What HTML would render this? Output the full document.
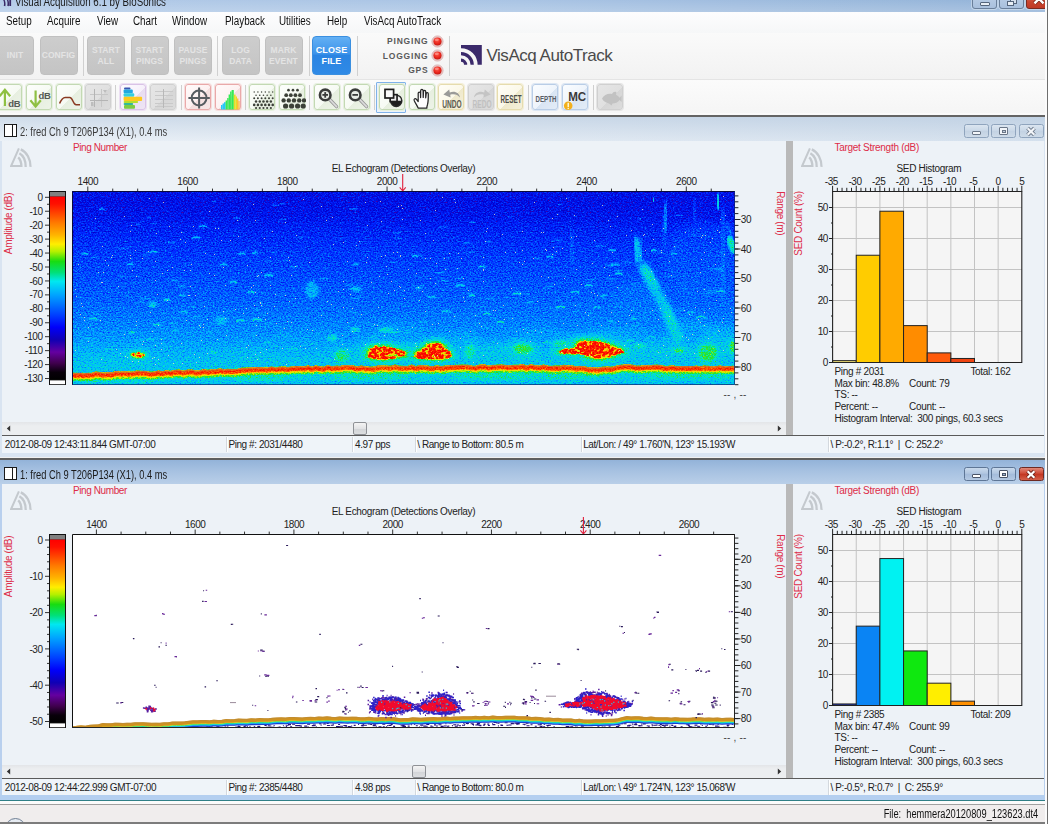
<!DOCTYPE html>
<html lang="en"><head><meta charset="utf-8"><title>Visual Acquisition 6.1 by BioSonics</title>
<style>
*{box-sizing:border-box;margin:0;padding:0}
html,body{width:1048px;height:824px;overflow:hidden;background:#f0f0f0;font-family:"Liberation Sans",sans-serif;}
.a{position:absolute}
#root{position:absolute;left:0;top:0;width:1048px;height:824px;overflow:hidden;background:#f0f0f0}
.t{position:absolute;white-space:nowrap;line-height:1}
.menu{font-size:12.5px;color:#111;top:15px;letter-spacing:-0.35px}
.bigbtn{position:absolute;top:36px;height:39px;width:38px;border-radius:4px;background:linear-gradient(#cdcdcd,#c4c4c4);border:1px solid #c0c0c0;color:#e4e4e4;font-weight:bold;font-size:8.5px;text-align:center;line-height:10.5px;display:flex;align-items:center;justify-content:center;letter-spacing:0.1px}
.vsep{position:absolute;width:1px;background:#d0d0d0}
.sb{position:absolute;top:83.8px;width:26px;height:26.4px;border-radius:3px;border:1px solid #c3d9b3;background:linear-gradient(135deg,#fdfefc 0%,#f6faf3 55%,#e7efe0 56%,#edf3e8 100%);box-shadow:0 0 0 1px #e6f0df}
.sb svg{position:absolute;left:0;top:0}
.sb.red{border-color:#e9a9a9;box-shadow:0 0 0 1px #f6dcdc;background:linear-gradient(135deg,#fffafa 0%,#fdf1f1 55%,#f3dede 56%,#f8e8e8 100%)}
.sb.gray{border-color:#d0d0d0;box-shadow:0 0 0 1px #e4e4e4;background:linear-gradient(135deg,#e6e6e6 0%,#e0e0e0 55%,#d6d6d6 56%,#dcdcdc 100%)}
.sb.pur{border-color:#d9c3e6;box-shadow:0 0 0 1px #ece0f3;background:linear-gradient(135deg,#fdfbff 0%,#f6f0fa 55%,#e8dcf0 56%,#efe6f5 100%)}
.sb.yel{border-color:#e6dcae;box-shadow:0 0 0 1px #f3eed6;background:linear-gradient(135deg,#fffef8 0%,#fbf8e8 55%,#efe9cc 56%,#f5f0da 100%)}
.sb.blu{border-color:#b9cde6;box-shadow:0 0 0 1px #dbe6f3;background:linear-gradient(135deg,#fbfdff 0%,#eef4fb 55%,#d9e5f3 56%,#e3ecf7 100%)}
.ct{font-size:10.5px;color:#222}
.red{color:#dc2a45}
.st{font-size:10.5px;color:#222;letter-spacing:-0.1px}
</style></head>
<body><div id="root">
<svg width="0" height="0" style="position:absolute"><defs>
<radialGradient id="led" cx="45%" cy="35%" r="70%"><stop offset="0" stop-color="#ff5a4a"/><stop offset=".6" stop-color="#e8251c"/><stop offset="1" stop-color="#b81810"/></radialGradient>
</defs></svg>
<div class="a" style="left:0;top:0;width:1045px;height:12px;background:linear-gradient(rgba(255,255,255,0),rgba(255,255,255,.18)),linear-gradient(90deg,#b3cbe8,#a9c4e4 50%,#93b3d8)"></div>
<svg class="a" style="left:0;top:0" width="12" height="8" viewBox="0 0 12 8"><path d="M0 -4 A9 9 0 0 1 4.5 6 M3 -5 A10 10 0 0 1 8 6" stroke="#3a2a66" stroke-width="1.6" fill="none"/><rect x="9.3" y="-2" width="1.8" height="8" fill="#3a2a66"/></svg>
<div class="t" style="top:-3.98px;font-size:12px;letter-spacing:0px;color:#1a1a1a;left:15.00px;transform:scaleX(0.812);transform-origin:left center;">Visual Acquisition 6.1 by BioSonics</div>
<div class="a" style="left:972px;top:-9px;width:25px;height:17.6px;border:1px solid #6a7f9a;border-radius:3px;background:linear-gradient(#c9d9ec,#b4c9e3 50%,#a9c0dd);box-shadow:0 0 0 1px rgba(255,255,255,.35)"></div>
<div class="a" style="left:999px;top:-9px;width:25px;height:17.6px;border:1px solid #6a7f9a;border-radius:3px;background:linear-gradient(#c9d9ec,#b4c9e3 50%,#a9c0dd);box-shadow:0 0 0 1px rgba(255,255,255,.35)"></div>
<div class="a" style="left:1026px;top:-9px;width:25px;height:17.6px;border:1px solid #7a2a20;border-radius:3px;background:linear-gradient(#dc8f80,#c9452f 60%,#c03a26);box-shadow:0 0 0 1px rgba(255,255,255,.35)"></div>
<div class="a" style="left:980px;top:1.6px;width:9.5px;height:4px;background:#e8eef5;border:1px solid #55657c;border-radius:1px"></div>
<div class="a" style="left:1010px;top:-2px;width:7px;height:6px;background:#d5dfec;border:1px solid #55657c"></div>
<div class="a" style="left:1007px;top:0.5px;width:6.5px;height:5.5px;background:#e8eef5;border:1px solid #55657c"></div>
<svg class="a" style="left:1033px;top:-3px" width="13" height="9" viewBox="0 0 13 9"><path d="M1.5 -3 L10.5 6.4 M10.5 -3 L1.5 6.4" stroke="#7a2a20" stroke-width="4"/><path d="M1.5 -3 L10.5 6.4 M10.5 -3 L1.5 6.4" stroke="#fff" stroke-width="2.4"/></svg>
<div class="a" style="left:0;top:12px;width:1048px;height:21px;background:linear-gradient(#fdfdfe,#f6f7f8)"></div>
<div class="t" style="top:14.92px;font-size:12px;letter-spacing:0px;color:#111;left:6.00px;transform:scaleX(0.82);transform-origin:left center;">Setup</div>
<div class="t" style="top:14.92px;font-size:12px;letter-spacing:0px;color:#111;left:47.00px;transform:scaleX(0.82);transform-origin:left center;">Acquire</div>
<div class="t" style="top:14.92px;font-size:12px;letter-spacing:0px;color:#111;left:97.00px;transform:scaleX(0.82);transform-origin:left center;">View</div>
<div class="t" style="top:14.92px;font-size:12px;letter-spacing:0px;color:#111;left:133.00px;transform:scaleX(0.82);transform-origin:left center;">Chart</div>
<div class="t" style="top:14.92px;font-size:12px;letter-spacing:0px;color:#111;left:172.00px;transform:scaleX(0.82);transform-origin:left center;">Window</div>
<div class="t" style="top:14.92px;font-size:12px;letter-spacing:0px;color:#111;left:225.00px;transform:scaleX(0.82);transform-origin:left center;">Playback</div>
<div class="t" style="top:14.92px;font-size:12px;letter-spacing:0px;color:#111;left:279.00px;transform:scaleX(0.82);transform-origin:left center;">Utilities</div>
<div class="t" style="top:14.92px;font-size:12px;letter-spacing:0px;color:#111;left:327.00px;transform:scaleX(0.82);transform-origin:left center;">Help</div>
<div class="t" style="top:14.92px;font-size:12px;letter-spacing:0px;color:#111;left:364.00px;transform:scaleX(0.82);transform-origin:left center;">VisAcq AutoTrack</div>
<div class="a" style="left:0;top:33px;width:1048px;height:46px;background:linear-gradient(#fafafa,#f2f2f2)"></div>
<div class="a" style="left:0;top:78.6px;width:1048px;height:1.4px;background:#e4e4e4"></div>
<div class="bigbtn" style="left:-4px">INIT</div>
<div class="bigbtn" style="left:39.5px">CONFIG</div>
<div class="bigbtn" style="left:87px">START<br>ALL</div>
<div class="bigbtn" style="left:130.5px">START<br>PINGS</div>
<div class="bigbtn" style="left:174px">PAUSE<br>PINGS</div>
<div class="bigbtn" style="left:221.5px">LOG<br>DATA</div>
<div class="bigbtn" style="left:264.5px">MARK<br>EVENT</div>
<div class="bigbtn" style="left:312px;width:39px;background:linear-gradient(#63b0f4,#3c93ea 45%,#2a84e2 50%,#2f8ae6);border-color:#3a8fe0;color:#fff;font-size:9px">CLOSE<br>FILE</div>
<div class="vsep" style="left:82.5px;top:36px;height:40px"></div>
<div class="vsep" style="left:217px;top:36px;height:40px"></div>
<div class="vsep" style="left:308.5px;top:36px;height:40px"></div>
<div class="vsep" style="left:356.5px;top:36px;height:40px"></div>
<div class="vsep" style="left:449px;top:36px;height:40px"></div>
<div class="t" style="top:37.13px;font-size:8.5px;letter-spacing:0.8px;color:#5a5a5a;font-weight:bold;right:619.50px;">PINGING</div>
<svg class="a" style="left:431.3px;top:34.8px" width="13" height="13" viewBox="-6.5 -6.5 13 13"><circle r="5.6" fill="#e8c8c8" stroke="#d9a9a9" stroke-width="0.8"/><circle r="4.1" fill="url(#led)"/><ellipse cx="-0.8" cy="-1.8" rx="2.2" ry="1.3" fill="#ff9a90" opacity=".75"/></svg>
<div class="t" style="top:51.54px;font-size:8.5px;letter-spacing:0.8px;color:#5a5a5a;font-weight:bold;right:619.50px;">LOGGING</div>
<svg class="a" style="left:431.3px;top:49.2px" width="13" height="13" viewBox="-6.5 -6.5 13 13"><circle r="5.6" fill="#e8c8c8" stroke="#d9a9a9" stroke-width="0.8"/><circle r="4.1" fill="url(#led)"/><ellipse cx="-0.8" cy="-1.8" rx="2.2" ry="1.3" fill="#ff9a90" opacity=".75"/></svg>
<div class="t" style="top:66.13px;font-size:8.5px;letter-spacing:0.8px;color:#5a5a5a;font-weight:bold;right:619.50px;">GPS</div>
<svg class="a" style="left:431.3px;top:63.8px" width="13" height="13" viewBox="-6.5 -6.5 13 13"><circle r="5.6" fill="#e8c8c8" stroke="#d9a9a9" stroke-width="0.8"/><circle r="4.1" fill="url(#led)"/><ellipse cx="-0.8" cy="-1.8" rx="2.2" ry="1.3" fill="#ff9a90" opacity=".75"/></svg>
<svg class="a" style="left:460.5px;top:44.5px" width="21" height="20" viewBox="0 0 21 20"><path fill="#3b2a6b" fill-rule="evenodd" d="M0 0 H20.8 V19.8 H16.6 A16.6 16.6 0 0 0 0 3.2 Z"/><path fill="none" stroke="#3b2a6b" stroke-width="3.3" d="M0 8.6 A11.2 11.2 0 0 1 11.2 19.8"/><path fill="none" stroke="#3b2a6b" stroke-width="3.2" d="M0 15.2 A4.6 4.6 0 0 1 4.6 19.8"/></svg>
<div class="t" style="top:47.47px;font-size:17px;letter-spacing:-0.47px;color:#4a4a4a;left:486.50px;">VisAcq AutoTrack</div>
<div class="a" style="left:0;top:80px;width:1048px;height:35px;background:linear-gradient(#fbfbfb,#f5f5f5)"></div>
<div class="a" style="left:0;top:113px;width:1048px;height:2px;background:#fafafa"></div>
<div class="a" style="left:0;top:115px;width:1046px;height:2px;background:#646464"></div>
<div class="vsep" style="left:115.3px;top:85px;height:25px;background:#cfcfcf"></div>
<div class="vsep" style="left:180.5px;top:85px;height:25px;background:#cfcfcf"></div>
<div class="vsep" style="left:245.2px;top:85px;height:25px;background:#cfcfcf"></div>
<div class="vsep" style="left:309.3px;top:85px;height:25px;background:#cfcfcf"></div>
<div class="vsep" style="left:373.8px;top:85px;height:25px;background:#cfcfcf"></div>
<div class="vsep" style="left:528.2px;top:85px;height:25px;background:#cfcfcf"></div>
<div class="vsep" style="left:592.6px;top:85px;height:25px;background:#cfcfcf"></div>
<div class="sb " style="left:-4.4px"><svg width="26" height="26" viewBox="0 0 26 26" font-family="Liberation Sans, sans-serif"><path d="M7.9 21 V5.5 M2.6 11.2 L7.9 4.8 L13.2 11.2" fill="none" stroke="#8fc043" stroke-width="2.2"/><text x="11.2" y="21.6" font-size="9.5" font-weight="bold" fill="#555a55" letter-spacing="-0.2">dB</text></svg></div>
<div class="sb " style="left:25.8px"><svg width="26" height="26" viewBox="0 0 26 26" font-family="Liberation Sans, sans-serif"><path d="M8.6 5.5 V21 M3.4 15.2 L8.6 21.6 L13.8 15.2" fill="none" stroke="#8fc043" stroke-width="2.2"/><text x="11.4" y="14" font-size="9.5" font-weight="bold" fill="#555a55" letter-spacing="-0.2">dB</text></svg></div>
<div class="sb " style="left:55.6px"><svg width="26" height="26" viewBox="0 0 26 26" font-family="Liberation Sans, sans-serif"><path d="M2.6 18.6 C4.2 14.5 5.8 12.4 8.2 12.4 L12.8 12.4 C16 12.4 15.8 19.8 19.2 19.8 L23 19.8" fill="none" stroke="#8a3a22" stroke-width="1.5"/></svg></div>
<div class="sb gray" style="left:85.4px"><svg width="26" height="26" viewBox="0 0 26 26" font-family="Liberation Sans, sans-serif"><g stroke="#c6c6c6" stroke-width="1" fill="none"><path d="M8.5 4 V22 M4 15.5 H22 M4 9.5 H22 M15.5 4 V22"/></g><g stroke="#b4b4b4" stroke-width="1"><path d="M8.5 4 V22 M4 15.5 H22"/></g><rect x="5" y="17" width="2.5" height="4" fill="#bdbdbd"/><path d="M17 5 h4 l-2 3z" fill="#bdbdbd"/></svg></div>
<div class="sb pur" style="left:119.8px"><svg width="26" height="26" viewBox="0 0 26 26" font-family="Liberation Sans, sans-serif"><rect x="3" y="2.6" width="6.5" height="2" rx="1" fill="#3a55b0"/><rect x="2.6" y="4.6" width="9.2" height="3.6" rx="1" fill="#22a8e0"/><rect x="2.6" y="8.2" width="10.6" height="3.6" rx="1" fill="#35cfe0"/><rect x="2.6" y="11.8" width="18.5" height="4.2" rx="1" fill="#ffc91e"/><rect x="2.6" y="16" width="14.5" height="2" rx="1" fill="#b4de30"/><rect x="2.6" y="18" width="9.6" height="2" rx="1" fill="#33b89a"/><rect x="3" y="20" width="11" height="3.8" rx="1" fill="#7ccc44"/></svg></div>
<div class="sb gray" style="left:149.8px"><svg width="26" height="26" viewBox="0 0 26 26" font-family="Liberation Sans, sans-serif"><g stroke="#c9c9c9" stroke-width="1"><path d="M4 6.5 H22 M4 10.5 H22 M4 14.5 H22 M4 18.5 H22 M4 21.5 H22"/></g><path d="M12.5 4 V23" stroke="#b8b8b8" stroke-width="1"/></svg></div>
<div class="sb red" style="left:184.8px"><svg width="26" height="26" viewBox="0 0 26 26" font-family="Liberation Sans, sans-serif"><g fill="none" stroke="#575c61" stroke-width="2"><circle cx="13.1" cy="13" r="7.4"/><path d="M13.1 2.6 V23.6 M2.4 13 H23.8"/></g></svg></div>
<div class="sb red" style="left:214.5px"><svg width="26" height="26" viewBox="0 0 26 26" font-family="Liberation Sans, sans-serif"><rect x="5" y="20" width="1.5" height="4.5" fill="#25c8fa"/><rect x="6.5" y="18.5" width="1.5" height="6.0" fill="#25c8fa"/><rect x="8" y="17.2" width="1.6" height="7.300000000000001" fill="#25c8fa"/><rect x="9.6" y="15.5" width="1.6" height="9.0" fill="#35ea55"/><rect x="11.2" y="13" width="1.4" height="11.5" fill="#35ea55"/><rect x="12.6" y="9.5" width="1.5" height="15.0" fill="#35ea55"/><rect x="14.1" y="6.5" width="1.5" height="18.0" fill="#35ea55"/><rect x="15.6" y="5" width="2.2" height="19.5" fill="#35ea55"/><rect x="17.8" y="9.6" width="1.8" height="14.9" fill="#e6df25"/><rect x="19.6" y="11.5" width="1.4" height="13.0" fill="#e6df25"/><rect x="21" y="13.5" width="1.4" height="11.0" fill="#ffbe3a"/><rect x="22.4" y="16" width="1.2" height="8.5" fill="#ffbe3a"/></svg></div>
<div class="sb " style="left:249.3px"><svg width="26" height="26" viewBox="0 0 26 26" font-family="Liberation Sans, sans-serif"><circle cx="4.20" cy="7" r="0.7" fill="#3c4038"/><circle cx="7.90" cy="7" r="0.7" fill="#3c4038"/><circle cx="11.60" cy="7" r="0.7" fill="#3c4038"/><circle cx="15.30" cy="7" r="0.7" fill="#3c4038"/><circle cx="19.00" cy="7" r="0.7" fill="#3c4038"/><circle cx="22.70" cy="7" r="0.7" fill="#3c4038"/><circle cx="6.05" cy="10.2" r="0.8" fill="#3c4038"/><circle cx="9.75" cy="10.2" r="0.8" fill="#3c4038"/><circle cx="13.45" cy="10.2" r="0.8" fill="#3c4038"/><circle cx="17.15" cy="10.2" r="0.8" fill="#3c4038"/><circle cx="20.85" cy="10.2" r="0.8" fill="#3c4038"/><circle cx="4.20" cy="13.3" r="1.0" fill="#3c4038"/><circle cx="7.90" cy="13.3" r="1.0" fill="#3c4038"/><circle cx="11.60" cy="13.3" r="1.0" fill="#3c4038"/><circle cx="15.30" cy="13.3" r="1.0" fill="#3c4038"/><circle cx="19.00" cy="13.3" r="1.0" fill="#3c4038"/><circle cx="22.70" cy="13.3" r="1.0" fill="#3c4038"/><circle cx="6.05" cy="16.5" r="1.25" fill="#3c4038"/><circle cx="9.75" cy="16.5" r="1.25" fill="#3c4038"/><circle cx="13.45" cy="16.5" r="1.25" fill="#3c4038"/><circle cx="17.15" cy="16.5" r="1.25" fill="#3c4038"/><circle cx="20.85" cy="16.5" r="1.25" fill="#3c4038"/><circle cx="4.20" cy="19.9" r="1.3" fill="#3c4038"/><circle cx="7.90" cy="19.9" r="1.3" fill="#3c4038"/><circle cx="11.60" cy="19.9" r="1.3" fill="#3c4038"/><circle cx="15.30" cy="19.9" r="1.3" fill="#3c4038"/><circle cx="19.00" cy="19.9" r="1.3" fill="#3c4038"/><circle cx="22.70" cy="19.9" r="1.3" fill="#3c4038"/><circle cx="6.05" cy="23" r="1.1" fill="#3c4038"/><circle cx="9.75" cy="23" r="1.1" fill="#3c4038"/><circle cx="13.45" cy="23" r="1.1" fill="#3c4038"/><circle cx="17.15" cy="23" r="1.1" fill="#3c4038"/><circle cx="20.85" cy="23" r="1.1" fill="#3c4038"/></svg></div>
<div class="sb " style="left:279.2px"><svg width="26" height="26" viewBox="0 0 26 26" font-family="Liberation Sans, sans-serif"><circle cx="8.5" cy="5.2" r="1.35" fill="#3c4038"/><circle cx="13" cy="5.2" r="1.35" fill="#3c4038"/><circle cx="17.5" cy="5.2" r="1.35" fill="#3c4038"/><circle cx="6.2" cy="10.2" r="1.9" fill="#3c4038"/><circle cx="10.8" cy="10.2" r="1.9" fill="#3c4038"/><circle cx="15.4" cy="10.2" r="1.9" fill="#3c4038"/><circle cx="20" cy="10.2" r="1.9" fill="#3c4038"/><circle cx="3.6" cy="15.4" r="2.2" fill="#3c4038"/><circle cx="8.8" cy="15.4" r="2.2" fill="#3c4038"/><circle cx="14" cy="15.4" r="2.2" fill="#3c4038"/><circle cx="19.2" cy="15.4" r="2.2" fill="#3c4038"/><circle cx="24" cy="15.4" r="2.2" fill="#3c4038"/><circle cx="5.6" cy="21" r="2.6" fill="#3c4038"/><circle cx="11.6" cy="21" r="2.6" fill="#3c4038"/><circle cx="17.6" cy="21" r="2.6" fill="#3c4038"/><circle cx="23.2" cy="21" r="2.6" fill="#3c4038"/></svg></div>
<div class="sb " style="left:313.8px"><svg width="26" height="26" viewBox="0 0 26 26" font-family="Liberation Sans, sans-serif"><path d="M14.5 14.2 L21.6 21.6" stroke="#9a9a9a" stroke-width="3.4" stroke-linecap="round"/><path d="M14.5 14.2 L21.6 21.6" stroke="#dcdcdc" stroke-width="1.6" stroke-linecap="round"/><circle cx="10.2" cy="9.9" r="5.3" fill="#e8ece6" stroke="#3a3c3a" stroke-width="2.6"/><path d="M7.4 9.9 H13" stroke="#3a3c3a" stroke-width="1.8"/><path d="M10.2 7.1 V12.7" stroke="#3a3c3a" stroke-width="1.8"/></svg></div>
<div class="sb " style="left:343.5px"><svg width="26" height="26" viewBox="0 0 26 26" font-family="Liberation Sans, sans-serif"><path d="M14.5 14.2 L21.6 21.6" stroke="#9a9a9a" stroke-width="3.4" stroke-linecap="round"/><path d="M14.5 14.2 L21.6 21.6" stroke="#dcdcdc" stroke-width="1.6" stroke-linecap="round"/><circle cx="10.2" cy="9.9" r="5.3" fill="#e8ece6" stroke="#3a3c3a" stroke-width="2.6"/><path d="M7.4 9.9 H13" stroke="#3a3c3a" stroke-width="1.8"/></svg></div>
<div class="a" style="left:376.2px;top:81.5px;width:30.2px;height:31px;border:1px solid #7fb2ea;background:#eaf2fb;border-radius:1px"></div>
<div class="sb " style="left:378.5px"><svg width="26" height="26" viewBox="0 0 26 26" font-family="Liberation Sans, sans-serif"><circle cx="16.2" cy="15.8" r="5.6" fill="#f2f2f2" stroke="#2a2a2a" stroke-width="1.5"/><path d="M10.8 15.8 A5.4 5.4 0 0 0 21.6 15.8 Z" fill="#1e1e1e"/><rect x="9.3" y="8.8" width="8.6" height="8.6" fill="#1e1e1e"/><rect x="11" y="10.5" width="5.2" height="5.2" fill="#ececec"/><rect x="5" y="4.4" width="8.6" height="8.6" fill="#fafafa" stroke="#1e1e1e" stroke-width="1.7"/></svg></div>
<div class="sb " style="left:408.5px"><svg width="26" height="26" viewBox="0 0 26 26" font-family="Liberation Sans, sans-serif"><path d="M8.3 23.2 C7 20.5 5.2 17.8 4.2 15.4 C3.6 13.8 5.4 13 6.5 14.4 L8.2 16.6 L8.2 8.2 C8.2 6.6 10.4 6.6 10.5 8.2 L10.6 12.6 L10.7 5.6 C10.8 4 13 4 13.1 5.6 L13.2 12.4 L13.5 6.4 C13.6 4.9 15.7 5 15.7 6.5 L15.7 12.8 L16.2 8.6 C16.4 7.2 18.3 7.4 18.3 8.9 C18.3 12.5 18.4 16 17.6 19.2 C17.2 20.6 16.8 21.8 16.8 23.2 Z" fill="#fdfdfd" stroke="#262626" stroke-width="1.25" stroke-linejoin="round"/></svg></div>
<div class="sb yel" style="left:438.2px"><svg width="26" height="26" viewBox="0 0 26 26" font-family="Liberation Sans, sans-serif"><path d="M21 12.6 C20.5 8 16 5.6 10.8 7.4 L10.2 4.6 L4.4 9.6 L11.6 12.4 L11.2 9.8 C15.2 8.6 18.8 9.8 21 12.6 Z" fill="#9a9a98"/><text x="13" y="23" font-size="10" font-weight="bold" fill="#5a5a50" text-anchor="middle" textLength="19.4" lengthAdjust="spacingAndGlyphs">UNDO</text></svg></div>
<div class="sb gray" style="left:468px"><svg width="26" height="26" viewBox="0 0 26 26" font-family="Liberation Sans, sans-serif"><path d="M5 12.6 C5.5 8 10 5.6 15.2 7.4 L15.8 4.6 L21.6 9.6 L14.4 12.4 L14.8 9.8 C10.8 8.6 7.2 9.8 5 12.6 Z" fill="#c4c4c4"/><text x="13" y="23" font-size="10" font-weight="bold" fill="#c0c0c0" text-anchor="middle" textLength="19" lengthAdjust="spacingAndGlyphs">REDO</text></svg></div>
<div class="sb yel" style="left:497.4px"><svg width="26" height="26" viewBox="0 0 26 26" font-family="Liberation Sans, sans-serif"><text x="13" y="17.7" font-size="10.6" font-weight="bold" fill="#4e4e48" text-anchor="middle" textLength="21" lengthAdjust="spacingAndGlyphs">RESET</text></svg></div>
<div class="sb blu" style="left:532.3px"><svg width="26" height="26" viewBox="0 0 26 26" font-family="Liberation Sans, sans-serif"><text x="13" y="17" font-size="9.6" font-weight="bold" fill="#5a5e66" text-anchor="middle" textLength="21" lengthAdjust="spacingAndGlyphs">DEPTH</text></svg></div>
<div class="sb blu" style="left:562.1px"><svg width="26" height="26" viewBox="0 0 26 26" font-family="Liberation Sans, sans-serif"><text x="14.2" y="16.4" font-size="12.2" font-weight="bold" fill="#3a3a3a" text-anchor="middle" textLength="18" lengthAdjust="spacingAndGlyphs">MC</text><circle cx="5.2" cy="20.8" r="4.3" fill="#f2b01e"/><rect x="4.5" y="17.8" width="1.5" height="4.2" fill="#fff6d0"/><rect x="4.5" y="22.8" width="1.5" height="1.3" fill="#fff6d0"/></svg></div>
<div class="sb gray" style="left:597px"><svg width="26" height="26" viewBox="0 0 26 26" font-family="Liberation Sans, sans-serif"><path d="M4 13.6 C6 9.8 10 8.2 14 9 C15 7 17 6.4 18.4 7.2 L18 9.8 C19.8 10.6 21 11.8 21.6 12.8 L23.6 10.6 L23.6 17 L21.6 15 C20 17.4 17 18.6 14.4 18.6 L13.6 20.6 L11 18.4 C8 18 5.4 16.4 4 13.6 Z" fill="#c2c2c2"/></svg></div>
<svg width="0" height="0" style="position:absolute"><defs><linearGradient id="cbar" x1="0" y1="0" x2="0" y2="1"><stop offset="0" stop-color="#ff0000"/><stop offset="0.04" stop-color="#ff1000"/><stop offset="0.143" stop-color="#ff7a00"/><stop offset="0.21" stop-color="#ffb400"/><stop offset="0.26" stop-color="#ffee00"/><stop offset="0.3" stop-color="#b4f000"/><stop offset="0.354" stop-color="#18dc10"/><stop offset="0.415" stop-color="#00e07a"/><stop offset="0.463" stop-color="#00e8f0"/><stop offset="0.537" stop-color="#00a4ff"/><stop offset="0.646" stop-color="#0040ff"/><stop offset="0.714" stop-color="#0000fa"/><stop offset="0.782" stop-color="#1000b4"/><stop offset="0.85" stop-color="#6400a0"/><stop offset="0.91" stop-color="#40004e"/><stop offset="0.96" stop-color="#08000a"/><stop offset="1" stop-color="#000"/></linearGradient></defs></svg>
<div class="a" style="left:0;top:117px;width:1046px;height:340px;background:#d9e4f1"></div>
<div class="a" style="left:0;top:117px;width:1046px;height:24px;background:linear-gradient(90deg,#e4ecf4,#d4e0ed 60%,#c6d6e7)"></div>
<div class="a" style="left:0;top:117px;width:1046px;height:24px;background:linear-gradient(rgba(190,207,226,.55),rgba(255,255,255,.25))"></div>
<div class="a" style="left:4px;top:124px;width:12.8px;height:12.8px;background:#fff;border:1px solid #1a1a1a"></div>
<div class="a" style="left:12.4px;top:124px;width:1px;height:12.5px;background:#1a1a1a"></div>
<div class="t" style="top:126.02px;font-size:12px;letter-spacing:0px;color:#3c3c3c;left:20.00px;transform:scaleX(0.775);transform-origin:left center;">2: fred Ch 9 T206P134 (X1), 0.4 ms</div>
<div class="a" style="left:963.5px;top:124px;width:25px;height:14px;border-radius:2.5px;background:linear-gradient(#dbe5f0,#cbd9e8 45%,#c3d2e3 50%,#cedbe9);border:1px solid #8fa4bd"></div>
<div class="a" style="left:991px;top:124px;width:25px;height:14px;border-radius:2.5px;background:linear-gradient(#dbe5f0,#cbd9e8 45%,#c3d2e3 50%,#cedbe9);border:1px solid #8fa4bd"></div>
<div class="a" style="left:1018.5px;top:124px;width:25px;height:14px;border-radius:2.5px;background:linear-gradient(#dbe5f0,#cbd9e8 45%,#c3d2e3 50%,#cedbe9);border:1px solid #8fa4bd"></div>
<div class="a" style="left:972px;top:131px;width:9px;height:4px;background:#f2f5f9;border:1px solid #6a7687;border-radius:1px"></div>
<div class="a" style="left:999px;top:126.5px;width:9px;height:8px;background:#f2f5f9;border:1px solid #6a7687;border-radius:1px"></div>
<div class="a" style="left:1001.5px;top:129.5px;width:4px;height:3px;background:#c3d0df;border:1px solid #6a7687"></div>
<svg class="a" style="left:1025px;top:125.5px" width="12" height="11" viewBox="0 0 12 11"><path d="M2.6 2.2 L9.4 8.8 M9.4 2.2 L2.6 8.8" stroke="#6a7687" stroke-width="3.8"/><path d="M2.6 2.2 L9.4 8.8 M9.4 2.2 L2.6 8.8" stroke="#f2f5f9" stroke-width="2.2"/></svg>
<div class="a" style="left:2px;top:141px;width:1041.5px;height:294px;background:#edf2f7"></div>
<div class="a" style="left:786px;top:141px;width:7px;height:294px;background:#b9b9b9"></div>
<svg class="a" style="left:9.5px;top:147px" width="23" height="21" viewBox="0 0 23 21"><g fill="none" stroke="#c4c9ce"><path d="M8.9 1.3 L1.1 19 L11 19" stroke-width="2"/><path d="M8.2 10.4 A5.7 10.7 0 0 1 11.4 19.9" stroke-width="2.3"/><path d="M9.4 6.2 A10 14.7 0 0 1 15.7 19.9" stroke-width="2.3"/><path d="M10.8 2.4 A14.8 18.1 0 0 1 20.5 19.9" stroke-width="2.3"/></g></svg>
<svg class="a" style="left:800.5px;top:147px" width="23" height="21" viewBox="0 0 23 21"><g fill="none" stroke="#c4c9ce"><path d="M8.9 1.3 L1.1 19 L11 19" stroke-width="2"/><path d="M8.2 10.4 A5.7 10.7 0 0 1 11.4 19.9" stroke-width="2.3"/><path d="M9.4 6.2 A10 14.7 0 0 1 15.7 19.9" stroke-width="2.3"/><path d="M10.8 2.4 A14.8 18.1 0 0 1 20.5 19.9" stroke-width="2.3"/></g></svg>
<div class="t" style="top:142.70px;font-size:10px;letter-spacing:-0.4px;color:#dd2c48;left:73.00px;">Ping Number</div>
<div class="t" style="top:142.70px;font-size:10px;letter-spacing:-0.28px;color:#dd2c48;left:834.50px;">Target Strength (dB)</div>
<div class="t" style="top:163.70px;font-size:10px;letter-spacing:-0.33px;color:#222;left:331.70px;">EL Echogram (Detections Overlay)</div>
<div class="t" style="top:164.00px;font-size:10px;letter-spacing:-0.3px;color:#222;left:896.40px;">SED Histogram</div>
<svg class="a" style="left:0;top:141px" width="790" height="294" viewBox="0 141 790 294" font-family="Liberation Sans, sans-serif" font-size="10"><path d="M87.80 186.5 V191 M112.74 188.6 V191 M137.68 188.6 V191 M162.61 188.6 V191 M187.55 186.5 V191 M212.49 188.6 V191 M237.43 188.6 V191 M262.36 188.6 V191 M287.30 186.5 V191 M312.24 188.6 V191 M337.18 188.6 V191 M362.11 188.6 V191 M387.05 186.5 V191 M411.99 188.6 V191 M436.93 188.6 V191 M461.86 188.6 V191 M486.80 186.5 V191 M511.74 188.6 V191 M536.67 188.6 V191 M561.61 188.6 V191 M586.55 186.5 V191 M611.49 188.6 V191 M636.42 188.6 V191 M661.36 188.6 V191 M686.30 186.5 V191 M711.24 188.6 V191" stroke="#333" stroke-width="1" fill="none"/><text x="87.80" y="185" text-anchor="middle" fill="#222" letter-spacing="-0.45">1400</text><text x="187.55" y="185" text-anchor="middle" fill="#222" letter-spacing="-0.45">1600</text><text x="287.30" y="185" text-anchor="middle" fill="#222" letter-spacing="-0.45">1800</text><text x="387.05" y="185" text-anchor="middle" fill="#222" letter-spacing="-0.45">2000</text><text x="486.80" y="185" text-anchor="middle" fill="#222" letter-spacing="-0.45">2200</text><text x="586.55" y="185" text-anchor="middle" fill="#222" letter-spacing="-0.45">2400</text><text x="686.30" y="185" text-anchor="middle" fill="#222" letter-spacing="-0.45">2600</text><path d="M402.7 174 V191 M399.7 187.4 L402.7 191 L405.7 187.4" stroke="#e0203c" stroke-width="1.1" fill="none"/><rect x="49" y="191" width="17" height="194" fill="#111"/><rect x="50" y="192" width="15" height="4.6" fill="#808080"/><rect x="50" y="196.6" width="15" height="183" fill="url(#cbar)"/><rect x="50" y="380.4" width="15" height="3.8" fill="#fff"/><text x="42.7" y="200.90" text-anchor="end" fill="#222" letter-spacing="-0.4">0</text><text x="42.7" y="214.84" text-anchor="end" fill="#222" letter-spacing="-0.4">-10</text><text x="42.7" y="228.78" text-anchor="end" fill="#222" letter-spacing="-0.4">-20</text><text x="42.7" y="242.72" text-anchor="end" fill="#222" letter-spacing="-0.4">-30</text><text x="42.7" y="256.66" text-anchor="end" fill="#222" letter-spacing="-0.4">-40</text><text x="42.7" y="270.60" text-anchor="end" fill="#222" letter-spacing="-0.4">-50</text><text x="42.7" y="284.54" text-anchor="end" fill="#222" letter-spacing="-0.4">-60</text><text x="42.7" y="298.48" text-anchor="end" fill="#222" letter-spacing="-0.4">-70</text><text x="42.7" y="312.42" text-anchor="end" fill="#222" letter-spacing="-0.4">-80</text><text x="42.7" y="326.36" text-anchor="end" fill="#222" letter-spacing="-0.4">-90</text><text x="42.7" y="340.30" text-anchor="end" fill="#222" letter-spacing="-0.4">-100</text><text x="42.7" y="354.24" text-anchor="end" fill="#222" letter-spacing="-0.4">-110</text><text x="42.7" y="368.18" text-anchor="end" fill="#222" letter-spacing="-0.4">-120</text><text x="42.7" y="382.12" text-anchor="end" fill="#222" letter-spacing="-0.4">-130</text><path d="M45 197.30 H49 M45 211.24 H49 M45 225.18 H49 M45 239.12 H49 M45 253.06 H49 M45 267.00 H49 M45 280.94 H49 M45 294.88 H49 M45 308.82 H49 M45 322.76 H49 M45 336.70 H49 M45 350.64 H49 M45 364.58 H49 M45 378.52 H49 M47 204.27 H49 M47 218.21 H49 M47 232.15 H49 M47 246.09 H49 M47 260.03 H49 M47 273.97 H49 M47 287.91 H49 M47 301.85 H49 M47 315.79 H49 M47 329.73 H49 M47 343.67 H49 M47 357.61 H49 M47 371.55 H49" stroke="#333" stroke-width="1" fill="none"/><text transform="translate(11.6 223.5) rotate(-90)" text-anchor="middle" fill="#dd2c48" letter-spacing="-0.35">Amplitude (dB)</text><text x="740.8" y="223.10" fill="#222" letter-spacing="-0.4">30</text><text x="740.8" y="252.60" fill="#222" letter-spacing="-0.4">40</text><text x="740.8" y="282.10" fill="#222" letter-spacing="-0.4">50</text><text x="740.8" y="311.60" fill="#222" letter-spacing="-0.4">60</text><text x="740.8" y="341.10" fill="#222" letter-spacing="-0.4">70</text><text x="740.8" y="370.60" fill="#222" letter-spacing="-0.4">80</text><path d="M735 219.50 H740.5 M735 249.00 H740.5 M735 278.50 H740.5 M735 308.00 H740.5 M735 337.50 H740.5 M735 367.00 H740.5 M735 195.90 H738.4 M735 201.80 H738.4 M735 207.70 H738.4 M735 213.60 H738.4 M735 219.50 H738.4 M735 225.40 H738.4 M735 231.30 H738.4 M735 237.20 H738.4 M735 243.10 H738.4 M735 249.00 H738.4 M735 254.90 H738.4 M735 260.80 H738.4 M735 266.70 H738.4 M735 272.60 H738.4 M735 278.50 H738.4 M735 284.40 H738.4 M735 290.30 H738.4 M735 296.20 H738.4 M735 302.10 H738.4 M735 308.00 H738.4 M735 313.90 H738.4 M735 319.80 H738.4 M735 325.70 H738.4 M735 331.60 H738.4 M735 337.50 H738.4 M735 343.40 H738.4 M735 349.30 H738.4 M735 355.20 H738.4 M735 361.10 H738.4 M735 367.00 H738.4 M735 372.90 H738.4 M735 378.80 H738.4 M735 384.70 H738.4" stroke="#222" stroke-width="1" fill="none"/><text transform="translate(777.4 213.2) rotate(90)" text-anchor="middle" fill="#dd2c48" letter-spacing="-0.35">Range (m)</text><text x="723.5" y="397.5" fill="#444" letter-spacing="0.2">-- , --</text></svg>
<svg class="a" style="left:72px;top:191px" width="663" height="194" viewBox="72 191 663 194"><defs><filter id="cm" x="0" y="0" width="1" height="1" filterUnits="objectBoundingBox" color-interpolation-filters="sRGB"><feTurbulence type="fractalNoise" baseFrequency="0.6 0.8" numOctaves="2" seed="7" result="n0"/><feColorMatrix in="n0" type="matrix" values="1 0 0 0 0  1 0 0 0 0  1 0 0 0 0  0 0 0 0 1" result="n"/><feComposite in="SourceGraphic" in2="n" operator="arithmetic" k1="0" k2="1" k3="0.34" k4="-0.17" result="s"/><feComponentTransfer in="s"><feFuncR type="table" tableValues="0.376 0.000 0.000 0.000 0.000 0.000 0.157 0.839 1.000 1.000 1.000 0.980"/><feFuncG type="table" tableValues="0.000 0.000 0.141 0.439 0.722 0.910 0.886 0.941 0.808 0.494 0.196 0.000"/><feFuncB type="table" tableValues="0.588 0.804 1.000 1.000 1.000 0.784 0.118 0.000 0.000 0.000 0.000 0.000"/></feComponentTransfer></filter><filter id="b1" x="-0.5" y="-0.5" width="2" height="2"><feGaussianBlur stdDeviation="0.9"/></filter><filter id="b2" x="-0.5" y="-0.5" width="2" height="2"><feGaussianBlur stdDeviation="2"/></filter><filter id="b4" x="-0.5" y="-0.5" width="2" height="2"><feGaussianBlur stdDeviation="4"/></filter><filter id="rough" x="-0.1" y="-0.3" width="1.2" height="1.6"><feTurbulence type="fractalNoise" baseFrequency="0.5 0.35" numOctaves="2" seed="3" result="t"/><feDisplacementMap in="SourceGraphic" in2="t" scale="4" xChannelSelector="R" yChannelSelector="G"/></filter><linearGradient id="bgT" gradientUnits="userSpaceOnUse" x1="0" y1="191" x2="0" y2="385"><stop offset="0.000" stop-color="#242424"/><stop offset="0.046" stop-color="#222222"/><stop offset="0.124" stop-color="#252525"/><stop offset="0.201" stop-color="#2c2c2c"/><stop offset="0.304" stop-color="#333333"/><stop offset="0.433" stop-color="#3a3a3a"/><stop offset="0.562" stop-color="#414141"/><stop offset="0.675" stop-color="#4a4a4a"/><stop offset="0.768" stop-color="#535353"/><stop offset="0.830" stop-color="#5c5c5c"/><stop offset="0.892" stop-color="#616161"/><stop offset="1.000" stop-color="#616161"/></linearGradient><linearGradient id="rt" gradientUnits="userSpaceOnUse" x1="560" y1="0" x2="735" y2="0"><stop offset="0" stop-color="#fff" stop-opacity="0"/><stop offset="1" stop-color="#fff" stop-opacity="0.035"/></linearGradient></defs><g filter="url(#cm)"><rect x="72" y="191" width="663" height="194" fill="url(#bgT)"/><path d="M72.0 376.8 L76.0 376.9 L80.0 376.9 L84.0 377.1 L88.0 376.7 L92.0 376.9 L96.0 375.4 L100.0 376.0 L104.0 376.7 L108.0 376.1 L112.0 376.4 L116.0 375.0 L120.0 375.5 L124.3 375.1 L128.6 375.5 L132.9 375.5 L137.1 374.5 L141.4 374.8 L145.7 374.9 L150.0 375.9 L154.2 375.5 L158.3 374.4 L162.5 375.3 L166.7 374.2 L170.8 374.8 L175.0 373.9 L179.2 373.6 L183.3 374.8 L187.5 373.6 L191.7 373.4 L195.8 374.5 L200.0 374.2 L204.0 373.1 L208.0 374.0 L212.0 373.1 L216.0 373.2 L220.0 372.3 L224.0 373.3 L228.0 372.7 L232.5 373.0 L237.0 372.8 L241.5 371.8 L246.0 371.8 L250.5 371.4 L255.0 371.2 L259.2 371.0 L263.3 371.2 L267.5 371.5 L271.7 370.4 L275.8 371.3 L280.0 370.6 L284.0 370.5 L288.0 371.1 L292.0 370.4 L296.0 370.0 L300.0 370.2 L304.0 370.5 L308.0 369.4 L312.0 370.8 L316.0 369.3 L320.0 370.4 L324.0 370.5 L328.0 369.1 L332.0 370.3 L336.0 369.6 L340.0 369.9 L344.3 369.0 L348.6 369.1 L352.9 369.3 L357.1 370.6 L361.4 369.4 L365.7 370.3 L370.0 370.6 L374.2 370.5 L378.3 369.4 L382.5 369.3 L386.7 369.5 L390.8 369.8 L395.0 368.6 L399.2 369.7 L403.3 369.8 L407.5 370.0 L411.7 368.7 L415.8 370.2 L420.0 368.9 L424.3 369.3 L428.6 369.7 L432.9 370.2 L437.1 369.2 L441.4 370.1 L445.7 369.5 L450.0 369.1 L454.3 369.0 L458.6 368.8 L462.9 368.6 L467.1 368.6 L471.4 369.4 L475.7 369.9 L480.0 368.5 L484.3 368.2 L488.6 369.7 L492.9 368.9 L497.1 368.7 L501.4 368.4 L505.7 368.9 L510.0 369.2 L514.2 368.7 L518.3 368.7 L522.5 368.1 L526.7 369.6 L530.8 368.2 L535.0 369.0 L539.2 369.6 L543.3 368.5 L547.5 369.5 L551.7 369.9 L555.8 369.5 L560.0 369.8 L564.0 368.8 L568.0 369.5 L572.0 369.2 L576.0 370.4 L580.0 369.7 L584.5 370.2 L589.0 371.2 L593.5 371.2 L598.0 371.7 L602.7 370.6 L607.3 370.5 L612.0 370.7 L616.0 369.7 L620.0 368.9 L624.0 368.5 L628.0 368.2 L632.0 368.6 L636.0 369.6 L640.0 369.6 L644.0 369.2 L648.0 369.1 L652.0 368.9 L656.0 368.6 L660.0 368.9 L664.0 369.8 L668.0 370.0 L672.0 369.3 L676.0 370.0 L680.0 370.0 L684.0 370.0 L688.0 370.0 L692.0 370.2 L696.0 369.6 L700.0 370.2 L704.0 369.5 L708.0 369.8 L712.0 370.2 L716.0 370.0 L720.0 369.4 L725.0 370.4 L730.0 370.0 L735.0 369.8 L735 386 L72 386 Z" fill="#666666"/><ellipse cx="125.0" cy="382.7" rx="45.0" ry="3.5" fill="#7b7b7b" opacity="0.7" filter="url(#b2)"/><ellipse cx="260.0" cy="378.3" rx="30.0" ry="3.5" fill="#7b7b7b" opacity="0.7" filter="url(#b2)"/><ellipse cx="370.0" cy="376.3" rx="40.0" ry="3.5" fill="#7b7b7b" opacity="0.7" filter="url(#b2)"/><ellipse cx="495.0" cy="375.9" rx="45.0" ry="3.5" fill="#7b7b7b" opacity="0.7" filter="url(#b2)"/><ellipse cx="570.0" cy="375.8" rx="30.0" ry="3.5" fill="#7b7b7b" opacity="0.7" filter="url(#b2)"/><ellipse cx="685.0" cy="375.4" rx="45.0" ry="3.5" fill="#7b7b7b" opacity="0.7" filter="url(#b2)"/><rect x="72" y="381" width="663" height="5" fill="#5d5d5d" opacity="0.6" filter="url(#b1)"/><path d="M72.0 368.8 L76.0 368.9 L80.0 368.9 L84.0 369.1 L88.0 368.7 L92.0 368.9 L96.0 367.4 L100.0 368.0 L104.0 368.7 L108.0 368.1 L112.0 368.4 L116.0 367.0 L120.0 367.5 L124.3 367.1 L128.6 367.5 L132.9 367.5 L137.1 366.5 L141.4 366.8 L145.7 366.9 L150.0 367.9 L154.2 367.5 L158.3 366.4 L162.5 367.3 L166.7 366.2 L170.8 366.8 L175.0 365.9 L179.2 365.6 L183.3 366.8 L187.5 365.6 L191.7 365.4 L195.8 366.5 L200.0 366.2 L204.0 365.1 L208.0 366.0 L212.0 365.1 L216.0 365.2 L220.0 364.3 L224.0 365.3 L228.0 364.7 L232.5 365.0 L237.0 364.8 L241.5 363.8 L246.0 363.8 L250.5 363.4 L255.0 363.2 L259.2 363.0 L263.3 363.2 L267.5 363.5 L271.7 362.4 L275.8 363.3 L280.0 362.6 L284.0 362.5 L288.0 363.1 L292.0 362.4 L296.0 362.0 L300.0 362.2 L304.0 362.5 L308.0 361.4 L312.0 362.8 L316.0 361.3 L320.0 362.4 L324.0 362.5 L328.0 361.1 L332.0 362.3 L336.0 361.6 L340.0 361.9 L344.3 361.0 L348.6 361.1 L352.9 361.3 L357.1 362.6 L361.4 361.4 L365.7 362.3 L370.0 362.6 L374.2 362.5 L378.3 361.4 L382.5 361.3 L386.7 361.5 L390.8 361.8 L395.0 360.6 L399.2 361.7 L403.3 361.8 L407.5 362.0 L411.7 360.7 L415.8 362.2 L420.0 360.9 L424.3 361.3 L428.6 361.7 L432.9 362.2 L437.1 361.2 L441.4 362.1 L445.7 361.5 L450.0 361.1 L454.3 361.0 L458.6 360.8 L462.9 360.6 L467.1 360.6 L471.4 361.4 L475.7 361.9 L480.0 360.5 L484.3 360.2 L488.6 361.7 L492.9 360.9 L497.1 360.7 L501.4 360.4 L505.7 360.9 L510.0 361.2 L514.2 360.7 L518.3 360.7 L522.5 360.1 L526.7 361.6 L530.8 360.2 L535.0 361.0 L539.2 361.6 L543.3 360.5 L547.5 361.5 L551.7 361.9 L555.8 361.5 L560.0 361.8 L564.0 360.8 L568.0 361.5 L572.0 361.2 L576.0 362.4 L580.0 361.7 L584.5 362.2 L589.0 363.2 L593.5 363.2 L598.0 363.7 L602.7 362.6 L607.3 362.5 L612.0 362.7 L616.0 361.7 L620.0 360.9 L624.0 360.5 L628.0 360.2 L632.0 360.6 L636.0 361.6 L640.0 361.6 L644.0 361.2 L648.0 361.1 L652.0 360.9 L656.0 360.6 L660.0 360.9 L664.0 361.8 L668.0 362.0 L672.0 361.3 L676.0 362.0 L680.0 362.0 L684.0 362.0 L688.0 362.0 L692.0 362.2 L696.0 361.6 L700.0 362.2 L704.0 361.5 L708.0 361.8 L712.0 362.2 L716.0 362.0 L720.0 361.4 L725.0 362.4 L730.0 362.0 L735.0 361.8" stroke="#646464" stroke-width="8" fill="none" opacity="0.55" filter="url(#b2)"/><path d="M72.0 377.4 L76.0 377.5 L80.0 377.5 L84.0 377.7 L88.0 377.3 L92.0 377.5 L96.0 376.0 L100.0 376.6 L104.0 377.3 L108.0 376.7 L112.0 377.0 L116.0 375.6 L120.0 376.1 L124.3 375.7 L128.6 376.1 L132.9 376.1 L137.1 375.1 L141.4 375.4 L145.7 375.5 L150.0 376.5 L154.2 376.1 L158.3 375.0 L162.5 375.9 L166.7 374.8 L170.8 375.4 L175.0 374.5 L179.2 374.2 L183.3 375.4 L187.5 374.2 L191.7 374.0 L195.8 375.1 L200.0 374.8 L204.0 373.7 L208.0 374.6 L212.0 373.7 L216.0 373.8 L220.0 372.9 L224.0 373.9 L228.0 373.3 L232.5 373.6 L237.0 373.4 L241.5 372.4 L246.0 372.4 L250.5 372.0 L255.0 371.8 L259.2 371.6 L263.3 371.8 L267.5 372.1 L271.7 371.0 L275.8 371.9 L280.0 371.2 L284.0 371.1 L288.0 371.7 L292.0 371.0 L296.0 370.6 L300.0 370.8 L304.0 371.1 L308.0 370.0 L312.0 371.4 L316.0 369.9 L320.0 371.0 L324.0 371.1 L328.0 369.7 L332.0 370.9 L336.0 370.2 L340.0 370.5 L344.3 369.6 L348.6 369.7 L352.9 369.9 L357.1 371.2 L361.4 370.0 L365.7 370.9 L370.0 371.2 L374.2 371.1 L378.3 370.0 L382.5 369.9 L386.7 370.1 L390.8 370.4 L395.0 369.2 L399.2 370.3 L403.3 370.4 L407.5 370.6 L411.7 369.3 L415.8 370.8 L420.0 369.5 L424.3 369.9 L428.6 370.3 L432.9 370.8 L437.1 369.8 L441.4 370.7 L445.7 370.1 L450.0 369.7 L454.3 369.6 L458.6 369.4 L462.9 369.2 L467.1 369.2 L471.4 370.0 L475.7 370.5 L480.0 369.1 L484.3 368.8 L488.6 370.3 L492.9 369.5 L497.1 369.3 L501.4 369.0 L505.7 369.5 L510.0 369.8 L514.2 369.3 L518.3 369.3 L522.5 368.7 L526.7 370.2 L530.8 368.8 L535.0 369.6 L539.2 370.2 L543.3 369.1 L547.5 370.1 L551.7 370.5 L555.8 370.1 L560.0 370.4 L564.0 369.4 L568.0 370.1 L572.0 369.8 L576.0 371.0 L580.0 370.3 L584.5 370.8 L589.0 371.8 L593.5 371.8 L598.0 372.3 L602.7 371.2 L607.3 371.1 L612.0 371.3 L616.0 370.3 L620.0 369.5 L624.0 369.1 L628.0 368.8 L632.0 369.2 L636.0 370.2 L640.0 370.2 L644.0 369.8 L648.0 369.7 L652.0 369.5 L656.0 369.2 L660.0 369.5 L664.0 370.4 L668.0 370.6 L672.0 369.9 L676.0 370.6 L680.0 370.6 L684.0 370.6 L688.0 370.6 L692.0 370.8 L696.0 370.2 L700.0 370.8 L704.0 370.1 L708.0 370.4 L712.0 370.8 L716.0 370.6 L720.0 370.0 L725.0 371.0 L730.0 370.6 L735.0 370.4" stroke="#808080" stroke-width="6.5" fill="none" filter="url(#b1)"/><path d="M72.0 378.8 L76.0 378.9 L80.0 378.9 L84.0 379.1 L88.0 378.7 L92.0 378.9 L96.0 377.4 L100.0 378.0 L104.0 378.7 L108.0 378.1 L112.0 378.4 L116.0 377.0 L120.0 377.5 L124.3 377.1 L128.6 377.5 L132.9 377.5 L137.1 376.5 L141.4 376.8 L145.7 376.9 L150.0 377.9 L154.2 377.5 L158.3 376.4 L162.5 377.3 L166.7 376.2 L170.8 376.8 L175.0 375.9 L179.2 375.6 L183.3 376.8 L187.5 375.6 L191.7 375.4 L195.8 376.5 L200.0 376.2 L204.0 375.1 L208.0 376.0 L212.0 375.1 L216.0 375.2 L220.0 374.3 L224.0 375.3 L228.0 374.7 L232.5 375.0 L237.0 374.8 L241.5 373.8 L246.0 373.8 L250.5 373.4 L255.0 373.2 L259.2 373.0 L263.3 373.2 L267.5 373.5 L271.7 372.4 L275.8 373.3 L280.0 372.6 L284.0 372.5 L288.0 373.1 L292.0 372.4 L296.0 372.0 L300.0 372.2 L304.0 372.5 L308.0 371.4 L312.0 372.8 L316.0 371.3 L320.0 372.4 L324.0 372.5 L328.0 371.1 L332.0 372.3 L336.0 371.6 L340.0 371.9 L344.3 371.0 L348.6 371.1 L352.9 371.3 L357.1 372.6 L361.4 371.4 L365.7 372.3 L370.0 372.6 L374.2 372.5 L378.3 371.4 L382.5 371.3 L386.7 371.5 L390.8 371.8 L395.0 370.6 L399.2 371.7 L403.3 371.8 L407.5 372.0 L411.7 370.7 L415.8 372.2 L420.0 370.9 L424.3 371.3 L428.6 371.7 L432.9 372.2 L437.1 371.2 L441.4 372.1 L445.7 371.5 L450.0 371.1 L454.3 371.0 L458.6 370.8 L462.9 370.6 L467.1 370.6 L471.4 371.4 L475.7 371.9 L480.0 370.5 L484.3 370.2 L488.6 371.7 L492.9 370.9 L497.1 370.7 L501.4 370.4 L505.7 370.9 L510.0 371.2 L514.2 370.7 L518.3 370.7 L522.5 370.1 L526.7 371.6 L530.8 370.2 L535.0 371.0 L539.2 371.6 L543.3 370.5 L547.5 371.5 L551.7 371.9 L555.8 371.5 L560.0 371.8 L564.0 370.8 L568.0 371.5 L572.0 371.2 L576.0 372.4 L580.0 371.7 L584.5 372.2 L589.0 373.2 L593.5 373.2 L598.0 373.7 L602.7 372.6 L607.3 372.5 L612.0 372.7 L616.0 371.7 L620.0 370.9 L624.0 370.5 L628.0 370.2 L632.0 370.6 L636.0 371.6 L640.0 371.6 L644.0 371.2 L648.0 371.1 L652.0 370.9 L656.0 370.6 L660.0 370.9 L664.0 371.8 L668.0 372.0 L672.0 371.3 L676.0 372.0 L680.0 372.0 L684.0 372.0 L688.0 372.0 L692.0 372.2 L696.0 371.6 L700.0 372.2 L704.0 371.5 L708.0 371.8 L712.0 372.2 L716.0 372.0 L720.0 371.4 L725.0 372.4 L730.0 372.0 L735.0 371.8" stroke="#909090" stroke-width="3.4" fill="none"/><path d="M72.0 377.6 L76.0 377.7 L80.0 377.7 L84.0 377.9 L88.0 377.5 L92.0 377.7 L96.0 376.2 L100.0 376.8 L104.0 377.5 L108.0 376.9 L112.0 377.2 L116.0 375.8 L120.0 376.3 L124.3 375.9 L128.6 376.3 L132.9 376.3 L137.1 375.3 L141.4 375.6 L145.7 375.7 L150.0 376.7 L154.2 376.3 L158.3 375.2 L162.5 376.1 L166.7 375.0 L170.8 375.6 L175.0 374.7 L179.2 374.4 L183.3 375.6 L187.5 374.4 L191.7 374.2 L195.8 375.3 L200.0 375.0 L204.0 373.9 L208.0 374.8 L212.0 373.9 L216.0 374.0 L220.0 373.1 L224.0 374.1 L228.0 373.5 L232.5 373.8 L237.0 373.6 L241.5 372.6 L246.0 372.6 L250.5 372.2 L255.0 372.0 L259.2 371.8 L263.3 372.0 L267.5 372.3 L271.7 371.2 L275.8 372.1 L280.0 371.4 L284.0 371.3 L288.0 371.9 L292.0 371.2 L296.0 370.8 L300.0 371.0 L304.0 371.3 L308.0 370.2 L312.0 371.6 L316.0 370.1 L320.0 371.2 L324.0 371.3 L328.0 369.9 L332.0 371.1 L336.0 370.4 L340.0 370.7 L344.3 369.8 L348.6 369.9 L352.9 370.1 L357.1 371.4 L361.4 370.2 L365.7 371.1 L370.0 371.4 L374.2 371.3 L378.3 370.2 L382.5 370.1 L386.7 370.3 L390.8 370.6 L395.0 369.4 L399.2 370.5 L403.3 370.6 L407.5 370.8 L411.7 369.5 L415.8 371.0 L420.0 369.7 L424.3 370.1 L428.6 370.5 L432.9 371.0 L437.1 370.0 L441.4 370.9 L445.7 370.3 L450.0 369.9 L454.3 369.8 L458.6 369.6 L462.9 369.4 L467.1 369.4 L471.4 370.2 L475.7 370.7 L480.0 369.3 L484.3 369.0 L488.6 370.5 L492.9 369.7 L497.1 369.5 L501.4 369.2 L505.7 369.7 L510.0 370.0 L514.2 369.5 L518.3 369.5 L522.5 368.9 L526.7 370.4 L530.8 369.0 L535.0 369.8 L539.2 370.4 L543.3 369.3 L547.5 370.3 L551.7 370.7 L555.8 370.3 L560.0 370.6 L564.0 369.6 L568.0 370.3 L572.0 370.0 L576.0 371.2 L580.0 370.5 L584.5 371.0 L589.0 372.0 L593.5 372.0 L598.0 372.5 L602.7 371.4 L607.3 371.3 L612.0 371.5 L616.0 370.5 L620.0 369.7 L624.0 369.3 L628.0 369.0 L632.0 369.4 L636.0 370.4 L640.0 370.4 L644.0 370.0 L648.0 369.9 L652.0 369.7 L656.0 369.4 L660.0 369.7 L664.0 370.6 L668.0 370.8 L672.0 370.1 L676.0 370.8 L680.0 370.8 L684.0 370.8 L688.0 370.8 L692.0 371.0 L696.0 370.4 L700.0 371.0 L704.0 370.3 L708.0 370.6 L712.0 371.0 L716.0 370.8 L720.0 370.2 L725.0 371.2 L730.0 370.8 L735.0 370.6" stroke="#b0b0b0" stroke-width="2.6" fill="none"/><path d="M72.0 375.3 L76.0 375.4 L80.0 375.4 L84.0 375.6 L88.0 375.2 L92.0 375.4 L96.0 373.9 L100.0 374.5 L104.0 375.2 L108.0 374.6 L112.0 374.9 L116.0 373.5 L120.0 374.0 L124.3 373.6 L128.6 374.0 L132.9 374.0 L137.1 373.0 L141.4 373.3 L145.7 373.4 L150.0 374.4 L154.2 374.0 L158.3 372.9 L162.5 373.8 L166.7 372.7 L170.8 373.3 L175.0 372.4 L179.2 372.1 L183.3 373.3 L187.5 372.1 L191.7 371.9 L195.8 373.0 L200.0 372.7 L204.0 371.6 L208.0 372.5 L212.0 371.6 L216.0 371.7 L220.0 370.8 L224.0 371.8 L228.0 371.2 L232.5 371.5 L237.0 371.3 L241.5 370.3 L246.0 370.3 L250.5 369.9 L255.0 369.7 L259.2 369.5 L263.3 369.7 L267.5 370.0 L271.7 368.9 L275.8 369.8 L280.0 369.1 L284.0 369.0 L288.0 369.6 L292.0 368.9 L296.0 368.5 L300.0 368.7 L304.0 369.0 L308.0 367.9 L312.0 369.3 L316.0 367.8 L320.0 368.9 L324.0 369.0 L328.0 367.6 L332.0 368.8 L336.0 368.1 L340.0 368.4 L344.3 367.5 L348.6 367.6 L352.9 367.8 L357.1 369.1 L361.4 367.9 L365.7 368.8 L370.0 369.1 L374.2 369.0 L378.3 367.9 L382.5 367.8 L386.7 368.0 L390.8 368.3 L395.0 367.1 L399.2 368.2 L403.3 368.3 L407.5 368.5 L411.7 367.2 L415.8 368.7 L420.0 367.4 L424.3 367.8 L428.6 368.2 L432.9 368.7 L437.1 367.7 L441.4 368.6 L445.7 368.0 L450.0 367.6 L454.3 367.5 L458.6 367.3 L462.9 367.1 L467.1 367.1 L471.4 367.9 L475.7 368.4 L480.0 367.0 L484.3 366.7 L488.6 368.2 L492.9 367.4 L497.1 367.2 L501.4 366.9 L505.7 367.4 L510.0 367.7 L514.2 367.2 L518.3 367.2 L522.5 366.6 L526.7 368.1 L530.8 366.7 L535.0 367.5 L539.2 368.1 L543.3 367.0 L547.5 368.0 L551.7 368.4 L555.8 368.0 L560.0 368.3 L564.0 367.3 L568.0 368.0 L572.0 367.7 L576.0 368.9 L580.0 368.2 L584.5 368.7 L589.0 369.7 L593.5 369.7 L598.0 370.2 L602.7 369.1 L607.3 369.0 L612.0 369.2 L616.0 368.2 L620.0 367.4 L624.0 367.0 L628.0 366.7 L632.0 367.1 L636.0 368.1 L640.0 368.1 L644.0 367.7 L648.0 367.6 L652.0 367.4 L656.0 367.1 L660.0 367.4 L664.0 368.3 L668.0 368.5 L672.0 367.8 L676.0 368.5 L680.0 368.5 L684.0 368.5 L688.0 368.5 L692.0 368.7 L696.0 368.1 L700.0 368.7 L704.0 368.0 L708.0 368.3 L712.0 368.7 L716.0 368.5 L720.0 367.9 L725.0 368.9 L730.0 368.5 L735.0 368.3" stroke="#dcdcdc" stroke-width="4.9" fill="none"/><path d="M72.0 375.4 L76.0 375.5 L80.0 375.5 L84.0 375.7 L88.0 375.3 L92.0 375.5 L96.0 374.0 L100.0 374.6 L104.0 375.3 L108.0 374.7 L112.0 375.0 L116.0 373.6 L120.0 374.1 L124.3 373.7 L128.6 374.1 L132.9 374.1 L137.1 373.1 L141.4 373.4 L145.7 373.5 L150.0 374.5 L154.2 374.1 L158.3 373.0 L162.5 373.9 L166.7 372.8 L170.8 373.4 L175.0 372.5 L179.2 372.2 L183.3 373.4 L187.5 372.2 L191.7 372.0 L195.8 373.1 L200.0 372.8 L204.0 371.7 L208.0 372.6 L212.0 371.7 L216.0 371.8 L220.0 370.9 L224.0 371.9 L228.0 371.3 L232.5 371.6 L237.0 371.4 L241.5 370.4 L246.0 370.4 L250.5 370.0 L255.0 369.8 L259.2 369.6 L263.3 369.8 L267.5 370.1 L271.7 369.0 L275.8 369.9 L280.0 369.2 L284.0 369.1 L288.0 369.7 L292.0 369.0 L296.0 368.6 L300.0 368.8 L304.0 369.1 L308.0 368.0 L312.0 369.4 L316.0 367.9 L320.0 369.0 L324.0 369.1 L328.0 367.7 L332.0 368.9 L336.0 368.2 L340.0 368.5 L344.3 367.6 L348.6 367.7 L352.9 367.9 L357.1 369.2 L361.4 368.0 L365.7 368.9 L370.0 369.2 L374.2 369.1 L378.3 368.0 L382.5 367.9 L386.7 368.1 L390.8 368.4 L395.0 367.2 L399.2 368.3 L403.3 368.4 L407.5 368.6 L411.7 367.3 L415.8 368.8 L420.0 367.5 L424.3 367.9 L428.6 368.3 L432.9 368.8 L437.1 367.8 L441.4 368.7 L445.7 368.1 L450.0 367.7 L454.3 367.6 L458.6 367.4 L462.9 367.2 L467.1 367.2 L471.4 368.0 L475.7 368.5 L480.0 367.1 L484.3 366.8 L488.6 368.3 L492.9 367.5 L497.1 367.3 L501.4 367.0 L505.7 367.5 L510.0 367.8 L514.2 367.3 L518.3 367.3 L522.5 366.7 L526.7 368.2 L530.8 366.8 L535.0 367.6 L539.2 368.2 L543.3 367.1 L547.5 368.1 L551.7 368.5 L555.8 368.1 L560.0 368.4 L564.0 367.4 L568.0 368.1 L572.0 367.8 L576.0 369.0 L580.0 368.3 L584.5 368.8 L589.0 369.8 L593.5 369.8 L598.0 370.3 L602.7 369.2 L607.3 369.1 L612.0 369.3 L616.0 368.3 L620.0 367.5 L624.0 367.1 L628.0 366.8 L632.0 367.2 L636.0 368.2 L640.0 368.2 L644.0 367.8 L648.0 367.7 L652.0 367.5 L656.0 367.2 L660.0 367.5 L664.0 368.4 L668.0 368.6 L672.0 367.9 L676.0 368.6 L680.0 368.6 L684.0 368.6 L688.0 368.6 L692.0 368.8 L696.0 368.2 L700.0 368.8 L704.0 368.1 L708.0 368.4 L712.0 368.8 L716.0 368.6 L720.0 368.0 L725.0 369.0 L730.0 368.6 L735.0 368.4" stroke="#eaeaea" stroke-width="2.4" fill="none"/><path d="M665.4 203.0 L666.4 230.0" stroke="#6d6d6d" stroke-width="4.6" fill="none" opacity="0.7" stroke-linecap="round" filter="url(#b2)"/><path d="M663.0 215.0 L665.0 245.0" stroke="#5d5d5d" stroke-width="5" fill="none" opacity="0.35" stroke-linecap="round" filter="url(#b2)"/><path d="M636.0 240.0 L640.0 258.0" stroke="#6f6f6f" stroke-width="7" fill="none" opacity="0.75" stroke-linecap="round" filter="url(#b2)"/><path d="M644.0 268.0 L652.0 284.0 L662.0 302.0 L670.0 320.0 L678.0 338.0" stroke="#747474" stroke-width="10" fill="none" opacity="0.85" stroke-linecap="round" filter="url(#b2)"/><path d="M648.0 272.0 L656.0 288.0" stroke="#797979" stroke-width="6" fill="none" opacity="0.6" stroke-linecap="round" filter="url(#b2)"/><path d="M668.0 308.0 L676.0 330.0" stroke="#747474" stroke-width="6" fill="none" opacity="0.5" stroke-linecap="round" filter="url(#b2)"/><path d="M695.0 198.0 L694.0 220.0" stroke="#616161" stroke-width="3" fill="none" opacity="0.5" stroke-linecap="round" filter="url(#b2)"/><path d="M718.0 196.0 L718.5 207.0" stroke="#797979" stroke-width="5" fill="none" opacity="0.85" stroke-linecap="round" filter="url(#b1)"/><path d="M727.0 224.0 L731.0 236.0" stroke="#666666" stroke-width="4" fill="none" opacity="0.5" stroke-linecap="round" filter="url(#b2)"/><path d="M729.5 240.0 L734.0 250.0" stroke="#868686" stroke-width="7" fill="none" opacity="0.9" stroke-linecap="round" filter="url(#b1)"/><path d="M722.0 215.0 L724.0 300.0" stroke="#4f4f4f" stroke-width="18" fill="none" opacity="0.45" stroke-linecap="round" filter="url(#b4)"/><path d="M712.0 268.0 L722.0 270.0" stroke="#6f6f6f" stroke-width="2" fill="none" opacity="0.7" stroke-linecap="round" filter="url(#b1)"/><path d="M705.0 293.0 L716.0 291.0" stroke="#6f6f6f" stroke-width="2" fill="none" opacity="0.6" stroke-linecap="round" filter="url(#b1)"/><path d="M653.4 198.5 L653.6 200.5" stroke="#747474" stroke-width="4.5" fill="none" opacity="0.8" stroke-linecap="round" filter="url(#b1)"/><path d="M636.0 243.0 L637.0 262.0" stroke="#6b6b6b" stroke-width="6" fill="none" opacity="0.6" stroke-linecap="round" filter="url(#b2)"/><path d="M571.0 232.0 L573.0 262.0" stroke="#535353" stroke-width="5" fill="none" opacity="0.4" stroke-linecap="round" filter="url(#b2)"/><path d="M590.0 300.0 L592.0 330.0" stroke="#535353" stroke-width="6" fill="none" opacity="0.35" stroke-linecap="round" filter="url(#b2)"/><ellipse cx="385" cy="352" rx="34" ry="12" fill="#6f6f6f" opacity="0.55" filter="url(#b4)"/><ellipse cx="431" cy="351" rx="26" ry="11" fill="#6f6f6f" opacity="0.55" filter="url(#b4)"/><ellipse cx="592" cy="349" rx="44" ry="14" fill="#747474" opacity="0.6" filter="url(#b4)"/><ellipse cx="523" cy="349" rx="16" ry="9" fill="#797979" opacity="0.6" filter="url(#b4)"/><ellipse cx="470" cy="350" rx="10" ry="12" fill="#6b6b6b" opacity="0.5" filter="url(#b4)"/><ellipse cx="708" cy="352" rx="14" ry="12" fill="#797979" opacity="0.6" filter="url(#b4)"/><ellipse cx="732" cy="347" rx="5" ry="8" fill="#808080" opacity="0.7" filter="url(#b4)"/><ellipse cx="342" cy="355" rx="10" ry="8" fill="#6f6f6f" opacity="0.6" filter="url(#b4)"/><ellipse cx="679" cy="350" rx="8" ry="3" fill="#8b8b8b" opacity="0.7" filter="url(#b4)"/><ellipse cx="138" cy="355" rx="11" ry="5" fill="#797979" opacity="0.7" filter="url(#b4)"/><ellipse cx="400" cy="330" rx="30" ry="6" fill="#5d5d5d" opacity="0.4" filter="url(#b4)"/><ellipse cx="500" cy="352" rx="40" ry="9" fill="#6b6b6b" opacity="0.5" filter="url(#b4)"/><ellipse cx="660" cy="350" rx="40" ry="10" fill="#6b6b6b" opacity="0.5" filter="url(#b4)"/><ellipse cx="720" cy="340" rx="20" ry="14" fill="#6b6b6b" opacity="0.45" filter="url(#b4)"/><ellipse cx="455" cy="340" rx="25" ry="8" fill="#616161" opacity="0.4" filter="url(#b4)"/><ellipse cx="250" cy="356" rx="50" ry="7" fill="#666666" opacity="0.4" filter="url(#b4)"/><ellipse cx="110" cy="362" rx="40" ry="6" fill="#666666" opacity="0.4" filter="url(#b4)"/><ellipse cx="640" cy="300" rx="30" ry="20" fill="#4f4f4f" opacity="0.35" filter="url(#b4)"/><ellipse cx="700" cy="260" rx="35" ry="40" fill="#4a4a4a" opacity="0.3" filter="url(#b4)"/><ellipse cx="300" cy="340" rx="40" ry="8" fill="#585858" opacity="0.35" filter="url(#b4)"/><ellipse cx="200" cy="350" rx="50" ry="8" fill="#585858" opacity="0.35" filter="url(#b4)"/><ellipse cx="620" cy="335" rx="30" ry="8" fill="#5d5d5d" opacity="0.4" filter="url(#b4)"/><ellipse cx="690" cy="330" rx="30" ry="10" fill="#616161" opacity="0.4" filter="url(#b4)"/><ellipse cx="540" cy="333" rx="20" ry="5" fill="#5d5d5d" opacity="0.4" filter="url(#b4)"/><ellipse cx="523" cy="349" rx="9" ry="5" fill="#8b8b8b" opacity="0.8" filter="url(#b1)"/><ellipse cx="470" cy="352" rx="5" ry="7" fill="#7d7d7d" opacity="0.8" filter="url(#b1)"/><ellipse cx="708" cy="353" rx="9" ry="8" fill="#8b8b8b" opacity="0.8" filter="url(#b1)"/><ellipse cx="733" cy="347" rx="3" ry="6" fill="#909090" opacity="0.8" filter="url(#b1)"/><ellipse cx="342" cy="356" rx="7" ry="6" fill="#828282" opacity="0.8" filter="url(#b1)"/><ellipse cx="332" cy="338" rx="5" ry="2.5" fill="#808080" opacity="0.8" filter="url(#b1)"/><ellipse cx="386" cy="330" rx="8" ry="2" fill="#808080" opacity="0.8" filter="url(#b1)"/><ellipse cx="355" cy="329" rx="5" ry="1.8" fill="#7b7b7b" opacity="0.8" filter="url(#b1)"/><ellipse cx="679" cy="350.5" rx="5" ry="1.6" fill="#999999" opacity="0.8" filter="url(#b1)"/><ellipse cx="640" cy="346" rx="6" ry="2" fill="#7d7d7d" opacity="0.8" filter="url(#b1)"/><ellipse cx="560" cy="343" rx="8" ry="2.5" fill="#7d7d7d" opacity="0.8" filter="url(#b1)"/><path d="M129.0 355.6 L130.7 352.5 L137.8 350.8 L145.4 352.7 L147.0 355.5 L144.1 358.7 L133.1 358.9Z" fill="#7b7b7b" opacity="0.85" filter="url(#b1)"/><path d="M362.1 358.0 L364.2 347.8 L371.0 343.9 L389.6 342.4 L401.6 347.8 L411.0 351.7 L410.9 356.7 L401.5 359.4 L383.7 363.7 L368.6 361.0Z" fill="#7b7b7b" opacity="0.85" filter="url(#b2)"/><path d="M408.1 355.7 L412.0 350.7 L418.3 347.4 L424.8 340.4 L438.0 338.5 L446.8 342.1 L451.9 349.3 L456.5 354.5 L454.7 359.0 L444.3 362.3 L424.4 362.4 L412.4 359.8Z" fill="#7b7b7b" opacity="0.85" filter="url(#b2)"/><path d="M553.5 351.7 L560.0 348.7 L569.0 348.6 L573.0 339.9 L580.7 337.0 L599.3 337.5 L611.5 341.6 L619.9 345.7 L628.5 349.9 L628.0 353.4 L617.8 356.6 L609.2 360.9 L599.4 362.6 L585.8 360.5 L574.3 354.9 L564.1 354.2 L555.0 354.0Z" fill="#7b7b7b" opacity="0.85" filter="url(#b2)"/><path d="M130.9 355.5 L132.4 353.0 L138.0 352.3 L143.6 353.2 L145.1 355.4 L142.5 357.9 L134.5 357.9Z" fill="#999999" opacity="0.9" filter="url(#b1)"/><path d="M366.0 357.3 L368.1 348.6 L374.3 345.6 L388.5 345.5 L397.9 348.9 L407.0 351.9 L407.0 356.2 L397.8 358.1 L384.6 360.6 L372.2 359.7Z" fill="#999999" opacity="0.9" filter="url(#b1)"/><path d="M412.0 355.2 L416.0 350.9 L422.1 348.5 L426.9 343.1 L436.7 341.5 L443.6 344.0 L448.0 349.8 L452.5 354.2 L450.9 358.0 L441.4 360.1 L426.8 359.8 L416.1 358.6Z" fill="#999999" opacity="0.9" filter="url(#b1)"/><path d="M557.5 351.6 L564.0 348.9 L573.0 348.9 L576.3 341.6 L582.9 339.7 L597.1 340.2 L607.8 342.9 L616.0 346.2 L624.5 350.0 L624.0 353.1 L613.9 355.9 L605.7 359.3 L597.1 360.0 L587.3 357.5 L578.1 354.0 L568.0 353.7 L559.0 353.7Z" fill="#999999" opacity="0.9" filter="url(#b1)"/><path d="M132.1 355.5 L133.6 353.4 L138.0 353.3 L142.4 353.6 L143.9 355.4 L141.5 357.3 L135.5 357.3Z" fill="#a7a7a7" opacity="0.85"/><path d="M367.7 357.0 L369.7 348.9 L375.7 346.4 L388.1 346.8 L396.3 349.4 L405.3 352.0 L405.3 356.0 L396.3 357.6 L384.9 359.2 L373.7 359.1Z" fill="#b2b2b2" opacity="0.85"/><path d="M413.7 355.0 L417.7 351.0 L423.7 348.9 L427.8 344.3 L436.1 342.8 L442.2 344.9 L446.3 350.0 L450.8 354.0 L449.3 357.6 L440.2 359.2 L427.8 358.7 L417.7 358.1Z" fill="#b2b2b2" opacity="0.85"/><path d="M559.2 351.5 L565.7 349.0 L574.7 349.0 L577.7 342.4 L583.8 340.8 L596.2 341.3 L606.3 343.4 L614.3 346.5 L622.8 350.0 L622.3 353.0 L612.3 355.6 L604.3 358.6 L596.2 358.9 L587.9 356.2 L579.7 353.6 L569.7 353.5 L560.7 353.5Z" fill="#b2b2b2" opacity="0.85"/><path d="M377.0 347.6h2M379.2 350.2h2.5M374.0 355.7h1.5M400.7 355.3h1.5M393.0 356.4h1.5M378.7 348.2h3M382.3 354.3h2.5M367.9 356.9h2M373.6 349.9h1.5M388.0 357.5h2M393.8 357.0h1.5M387.7 350.4h1.5M385.9 349.6h2.5M368.4 353.4h3M372.4 348.8h1.5M395.3 350.6h2M432.3 347.4h2M418.7 357.7h2M430.2 351.1h2.5M437.1 355.3h2M441.2 345.3h2M417.8 353.1h2.5M439.0 347.1h2M445.2 350.2h2.5M426.3 345.7h2M440.6 356.6h1.5M436.4 355.2h2.5M427.7 351.0h1.5M421.8 357.0h3M416.8 357.6h3M424.5 348.2h2.5M420.4 356.7h2M428.3 357.1h2M425.2 358.3h1.5M431.3 347.7h1.5M436.2 358.7h3M432.9 356.6h2M431.6 349.1h3M437.1 352.5h2.5M592.0 352.8h1.5M592.3 346.8h3M584.8 349.7h2M613.5 352.8h2M585.8 345.1h2M617.2 350.2h1.5M582.6 346.7h3M604.7 347.6h2M606.2 353.0h2.5M609.0 348.9h1.5M578.9 343.5h2M602.8 348.0h2.5M589.4 349.7h3M581.0 346.3h2.5M570.1 353.0h3M596.9 351.5h3M562.6 350.0h2M564.3 353.1h1.5M590.2 348.8h1.5M614.3 352.8h3M618.3 349.7h3M593.5 348.1h2M611.9 351.1h1.5M580.7 342.0h2.5M600.4 349.9h1.5M604.4 345.8h2M599.1 353.0h2.5M574.5 351.8h2M607.3 345.6h2.5M606.2 350.3h2.5M592.0 344.8h3M585.5 349.4h3M584.7 352.1h1.5M595.4 348.4h1.5M595.3 357.5h2M604.5 352.0h3" stroke="#cccccc" stroke-width="1.8" fill="none"/><path d="M136.4 355.5h3M142.5 355.0h2M137.1 355.6h2.5M132.9 355.3h1.5M138.7 356.6h2.5M131.7 354.3h1.5M139.0 355.8h2.5M137.4 353.1h2.5M133.0 354.0h1.5M381.8 357.1h2.5M381.3 358.5h2.5M374.8 357.9h1.5M384.4 358.8h2M381.7 347.4h2.5M390.3 356.2h3M379.3 358.6h1.5M376.1 347.8h1.5M369.2 356.5h3M373.6 353.5h2M383.6 348.9h2.5M382.6 349.2h2.5M377.0 358.6h1.5M396.7 350.3h2M381.6 357.2h3M376.6 356.2h2.5M388.6 349.5h2M389.2 351.1h2M383.8 358.5h2.5M384.9 353.7h1.5M372.7 357.9h2.5M389.3 351.8h2.5M393.1 349.7h3M397.5 354.0h1.5M377.9 348.7h3M375.5 353.5h1.5M398.5 354.2h1.5M377.4 358.0h1.5M374.5 346.7h2.5M377.0 352.1h1.5M380.6 353.7h3M371.9 351.0h2.5M391.3 355.1h2.5M388.6 348.3h3M390.5 352.5h1.5M394.0 350.5h1.5M387.2 355.7h2M400.3 355.7h2M392.4 357.8h3M399.2 351.7h3M388.2 354.3h2.5M381.1 353.8h3M399.6 355.6h2.5M381.4 355.7h2.5M388.5 352.0h2M389.2 352.5h2M375.5 355.2h3M385.4 354.2h2.5M392.1 349.0h1.5M373.3 357.8h2.5M391.4 352.0h2M391.6 349.0h3M382.9 356.6h2M381.2 353.8h1.5M385.4 357.0h2M398.4 355.4h1.5M373.3 352.1h3M377.2 349.2h2M385.3 350.4h1.5M383.7 347.4h2M368.5 355.4h3M388.1 350.4h3M372.0 352.2h2M375.8 348.3h1.5M368.7 354.4h2.5M383.5 354.4h2.5M391.2 356.6h2M402.5 355.1h2M374.4 352.4h2M384.5 355.4h2M379.8 355.2h1.5M386.3 354.2h3M395.0 351.4h1.5M383.8 354.3h2.5M400.7 351.2h1.5M384.2 354.6h2.5M374.6 355.5h2.5M397.3 354.5h2.5M393.6 349.2h2M403.2 353.2h1.5M396.3 350.5h3M379.9 347.5h2M383.3 353.4h2.5M395.4 352.6h2M368.1 356.6h2.5M369.4 356.5h2M373.4 350.7h2.5M372.5 353.0h3M385.2 358.4h3M370.2 349.3h3M386.5 350.1h3M394.0 354.5h1.5M386.3 357.0h2M381.1 357.1h3M386.4 353.7h2.5M374.4 353.2h2M385.6 354.1h2.5M386.1 351.5h1.5M396.6 353.5h3M385.2 355.1h2.5M369.4 353.2h2.5M382.3 358.5h2M384.5 348.1h2M383.0 356.7h2.5M400.3 352.5h3M378.7 348.9h2M389.9 358.1h2.5M371.8 356.2h2M375.4 355.1h2M378.9 350.9h3M374.3 353.1h2M383.2 351.2h2M382.3 353.1h1.5M372.9 349.1h3M390.4 354.5h2.5M386.6 357.1h1.5M389.6 357.2h2.5M375.6 355.8h2.5M378.7 350.4h2M372.0 349.5h3M393.9 349.7h2M370.6 356.9h2.5M382.6 356.4h3M371.7 351.5h2.5M374.4 355.0h3M371.3 352.8h1.5M395.1 352.8h1.5M392.4 348.9h2.5M386.0 353.6h3M374.5 357.0h1.5M402.2 352.3h3M436.2 353.9h1.5M424.7 349.2h3M445.3 350.5h2.5M439.7 347.9h1.5M446.3 355.1h1.5M442.2 348.0h2M434.5 352.6h1.5M429.1 357.3h2M427.7 357.6h3M447.2 353.0h1.5M444.1 350.8h2M427.7 358.3h3M416.4 356.8h1.5M427.6 346.5h2.5M417.9 355.8h2M448.6 355.7h3M441.3 355.6h3M445.6 357.0h3M422.0 349.7h2M446.1 356.0h3M417.8 354.9h2.5M435.6 351.3h2.5M435.4 351.4h2M445.5 354.1h3M416.0 355.0h2M432.8 351.1h2.5M420.0 353.9h2.5M441.5 350.0h2M431.0 358.1h1.5M427.8 351.9h2.5M418.1 353.7h3M437.7 354.9h3M429.3 356.8h1.5M439.0 350.6h2M441.2 356.7h2M443.8 354.5h2M435.9 358.0h2.5M440.4 358.3h3M440.6 351.9h2M430.1 353.2h2.5M429.3 349.1h3M416.7 352.9h2M438.7 344.6h3M428.8 355.3h3M425.5 356.2h2.5M438.2 350.7h2.5M446.6 353.0h2M439.5 352.8h1.5M424.6 355.6h3M432.3 347.2h2.5M429.1 351.9h1.5M432.7 347.8h2.5M421.5 352.8h2.5M431.7 352.2h2.5M420.2 357.9h3M447.2 352.1h3M430.4 349.7h3M439.6 346.8h2.5M433.8 351.7h3M419.2 354.9h2M418.3 357.9h2M426.3 355.1h2.5M434.8 356.0h2.5M429.6 349.5h2.5M441.6 357.9h1.5M446.1 352.8h1.5M421.9 357.9h3M415.0 355.5h2.5M439.3 355.6h2.5M445.7 357.6h2.5M433.6 349.5h2.5M423.3 357.2h2.5M429.9 357.5h2M438.2 356.2h3M432.0 349.7h2.5M423.8 352.9h2M428.8 349.0h1.5M424.7 355.6h3M445.2 357.0h1.5M421.9 356.5h3M432.9 353.5h2M447.3 357.1h2.5M432.9 352.0h2.5M419.0 353.4h1.5M428.4 345.0h2M417.7 357.1h2.5M434.0 350.3h2M423.8 354.7h3M429.1 350.2h3M432.4 345.3h1.5M438.3 346.7h2.5M424.2 350.3h1.5M418.2 355.4h2M441.3 357.1h2M424.5 356.7h3M436.2 354.2h2.5M433.4 351.5h2.5M421.6 358.2h3M448.6 353.4h2M424.2 356.1h2M441.4 349.6h2.5M419.2 356.8h3M417.4 354.1h3M422.8 354.5h3M423.0 355.9h3M432.1 344.9h3M431.8 358.6h2.5M437.4 350.4h2.5M432.6 349.8h2M433.8 345.6h2M419.5 354.7h3M414.1 355.6h2M418.5 357.4h2.5M435.7 357.7h2M415.3 355.4h2.5M423.6 356.2h2M440.2 351.5h2M434.7 355.3h2.5M437.4 351.8h3M422.4 354.5h2M439.3 347.2h1.5M435.0 347.2h1.5M435.2 352.7h1.5M442.4 351.1h3M439.4 356.7h1.5M419.5 353.2h2.5M434.2 354.6h3M435.7 343.9h3M428.5 354.1h2M442.9 354.8h2M441.5 355.2h1.5M431.2 353.4h2.5M422.1 350.9h2.5M429.6 348.1h2M430.0 354.2h3M438.7 358.3h2M417.7 355.1h2M434.9 345.2h2.5M593.7 343.7h3M579.7 343.5h2M584.2 341.6h1.5M580.6 350.9h3M593.6 344.8h3M597.4 355.6h3M576.8 345.4h1.5M609.2 351.1h2.5M592.5 352.9h1.5M593.5 342.1h3M606.8 345.7h3M589.7 346.5h3M609.1 354.6h2.5M617.5 349.5h3M611.4 348.2h2.5M615.1 352.0h1.5M590.4 345.9h2.5M621.0 352.1h3M586.8 346.5h3M562.7 352.6h3M595.9 345.7h3M577.7 344.6h3M580.4 343.8h2M582.0 344.2h3M595.6 351.2h1.5M578.8 349.4h3M617.6 349.8h2.5M607.7 356.7h3M604.5 352.7h3M597.3 347.1h1.5M586.2 353.6h2.5M605.0 354.2h1.5M586.0 349.3h2.5M611.2 349.9h3M582.2 350.6h3M591.8 349.0h2.5M574.6 352.0h1.5M570.4 349.3h3M593.3 341.9h3M580.1 350.2h2.5M580.5 344.7h1.5M586.3 354.4h2.5M589.8 342.0h2M576.7 348.4h2M601.5 349.2h2.5M589.3 342.6h1.5M599.4 350.4h3M619.6 350.9h2M609.9 353.4h2M600.0 344.7h1.5M569.3 351.3h1.5M597.7 346.4h1.5M613.3 354.6h2.5M575.2 347.6h1.5M597.1 345.9h1.5M564.5 350.1h2.5M563.4 352.5h2.5M572.7 349.5h2.5M572.4 352.3h2M581.6 346.9h2.5M595.3 352.7h2.5M575.4 352.7h2.5M559.3 351.8h2M595.9 356.3h2.5M582.9 345.9h2.5M599.9 349.0h3M595.7 353.3h2M569.2 350.0h2.5M588.7 352.5h2.5M592.6 342.9h1.5M599.8 355.0h1.5M595.3 349.8h1.5M610.8 350.1h1.5M602.3 354.9h3M615.6 352.7h3M619.6 349.4h1.5M614.2 348.7h2M584.5 350.9h1.5M594.0 342.2h2.5M573.5 352.7h2.5M590.6 346.5h1.5M580.7 345.4h2.5M595.7 349.3h2.5M620.9 351.4h1.5M609.5 349.9h2.5M567.6 351.0h2M569.4 351.9h1.5M582.2 346.2h1.5M597.5 348.2h2M592.7 354.5h3M607.4 347.9h2M577.4 344.8h3M592.3 352.6h2.5M593.8 343.4h2M564.6 352.1h2.5M575.3 351.6h1.5M608.4 347.8h1.5M599.4 346.9h2.5M592.0 343.9h2.5M610.1 352.9h3M591.3 350.3h2M595.9 342.9h2M601.8 347.3h2.5M602.2 355.9h2.5M571.9 351.4h2.5M599.3 347.6h1.5M564.2 351.1h1.5M589.4 348.0h2M579.9 353.7h1.5M597.4 353.1h3M571.8 350.7h1.5M610.4 349.5h2M579.6 352.1h2M601.7 343.5h2M615.0 353.9h2M603.4 353.4h2M583.5 353.2h2.5M599.6 343.0h1.5M575.8 348.2h2M571.1 353.4h1.5M589.6 348.7h2M608.8 350.1h1.5M588.8 350.7h3M612.4 354.7h2.5M610.4 352.5h2M601.6 349.0h1.5M595.6 349.2h1.5M564.2 349.7h2.5M598.3 347.2h2M584.4 341.8h1.5M584.6 350.4h2.5M582.9 343.1h2M570.2 352.0h1.5M601.3 349.9h2M580.7 343.8h1.5M605.0 347.1h1.5M581.7 346.7h3M609.3 351.8h2.5M600.6 346.1h1.5M593.8 345.6h2.5M610.3 350.6h3M605.8 353.4h2M595.6 352.3h1.5M577.8 348.6h2M607.6 352.5h3M592.7 349.5h1.5M601.7 347.1h1.5M572.1 352.3h3M593.1 351.2h3M580.8 343.5h2M618.3 352.8h1.5M616.4 350.6h1.5M586.0 353.0h2M563.9 353.3h1.5M597.1 357.4h3M592.6 356.4h1.5M608.5 351.8h2.5M594.5 356.9h1.5M578.4 344.0h2M577.3 346.3h2M596.6 356.0h3M606.8 352.9h2M583.4 345.1h3M580.6 344.9h3M581.8 353.8h1.5M591.3 347.2h3M599.5 357.5h1.5M584.6 344.6h2.5M594.7 351.1h2.5M605.1 344.6h2.5M561.3 350.9h2.5M567.2 352.9h1.5M584.9 352.9h2M593.9 357.7h2.5M585.3 343.8h1.5M589.5 345.0h1.5M578.6 343.5h2.5M573.5 353.4h2.5M581.6 353.9h2M604.2 353.0h3M595.2 345.8h2M591.4 355.4h1.5M586.4 355.2h2.5M617.4 353.0h3M598.7 342.9h3M596.2 347.2h1.5M588.1 353.0h2.5M586.2 351.3h2M592.7 346.0h2.5M619.1 351.8h2.5M580.0 343.9h1.5M611.9 350.9h1.5M601.8 345.4h2.5M605.3 343.9h1.5M567.6 351.3h2M597.1 348.6h2M595.5 345.5h3M601.2 352.0h3M614.6 352.6h3M588.0 350.9h2M602.7 347.0h2M598.8 352.2h3M608.9 352.5h2M601.7 352.7h2M583.8 349.8h2.5M592.4 341.9h1.5M595.2 348.1h2.5M598.4 342.8h3M616.9 352.4h1.5M601.9 348.9h1.5M577.3 352.8h2M565.9 349.4h2M599.9 349.3h2.5M576.6 347.9h2.5M603.1 352.5h2.5M605.7 352.8h3M586.0 348.2h3M583.4 354.3h2.5M573.0 351.9h2M585.7 349.3h1.5M592.1 351.3h2.5M577.6 349.2h1.5M581.4 348.7h3M583.6 347.0h3M597.3 344.3h1.5M587.8 351.9h3M589.9 354.9h2M584.3 342.5h3M594.0 345.3h2.5M594.4 348.1h2M582.6 354.2h1.5M598.7 346.9h2" stroke="#fafafa" stroke-width="1.7" fill="none"/><path d="M99.5 209.6 Q101.8 207.8 104.0 209.6" stroke="#666666" stroke-width="1.5" fill="none" stroke-linecap="round" opacity="0.60"/><ellipse cx="101.8" cy="209.0" rx="3.2" ry="2" fill="#585858" opacity="0.3" filter="url(#b1)"/><path d="M199.5 226.7 Q203.0 224.9 206.4 226.7" stroke="#6f6f6f" stroke-width="1.5" fill="none" stroke-linecap="round" opacity="0.64"/><ellipse cx="203.0" cy="226.1" rx="4.9" ry="2" fill="#585858" opacity="0.3" filter="url(#b1)"/><path d="M192.9 238.0 Q196.3 236.2 199.6 238.0" stroke="#747474" stroke-width="1.5" fill="none" stroke-linecap="round" opacity="0.67"/><ellipse cx="196.3" cy="237.4" rx="4.7" ry="2" fill="#585858" opacity="0.3" filter="url(#b1)"/><path d="M82.4 254.1 Q85.1 252.3 87.7 254.1" stroke="#747474" stroke-width="1.5" fill="none" stroke-linecap="round" opacity="0.72"/><ellipse cx="85.1" cy="253.5" rx="3.7" ry="2" fill="#585858" opacity="0.3" filter="url(#b1)"/><path d="M150.3 252.4 Q153.5 250.6 156.7 252.4" stroke="#6b6b6b" stroke-width="1.5" fill="none" stroke-linecap="round" opacity="0.71"/><ellipse cx="153.5" cy="251.8" rx="4.5" ry="2" fill="#585858" opacity="0.3" filter="url(#b1)"/><path d="M252.8 253.4 Q255.4 251.6 258.0 253.4" stroke="#6b6b6b" stroke-width="1.5" fill="none" stroke-linecap="round" opacity="0.71"/><ellipse cx="255.4" cy="252.8" rx="3.6" ry="2" fill="#585858" opacity="0.3" filter="url(#b1)"/><path d="M127.5 264.8 Q130.1 263.0 132.8 264.8" stroke="#747474" stroke-width="1.5" fill="none" stroke-linecap="round" opacity="0.75"/><ellipse cx="130.1" cy="264.2" rx="3.7" ry="2" fill="#585858" opacity="0.3" filter="url(#b1)"/><path d="M220.8 264.8 Q223.7 263.0 226.5 264.8" stroke="#6b6b6b" stroke-width="1.5" fill="none" stroke-linecap="round" opacity="0.75"/><ellipse cx="223.7" cy="264.2" rx="4.0" ry="2" fill="#585858" opacity="0.3" filter="url(#b1)"/><path d="M353.4 264.8 Q355.6 263.0 357.8 264.8" stroke="#6b6b6b" stroke-width="1.5" fill="none" stroke-linecap="round" opacity="0.75"/><ellipse cx="355.6" cy="264.2" rx="3.1" ry="2" fill="#585858" opacity="0.3" filter="url(#b1)"/><path d="M264.8 275.8 Q268.8 274.0 272.7 275.8" stroke="#7b7b7b" stroke-width="1.5" fill="none" stroke-linecap="round" opacity="0.77"/><ellipse cx="268.8" cy="275.2" rx="5.5" ry="2" fill="#585858" opacity="0.3" filter="url(#b1)"/><path d="M248.1 292.5 Q251.0 290.7 254.0 292.5" stroke="#747474" stroke-width="1.5" fill="none" stroke-linecap="round" opacity="0.82"/><ellipse cx="251.0" cy="291.9" rx="4.1" ry="2" fill="#585858" opacity="0.3" filter="url(#b1)"/><path d="M350.3 289.1 Q353.9 287.3 357.6 289.1" stroke="#6f6f6f" stroke-width="1.5" fill="none" stroke-linecap="round" opacity="0.81"/><ellipse cx="353.9" cy="288.5" rx="5.1" ry="2" fill="#585858" opacity="0.3" filter="url(#b1)"/><path d="M164.5 300.2 Q166.9 298.4 169.2 300.2" stroke="#828282" stroke-width="1.5" fill="none" stroke-linecap="round" opacity="0.84"/><ellipse cx="166.9" cy="299.6" rx="3.3" ry="2" fill="#585858" opacity="0.3" filter="url(#b1)"/><path d="M149.2 306.5 Q151.9 304.7 154.5 306.5" stroke="#828282" stroke-width="1.5" fill="none" stroke-linecap="round" opacity="0.86"/><ellipse cx="151.9" cy="305.9" rx="3.6" ry="2" fill="#585858" opacity="0.3" filter="url(#b1)"/><path d="M179.5 295.8 Q181.9 294.0 184.3 295.8" stroke="#666666" stroke-width="1.5" fill="none" stroke-linecap="round" opacity="0.83"/><ellipse cx="181.9" cy="295.2" rx="3.4" ry="2" fill="#585858" opacity="0.3" filter="url(#b1)"/><path d="M253.1 320.2 Q257.1 318.4 261.0 320.2" stroke="#828282" stroke-width="1.5" fill="none" stroke-linecap="round" opacity="0.89"/><ellipse cx="257.1" cy="319.6" rx="5.5" ry="2" fill="#585858" opacity="0.3" filter="url(#b1)"/><path d="M236.5 320.9 Q240.4 319.1 244.2 320.9" stroke="#828282" stroke-width="1.5" fill="none" stroke-linecap="round" opacity="0.89"/><ellipse cx="240.4" cy="320.3" rx="5.4" ry="2" fill="#585858" opacity="0.3" filter="url(#b1)"/><path d="M153.6 325.2 Q156.9 323.4 160.1 325.2" stroke="#7b7b7b" stroke-width="1.5" fill="none" stroke-linecap="round" opacity="0.91"/><ellipse cx="156.9" cy="324.6" rx="4.5" ry="2" fill="#585858" opacity="0.3" filter="url(#b1)"/><path d="M129.7 332.6 Q131.8 330.8 133.9 332.6" stroke="#828282" stroke-width="1.5" fill="none" stroke-linecap="round" opacity="0.93"/><ellipse cx="131.8" cy="332.0" rx="3.0" ry="2" fill="#585858" opacity="0.3" filter="url(#b1)"/><path d="M146.4 339.9 Q150.2 338.1 154.0 339.9" stroke="#6b6b6b" stroke-width="1.5" fill="none" stroke-linecap="round" opacity="0.95"/><ellipse cx="150.2" cy="339.3" rx="5.3" ry="2" fill="#585858" opacity="0.3" filter="url(#b1)"/><path d="M106.5 349.9 Q110.1 348.1 113.7 349.9" stroke="#747474" stroke-width="1.5" fill="none" stroke-linecap="round" opacity="0.95"/><ellipse cx="110.1" cy="349.3" rx="5.1" ry="2" fill="#585858" opacity="0.3" filter="url(#b1)"/><path d="M328.3 340.9 Q330.5 339.1 332.8 340.9" stroke="#6f6f6f" stroke-width="1.5" fill="none" stroke-linecap="round" opacity="0.95"/><ellipse cx="330.5" cy="340.3" rx="3.2" ry="2" fill="#585858" opacity="0.3" filter="url(#b1)"/><path d="M330.9 335.9 Q333.9 334.1 336.9 335.9" stroke="#6f6f6f" stroke-width="1.5" fill="none" stroke-linecap="round" opacity="0.93"/><ellipse cx="333.9" cy="335.3" rx="4.2" ry="2" fill="#585858" opacity="0.3" filter="url(#b1)"/><path d="M351.9 331.9 Q355.6 330.1 359.3 331.9" stroke="#747474" stroke-width="1.5" fill="none" stroke-linecap="round" opacity="0.92"/><ellipse cx="355.6" cy="331.3" rx="5.2" ry="2" fill="#585858" opacity="0.3" filter="url(#b1)"/><path d="M371.6 337.6 Q374.0 335.8 376.3 337.6" stroke="#6f6f6f" stroke-width="1.5" fill="none" stroke-linecap="round" opacity="0.94"/><ellipse cx="374.0" cy="337.0" rx="3.3" ry="2" fill="#585858" opacity="0.3" filter="url(#b1)"/><path d="M383.0 329.2 Q385.7 327.4 388.3 329.2" stroke="#747474" stroke-width="1.5" fill="none" stroke-linecap="round" opacity="0.92"/><ellipse cx="385.7" cy="328.6" rx="3.7" ry="2" fill="#585858" opacity="0.3" filter="url(#b1)"/><path d="M390.8 332.6 Q394.0 330.8 397.2 332.6" stroke="#7b7b7b" stroke-width="1.5" fill="none" stroke-linecap="round" opacity="0.93"/><ellipse cx="394.0" cy="332.0" rx="4.5" ry="2" fill="#585858" opacity="0.3" filter="url(#b1)"/><path d="M89.9 319.2 Q93.4 317.4 96.9 319.2" stroke="#7b7b7b" stroke-width="1.5" fill="none" stroke-linecap="round" opacity="0.89"/><ellipse cx="93.4" cy="318.6" rx="4.9" ry="2" fill="#585858" opacity="0.3" filter="url(#b1)"/><path d="M180.2 312.5 Q183.6 310.7 186.9 312.5" stroke="#666666" stroke-width="1.5" fill="none" stroke-linecap="round" opacity="0.87"/><ellipse cx="183.6" cy="311.9" rx="4.7" ry="2" fill="#585858" opacity="0.3" filter="url(#b1)"/><path d="M289.9 349.3 Q293.8 347.5 297.7 349.3" stroke="#747474" stroke-width="1.5" fill="none" stroke-linecap="round" opacity="0.95"/><ellipse cx="293.8" cy="348.7" rx="5.4" ry="2" fill="#585858" opacity="0.3" filter="url(#b1)"/><path d="M310.9 344.3 Q313.8 342.5 316.8 344.3" stroke="#6b6b6b" stroke-width="1.5" fill="none" stroke-linecap="round" opacity="0.95"/><ellipse cx="313.8" cy="343.7" rx="4.1" ry="2" fill="#585858" opacity="0.3" filter="url(#b1)"/><path d="M264.1 342.6 Q267.1 340.8 270.1 342.6" stroke="#747474" stroke-width="1.5" fill="none" stroke-linecap="round" opacity="0.95"/><ellipse cx="267.1" cy="342.0" rx="4.2" ry="2" fill="#585858" opacity="0.3" filter="url(#b1)"/><path d="M211.3 352.6 Q213.6 350.8 216.0 352.6" stroke="#828282" stroke-width="1.5" fill="none" stroke-linecap="round" opacity="0.95"/><ellipse cx="213.6" cy="352.0" rx="3.3" ry="2" fill="#585858" opacity="0.3" filter="url(#b1)"/><path d="M172.2 330.9 Q175.2 329.1 178.2 330.9" stroke="#666666" stroke-width="1.5" fill="none" stroke-linecap="round" opacity="0.92"/><ellipse cx="175.2" cy="330.3" rx="4.2" ry="2" fill="#585858" opacity="0.3" filter="url(#b1)"/><path d="M230.7 282.5 Q233.7 280.7 236.7 282.5" stroke="#747474" stroke-width="1.5" fill="none" stroke-linecap="round" opacity="0.79"/><ellipse cx="233.7" cy="281.9" rx="4.2" ry="2" fill="#585858" opacity="0.3" filter="url(#b1)"/><path d="M239.3 254.1 Q242.0 252.3 244.8 254.1" stroke="#747474" stroke-width="1.5" fill="none" stroke-linecap="round" opacity="0.72"/><ellipse cx="242.0" cy="253.5" rx="3.8" ry="2" fill="#585858" opacity="0.3" filter="url(#b1)"/><path d="M412.6 256.4 Q415.0 254.6 417.5 256.4" stroke="#6f6f6f" stroke-width="1.5" fill="none" stroke-linecap="round" opacity="0.72"/><ellipse cx="415.0" cy="255.8" rx="3.4" ry="2" fill="#585858" opacity="0.3" filter="url(#b1)"/><path d="M478.6 267.4 Q481.8 265.6 485.0 267.4" stroke="#747474" stroke-width="1.5" fill="none" stroke-linecap="round" opacity="0.75"/><ellipse cx="481.8" cy="266.8" rx="4.5" ry="2" fill="#585858" opacity="0.3" filter="url(#b1)"/><path d="M416.2 288.5 Q418.4 286.7 420.5 288.5" stroke="#6f6f6f" stroke-width="1.5" fill="none" stroke-linecap="round" opacity="0.81"/><ellipse cx="418.4" cy="287.9" rx="3.1" ry="2" fill="#585858" opacity="0.3" filter="url(#b1)"/><path d="M428.5 297.5 Q431.7 295.7 434.9 297.5" stroke="#6f6f6f" stroke-width="1.5" fill="none" stroke-linecap="round" opacity="0.83"/><ellipse cx="431.7" cy="296.9" rx="4.5" ry="2" fill="#585858" opacity="0.3" filter="url(#b1)"/><path d="M442.8 311.9 Q446.8 310.1 450.7 311.9" stroke="#6f6f6f" stroke-width="1.5" fill="none" stroke-linecap="round" opacity="0.87"/><ellipse cx="446.8" cy="311.3" rx="5.5" ry="2" fill="#585858" opacity="0.3" filter="url(#b1)"/><path d="M513.3 294.2 Q516.9 292.4 520.5 294.2" stroke="#828282" stroke-width="1.5" fill="none" stroke-linecap="round" opacity="0.82"/><ellipse cx="516.9" cy="293.6" rx="5.0" ry="2" fill="#585858" opacity="0.3" filter="url(#b1)"/><path d="M547.5 257.4 Q550.3 255.6 553.1 257.4" stroke="#666666" stroke-width="1.5" fill="none" stroke-linecap="round" opacity="0.73"/><ellipse cx="550.3" cy="256.8" rx="3.9" ry="2" fill="#585858" opacity="0.3" filter="url(#b1)"/><path d="M556.4 307.5 Q560.3 305.7 564.3 307.5" stroke="#828282" stroke-width="1.5" fill="none" stroke-linecap="round" opacity="0.86"/><ellipse cx="560.3" cy="306.9" rx="5.5" ry="2" fill="#585858" opacity="0.3" filter="url(#b1)"/><path d="M571.8 292.5 Q575.4 290.7 578.9 292.5" stroke="#6b6b6b" stroke-width="1.5" fill="none" stroke-linecap="round" opacity="0.82"/><ellipse cx="575.4" cy="291.9" rx="5.0" ry="2" fill="#585858" opacity="0.3" filter="url(#b1)"/><path d="M585.4 285.8 Q588.7 284.0 592.0 285.8" stroke="#7b7b7b" stroke-width="1.5" fill="none" stroke-linecap="round" opacity="0.80"/><ellipse cx="588.7" cy="285.2" rx="4.6" ry="2" fill="#585858" opacity="0.3" filter="url(#b1)"/><path d="M609.2 250.7 Q612.1 248.9 615.0 250.7" stroke="#6f6f6f" stroke-width="1.5" fill="none" stroke-linecap="round" opacity="0.71"/><ellipse cx="612.1" cy="250.1" rx="4.1" ry="2" fill="#585858" opacity="0.3" filter="url(#b1)"/><path d="M611.7 265.1 Q615.4 263.3 619.1 265.1" stroke="#666666" stroke-width="1.5" fill="none" stroke-linecap="round" opacity="0.75"/><ellipse cx="615.4" cy="264.5" rx="5.2" ry="2" fill="#585858" opacity="0.3" filter="url(#b1)"/><path d="M615.4 274.1 Q618.8 272.3 622.1 274.1" stroke="#7b7b7b" stroke-width="1.5" fill="none" stroke-linecap="round" opacity="0.77"/><ellipse cx="618.8" cy="273.5" rx="4.7" ry="2" fill="#585858" opacity="0.3" filter="url(#b1)"/><path d="M607.6 321.9 Q610.4 320.1 613.2 321.9" stroke="#666666" stroke-width="1.5" fill="none" stroke-linecap="round" opacity="0.90"/><ellipse cx="610.4" cy="321.3" rx="3.9" ry="2" fill="#585858" opacity="0.3" filter="url(#b1)"/><path d="M651.8 250.7 Q653.8 248.9 655.9 250.7" stroke="#828282" stroke-width="1.5" fill="none" stroke-linecap="round" opacity="0.71"/><ellipse cx="653.8" cy="250.1" rx="2.9" ry="2" fill="#585858" opacity="0.3" filter="url(#b1)"/><path d="M671.3 254.1 Q673.9 252.3 676.5 254.1" stroke="#6b6b6b" stroke-width="1.5" fill="none" stroke-linecap="round" opacity="0.72"/><ellipse cx="673.9" cy="253.5" rx="3.7" ry="2" fill="#585858" opacity="0.3" filter="url(#b1)"/><path d="M716.7 291.8 Q720.6 290.0 724.6 291.8" stroke="#747474" stroke-width="1.5" fill="none" stroke-linecap="round" opacity="0.82"/><ellipse cx="720.6" cy="291.2" rx="5.5" ry="2" fill="#585858" opacity="0.3" filter="url(#b1)"/><path d="M696.8 317.5 Q700.6 315.7 704.4 317.5" stroke="#7b7b7b" stroke-width="1.5" fill="none" stroke-linecap="round" opacity="0.89"/><ellipse cx="700.6" cy="316.9" rx="5.4" ry="2" fill="#585858" opacity="0.3" filter="url(#b1)"/><path d="M687.4 312.5 Q690.6 310.7 693.8 312.5" stroke="#666666" stroke-width="1.5" fill="none" stroke-linecap="round" opacity="0.87"/><ellipse cx="690.6" cy="311.9" rx="4.5" ry="2" fill="#585858" opacity="0.3" filter="url(#b1)"/><path d="M631.6 319.2 Q633.8 317.4 636.0 319.2" stroke="#747474" stroke-width="1.5" fill="none" stroke-linecap="round" opacity="0.89"/><ellipse cx="633.8" cy="318.6" rx="3.1" ry="2" fill="#585858" opacity="0.3" filter="url(#b1)"/><path d="M646.5 337.6 Q650.5 335.8 654.5 337.6" stroke="#6f6f6f" stroke-width="1.5" fill="none" stroke-linecap="round" opacity="0.94"/><ellipse cx="650.5" cy="337.0" rx="5.5" ry="2" fill="#585858" opacity="0.3" filter="url(#b1)"/><path d="M663.4 339.2 Q667.2 337.4 671.0 339.2" stroke="#6b6b6b" stroke-width="1.5" fill="none" stroke-linecap="round" opacity="0.94"/><ellipse cx="667.2" cy="338.6" rx="5.3" ry="2" fill="#585858" opacity="0.3" filter="url(#b1)"/><path d="M497.1 322.5 Q500.2 320.7 503.3 322.5" stroke="#828282" stroke-width="1.5" fill="none" stroke-linecap="round" opacity="0.90"/><ellipse cx="500.2" cy="321.9" rx="4.3" ry="2" fill="#585858" opacity="0.3" filter="url(#b1)"/><path d="M527.8 302.5 Q530.3 300.7 532.7 302.5" stroke="#6b6b6b" stroke-width="1.5" fill="none" stroke-linecap="round" opacity="0.85"/><ellipse cx="530.3" cy="301.9" rx="3.4" ry="2" fill="#585858" opacity="0.3" filter="url(#b1)"/><path d="M469.1 295.8 Q471.8 294.0 474.5 295.8" stroke="#828282" stroke-width="1.5" fill="none" stroke-linecap="round" opacity="0.83"/><ellipse cx="471.8" cy="295.2" rx="3.8" ry="2" fill="#585858" opacity="0.3" filter="url(#b1)"/><path d="M456.2 285.8 Q460.1 284.0 464.0 285.8" stroke="#7b7b7b" stroke-width="1.5" fill="none" stroke-linecap="round" opacity="0.80"/><ellipse cx="460.1" cy="285.2" rx="5.4" ry="2" fill="#585858" opacity="0.3" filter="url(#b1)"/><path d="M543.1 342.6 Q547.0 340.8 550.8 342.6" stroke="#7b7b7b" stroke-width="1.5" fill="none" stroke-linecap="round" opacity="0.95"/><ellipse cx="547.0" cy="342.0" rx="5.4" ry="2" fill="#585858" opacity="0.3" filter="url(#b1)"/><path d="M627.8 340.9 Q630.5 339.1 633.1 340.9" stroke="#828282" stroke-width="1.5" fill="none" stroke-linecap="round" opacity="0.95"/><ellipse cx="630.5" cy="340.3" rx="3.7" ry="2" fill="#585858" opacity="0.3" filter="url(#b1)"/><path d="M404.6 332.6 Q406.7 330.8 408.7 332.6" stroke="#666666" stroke-width="1.5" fill="none" stroke-linecap="round" opacity="0.93"/><ellipse cx="406.7" cy="332.0" rx="2.9" ry="2" fill="#585858" opacity="0.3" filter="url(#b1)"/><path d="M483.7 314.2 Q486.8 312.4 490.0 314.2" stroke="#7b7b7b" stroke-width="1.5" fill="none" stroke-linecap="round" opacity="0.88"/><ellipse cx="486.8" cy="313.6" rx="4.4" ry="2" fill="#585858" opacity="0.3" filter="url(#b1)"/><path d="M594.1 307.5 Q597.1 305.7 600.1 307.5" stroke="#6b6b6b" stroke-width="1.5" fill="none" stroke-linecap="round" opacity="0.86"/><ellipse cx="597.1" cy="306.9" rx="4.2" ry="2" fill="#585858" opacity="0.3" filter="url(#b1)"/><path d="M601.5 295.8 Q603.7 294.0 606.0 295.8" stroke="#6b6b6b" stroke-width="1.5" fill="none" stroke-linecap="round" opacity="0.83"/><ellipse cx="603.7" cy="295.2" rx="3.1" ry="2" fill="#585858" opacity="0.3" filter="url(#b1)"/><path d="M678.4 329.2 Q680.6 327.4 682.7 329.2" stroke="#666666" stroke-width="1.5" fill="none" stroke-linecap="round" opacity="0.92"/><ellipse cx="680.6" cy="328.6" rx="3.0" ry="2" fill="#585858" opacity="0.3" filter="url(#b1)"/><ellipse cx="221" cy="320.5" rx="6" ry="4.5" fill="#6b6b6b" opacity="0.6" filter="url(#b1)"/><ellipse cx="312" cy="290" rx="7" ry="9" fill="#6b6b6b" opacity="0.6" filter="url(#b1)"/><ellipse cx="153" cy="304" rx="5" ry="3" fill="#6b6b6b" opacity="0.6" filter="url(#b1)"/><ellipse cx="357" cy="289" rx="5" ry="3" fill="#6b6b6b" opacity="0.6" filter="url(#b1)"/><rect x="468.3" y="251.7" width="6.5" height="1.6" rx="0.8" fill="#616161" opacity="0.45"/><rect x="572.3" y="310.8" width="6.1" height="1.6" rx="0.8" fill="#585858" opacity="0.45"/><rect x="190.8" y="306.3" width="5.1" height="1.6" rx="0.8" fill="#5d5d5d" opacity="0.45"/><rect x="271.6" y="251.3" width="5.8" height="1.6" rx="0.8" fill="#585858" opacity="0.45"/><rect x="573.0" y="304.6" width="8.7" height="1.6" rx="0.8" fill="#585858" opacity="0.45"/><rect x="178.8" y="285.9" width="7.1" height="1.6" rx="0.8" fill="#666666" opacity="0.45"/><rect x="135.7" y="223.5" width="5.0" height="1.6" rx="0.8" fill="#616161" opacity="0.45"/><rect x="149.8" y="222.7" width="7.4" height="1.6" rx="0.8" fill="#616161" opacity="0.45"/><rect x="143.0" y="254.2" width="7.0" height="1.6" rx="0.8" fill="#666666" opacity="0.45"/><rect x="136.2" y="343.2" width="5.6" height="1.6" rx="0.8" fill="#5d5d5d" opacity="0.45"/><rect x="346.4" y="284.3" width="6.8" height="1.6" rx="0.8" fill="#616161" opacity="0.45"/><rect x="466.8" y="291.9" width="6.9" height="1.6" rx="0.8" fill="#5d5d5d" opacity="0.45"/><rect x="623.8" y="261.5" width="9.0" height="1.6" rx="0.8" fill="#666666" opacity="0.45"/><rect x="690.8" y="233.8" width="5.0" height="1.6" rx="0.8" fill="#5d5d5d" opacity="0.45"/><rect x="673.6" y="214.7" width="9.1" height="1.6" rx="0.8" fill="#616161" opacity="0.45"/><rect x="407.2" y="354.1" width="9.8" height="1.6" rx="0.8" fill="#5d5d5d" opacity="0.45"/><rect x="176.2" y="285.2" width="9.6" height="1.6" rx="0.8" fill="#585858" opacity="0.45"/><rect x="663.0" y="308.3" width="6.1" height="1.6" rx="0.8" fill="#585858" opacity="0.45"/><rect x="283.1" y="259.7" width="4.8" height="1.6" rx="0.8" fill="#666666" opacity="0.45"/><rect x="366.8" y="324.1" width="8.9" height="1.6" rx="0.8" fill="#585858" opacity="0.45"/><rect x="134.5" y="336.3" width="6.9" height="1.6" rx="0.8" fill="#585858" opacity="0.45"/><rect x="384.9" y="328.6" width="8.9" height="1.6" rx="0.8" fill="#616161" opacity="0.45"/><rect x="469.9" y="355.4" width="5.0" height="1.6" rx="0.8" fill="#616161" opacity="0.45"/><rect x="206.8" y="330.4" width="5.8" height="1.6" rx="0.8" fill="#666666" opacity="0.45"/><rect x="124.6" y="295.1" width="4.5" height="1.6" rx="0.8" fill="#666666" opacity="0.45"/><rect x="643.6" y="282.6" width="5.7" height="1.6" rx="0.8" fill="#616161" opacity="0.45"/><rect x="604.9" y="264.6" width="9.1" height="1.6" rx="0.8" fill="#666666" opacity="0.45"/><rect x="298.7" y="236.8" width="4.3" height="1.6" rx="0.8" fill="#666666" opacity="0.45"/><rect x="135.9" y="300.9" width="8.5" height="1.6" rx="0.8" fill="#5d5d5d" opacity="0.45"/><rect x="87.8" y="342.4" width="6.7" height="1.6" rx="0.8" fill="#5d5d5d" opacity="0.45"/><rect x="440.6" y="279.9" width="8.5" height="1.6" rx="0.8" fill="#666666" opacity="0.45"/><rect x="551.9" y="309.2" width="7.2" height="1.6" rx="0.8" fill="#585858" opacity="0.45"/><rect x="622.3" y="333.9" width="7.4" height="1.6" rx="0.8" fill="#585858" opacity="0.45"/><rect x="468.7" y="221.5" width="7.5" height="1.6" rx="0.8" fill="#616161" opacity="0.45"/><rect x="169.8" y="322.1" width="8.4" height="1.6" rx="0.8" fill="#616161" opacity="0.45"/><rect x="613.5" y="269.9" width="9.4" height="1.6" rx="0.8" fill="#666666" opacity="0.45"/><rect x="652.4" y="325.9" width="4.5" height="1.6" rx="0.8" fill="#666666" opacity="0.45"/><rect x="254.6" y="308.9" width="6.0" height="1.6" rx="0.8" fill="#666666" opacity="0.45"/><rect x="413.4" y="285.0" width="5.9" height="1.6" rx="0.8" fill="#585858" opacity="0.45"/><rect x="687.0" y="347.0" width="5.4" height="1.6" rx="0.8" fill="#5d5d5d" opacity="0.45"/><rect x="205.1" y="347.9" width="8.2" height="1.6" rx="0.8" fill="#616161" opacity="0.45"/><rect x="280.2" y="203.1" width="5.3" height="1.6" rx="0.8" fill="#585858" opacity="0.45"/><rect x="507.5" y="216.2" width="4.5" height="1.6" rx="0.8" fill="#616161" opacity="0.45"/><rect x="435.1" y="272.0" width="9.4" height="1.6" rx="0.8" fill="#666666" opacity="0.45"/><rect x="576.4" y="354.8" width="8.2" height="1.6" rx="0.8" fill="#5d5d5d" opacity="0.45"/><rect x="171.4" y="357.3" width="5.4" height="1.6" rx="0.8" fill="#585858" opacity="0.45"/><rect x="699.2" y="349.9" width="9.1" height="1.6" rx="0.8" fill="#616161" opacity="0.45"/><rect x="624.1" y="335.7" width="4.4" height="1.6" rx="0.8" fill="#666666" opacity="0.45"/><rect x="341.2" y="352.8" width="6.7" height="1.6" rx="0.8" fill="#585858" opacity="0.45"/><rect x="177.7" y="359.9" width="9.0" height="1.6" rx="0.8" fill="#5d5d5d" opacity="0.45"/><rect x="674.9" y="309.6" width="9.2" height="1.6" rx="0.8" fill="#5d5d5d" opacity="0.45"/><rect x="555.8" y="299.4" width="6.0" height="1.6" rx="0.8" fill="#585858" opacity="0.45"/><rect x="304.2" y="360.2" width="7.3" height="1.6" rx="0.8" fill="#585858" opacity="0.45"/><rect x="494.5" y="339.8" width="6.2" height="1.6" rx="0.8" fill="#585858" opacity="0.45"/><rect x="393.5" y="232.1" width="7.6" height="1.6" rx="0.8" fill="#5d5d5d" opacity="0.45"/><rect x="378.7" y="345.3" width="4.1" height="1.6" rx="0.8" fill="#616161" opacity="0.45"/><rect x="453.3" y="320.6" width="4.6" height="1.6" rx="0.8" fill="#666666" opacity="0.45"/><rect x="524.2" y="293.4" width="5.9" height="1.6" rx="0.8" fill="#616161" opacity="0.45"/><rect x="348.7" y="311.5" width="9.1" height="1.6" rx="0.8" fill="#616161" opacity="0.45"/><rect x="533.4" y="258.0" width="9.4" height="1.6" rx="0.8" fill="#5d5d5d" opacity="0.45"/><rect x="644.3" y="320.0" width="4.8" height="1.6" rx="0.8" fill="#585858" opacity="0.45"/><rect x="626.8" y="360.3" width="4.9" height="1.6" rx="0.8" fill="#585858" opacity="0.45"/><rect x="485.2" y="298.0" width="9.8" height="1.6" rx="0.8" fill="#616161" opacity="0.45"/><rect x="557.8" y="203.7" width="5.0" height="1.6" rx="0.8" fill="#666666" opacity="0.45"/><rect x="669.8" y="360.5" width="9.5" height="1.6" rx="0.8" fill="#616161" opacity="0.45"/><rect x="607.4" y="278.1" width="8.1" height="1.6" rx="0.8" fill="#5d5d5d" opacity="0.45"/><rect x="546.2" y="285.4" width="8.8" height="1.6" rx="0.8" fill="#585858" opacity="0.45"/><rect x="630.2" y="324.7" width="9.1" height="1.6" rx="0.8" fill="#666666" opacity="0.45"/><rect x="93.3" y="313.4" width="7.2" height="1.6" rx="0.8" fill="#666666" opacity="0.45"/><rect x="304.6" y="324.9" width="5.1" height="1.6" rx="0.8" fill="#585858" opacity="0.45"/><rect x="585.2" y="279.0" width="9.4" height="1.6" rx="0.8" fill="#616161" opacity="0.45"/><rect x="483.7" y="354.8" width="5.4" height="1.6" rx="0.8" fill="#5d5d5d" opacity="0.45"/><rect x="86.9" y="337.3" width="7.5" height="1.6" rx="0.8" fill="#666666" opacity="0.45"/><rect x="316.8" y="354.1" width="9.0" height="1.6" rx="0.8" fill="#666666" opacity="0.45"/><rect x="552.8" y="239.6" width="9.8" height="1.6" rx="0.8" fill="#585858" opacity="0.45"/><rect x="681.7" y="287.7" width="6.2" height="1.6" rx="0.8" fill="#5d5d5d" opacity="0.45"/><rect x="119.0" y="247.8" width="9.3" height="1.6" rx="0.8" fill="#616161" opacity="0.45"/><rect x="645.3" y="340.4" width="9.7" height="1.6" rx="0.8" fill="#5d5d5d" opacity="0.45"/><rect x="479.8" y="306.6" width="7.2" height="1.6" rx="0.8" fill="#585858" opacity="0.45"/><rect x="157.0" y="337.7" width="9.9" height="1.6" rx="0.8" fill="#616161" opacity="0.45"/><rect x="348.7" y="208.1" width="9.6" height="1.6" rx="0.8" fill="#666666" opacity="0.45"/><rect x="212.1" y="200.7" width="4.5" height="1.6" rx="0.8" fill="#666666" opacity="0.45"/><rect x="348.5" y="355.0" width="5.7" height="1.6" rx="0.8" fill="#585858" opacity="0.45"/><rect x="169.5" y="279.6" width="9.2" height="1.6" rx="0.8" fill="#666666" opacity="0.45"/><rect x="554.4" y="334.7" width="5.2" height="1.6" rx="0.8" fill="#666666" opacity="0.45"/><rect x="118.0" y="274.8" width="6.5" height="1.6" rx="0.8" fill="#5d5d5d" opacity="0.45"/><rect x="560.8" y="338.3" width="6.6" height="1.6" rx="0.8" fill="#585858" opacity="0.45"/><rect x="146.3" y="217.1" width="4.4" height="1.6" rx="0.8" fill="#666666" opacity="0.45"/><rect x="438.6" y="225.9" width="9.0" height="1.6" rx="0.8" fill="#585858" opacity="0.45"/><rect x="89.8" y="256.2" width="8.5" height="1.6" rx="0.8" fill="#5d5d5d" opacity="0.45"/><rect x="463.4" y="242.0" width="7.4" height="1.6" rx="0.8" fill="#666666" opacity="0.45"/><rect x="630.1" y="283.0" width="5.3" height="1.6" rx="0.8" fill="#666666" opacity="0.45"/><rect x="265.2" y="323.0" width="9.2" height="1.6" rx="0.8" fill="#5d5d5d" opacity="0.45"/><rect x="279.0" y="218.4" width="7.7" height="1.6" rx="0.8" fill="#5d5d5d" opacity="0.45"/><rect x="663.5" y="275.7" width="9.3" height="1.6" rx="0.8" fill="#585858" opacity="0.45"/><rect x="471.6" y="351.5" width="7.5" height="1.6" rx="0.8" fill="#616161" opacity="0.45"/><rect x="140.8" y="297.9" width="9.9" height="1.6" rx="0.8" fill="#666666" opacity="0.45"/><rect x="642.7" y="316.7" width="4.2" height="1.6" rx="0.8" fill="#616161" opacity="0.45"/><rect x="268.9" y="344.3" width="4.2" height="1.6" rx="0.8" fill="#5d5d5d" opacity="0.45"/><rect x="441.4" y="289.5" width="4.7" height="1.6" rx="0.8" fill="#666666" opacity="0.45"/><rect x="384.6" y="355.0" width="8.2" height="1.6" rx="0.8" fill="#616161" opacity="0.45"/><rect x="192.7" y="316.1" width="8.1" height="1.6" rx="0.8" fill="#666666" opacity="0.45"/><rect x="419.9" y="285.2" width="4.6" height="1.6" rx="0.8" fill="#616161" opacity="0.45"/><rect x="264.5" y="260.4" width="8.4" height="1.6" rx="0.8" fill="#5d5d5d" opacity="0.45"/><rect x="415.8" y="254.9" width="6.6" height="1.6" rx="0.8" fill="#585858" opacity="0.45"/><rect x="479.6" y="326.8" width="8.5" height="1.6" rx="0.8" fill="#616161" opacity="0.45"/><rect x="513.3" y="290.7" width="8.0" height="1.6" rx="0.8" fill="#585858" opacity="0.45"/><rect x="356.1" y="357.1" width="5.0" height="1.6" rx="0.8" fill="#616161" opacity="0.45"/><rect x="270.9" y="204.4" width="8.9" height="1.6" rx="0.8" fill="#5d5d5d" opacity="0.45"/><rect x="133.3" y="339.1" width="9.9" height="1.6" rx="0.8" fill="#666666" opacity="0.45"/><rect x="636.9" y="259.8" width="8.7" height="1.6" rx="0.8" fill="#666666" opacity="0.45"/><rect x="462.3" y="348.9" width="6.1" height="1.6" rx="0.8" fill="#666666" opacity="0.45"/><rect x="352.2" y="297.4" width="7.7" height="1.6" rx="0.8" fill="#666666" opacity="0.45"/><rect x="492.4" y="351.2" width="7.7" height="1.6" rx="0.8" fill="#616161" opacity="0.45"/><rect x="401.4" y="360.9" width="7.7" height="1.6" rx="0.8" fill="#666666" opacity="0.45"/><rect x="646.7" y="271.0" width="7.5" height="1.6" rx="0.8" fill="#666666" opacity="0.45"/><rect x="443.3" y="353.9" width="4.6" height="1.6" rx="0.8" fill="#585858" opacity="0.45"/><rect x="400.4" y="336.7" width="5.0" height="1.6" rx="0.8" fill="#585858" opacity="0.45"/><rect x="232.8" y="217.3" width="7.6" height="1.6" rx="0.8" fill="#666666" opacity="0.45"/><rect x="319.6" y="277.7" width="9.5" height="1.6" rx="0.8" fill="#666666" opacity="0.45"/><rect x="394.4" y="237.6" width="7.7" height="1.6" rx="0.8" fill="#585858" opacity="0.45"/><rect x="224.4" y="311.6" width="8.5" height="1.6" rx="0.8" fill="#585858" opacity="0.45"/><rect x="294.0" y="361.4" width="7.1" height="1.6" rx="0.8" fill="#5d5d5d" opacity="0.45"/><rect x="636.9" y="217.8" width="4.2" height="1.6" rx="0.8" fill="#616161" opacity="0.45"/><rect x="597.3" y="295.4" width="6.8" height="1.6" rx="0.8" fill="#5d5d5d" opacity="0.45"/><rect x="625.7" y="327.3" width="8.7" height="1.6" rx="0.8" fill="#585858" opacity="0.45"/><rect x="485.1" y="241.0" width="6.2" height="1.6" rx="0.8" fill="#666666" opacity="0.45"/><rect x="289.3" y="266.0" width="9.0" height="1.6" rx="0.8" fill="#666666" opacity="0.45"/><rect x="272.1" y="334.3" width="7.5" height="1.6" rx="0.8" fill="#666666" opacity="0.45"/><rect x="544.5" y="287.7" width="6.2" height="1.6" rx="0.8" fill="#585858" opacity="0.45"/><rect x="356.9" y="296.5" width="6.1" height="1.6" rx="0.8" fill="#585858" opacity="0.45"/><rect x="334.8" y="337.0" width="4.8" height="1.6" rx="0.8" fill="#616161" opacity="0.45"/><rect x="600.9" y="297.8" width="5.1" height="1.6" rx="0.8" fill="#585858" opacity="0.45"/><rect x="455.2" y="277.5" width="9.0" height="1.6" rx="0.8" fill="#616161" opacity="0.45"/><rect x="653.4" y="359.7" width="8.6" height="1.6" rx="0.8" fill="#5d5d5d" opacity="0.45"/><rect x="307.1" y="345.9" width="9.4" height="1.6" rx="0.8" fill="#585858" opacity="0.45"/><rect x="656.9" y="251.6" width="6.7" height="1.6" rx="0.8" fill="#666666" opacity="0.45"/><rect x="452.5" y="345.7" width="7.3" height="1.6" rx="0.8" fill="#666666" opacity="0.45"/><rect x="281.2" y="334.4" width="7.3" height="1.6" rx="0.8" fill="#666666" opacity="0.45"/><rect x="387.8" y="354.1" width="9.4" height="1.6" rx="0.8" fill="#585858" opacity="0.45"/><rect x="594.8" y="245.3" width="9.3" height="1.6" rx="0.8" fill="#585858" opacity="0.45"/><rect x="667.3" y="346.4" width="5.4" height="1.6" rx="0.8" fill="#616161" opacity="0.45"/><rect x="167.6" y="241.6" width="7.5" height="1.6" rx="0.8" fill="#666666" opacity="0.45"/><rect x="390.0" y="261.5" width="7.4" height="1.6" rx="0.8" fill="#5d5d5d" opacity="0.45"/><rect x="417.8" y="321.4" width="9.2" height="1.6" rx="0.8" fill="#616161" opacity="0.45"/></g><path d="M72.0 373.5 L76.0 373.6 L80.0 373.6 L84.0 373.8 L88.0 373.4 L92.0 373.6 L96.0 372.1 L100.0 372.7 L104.0 373.4 L108.0 372.8 L112.0 373.1 L116.0 371.7 L120.0 372.2 L124.3 371.8 L128.6 372.2 L132.9 372.2 L137.1 371.2 L141.4 371.5 L145.7 371.6 L150.0 372.6 L154.2 372.2 L158.3 371.1 L162.5 372.0 L166.7 370.9 L170.8 371.5 L175.0 370.6 L179.2 370.3 L183.3 371.5 L187.5 370.3 L191.7 370.1 L195.8 371.2 L200.0 370.9 L204.0 369.8 L208.0 370.7 L212.0 369.8 L216.0 369.9 L220.0 369.0 L224.0 370.0 L228.0 369.4 L232.5 369.7 L237.0 369.5 L241.5 368.5 L246.0 368.5 L250.5 368.1 L255.0 367.9 L259.2 367.7 L263.3 367.9 L267.5 368.2 L271.7 367.1 L275.8 368.0 L280.0 367.3 L284.0 367.2 L288.0 367.8 L292.0 367.1 L296.0 366.7 L300.0 366.9 L304.0 367.2 L308.0 366.1 L312.0 367.5 L316.0 366.0 L320.0 367.1 L324.0 367.2 L328.0 365.8 L332.0 367.0 L336.0 366.3 L340.0 366.6 L344.3 365.7 L348.6 365.8 L352.9 366.0 L357.1 367.3 L361.4 366.1 L365.7 367.0 L370.0 367.3 L374.2 367.2 L378.3 366.1 L382.5 366.0 L386.7 366.2 L390.8 366.5 L395.0 365.3 L399.2 366.4 L403.3 366.5 L407.5 366.7 L411.7 365.4 L415.8 366.9 L420.0 365.6 L424.3 366.0 L428.6 366.4 L432.9 366.9 L437.1 365.9 L441.4 366.8 L445.7 366.2 L450.0 365.8 L454.3 365.7 L458.6 365.5 L462.9 365.3 L467.1 365.3 L471.4 366.1 L475.7 366.6 L480.0 365.2 L484.3 364.9 L488.6 366.4 L492.9 365.6 L497.1 365.4 L501.4 365.1 L505.7 365.6 L510.0 365.9 L514.2 365.4 L518.3 365.4 L522.5 364.8 L526.7 366.3 L530.8 364.9 L535.0 365.7 L539.2 366.3 L543.3 365.2 L547.5 366.2 L551.7 366.6 L555.8 366.2 L560.0 366.5 L564.0 365.5 L568.0 366.2 L572.0 365.9 L576.0 367.1 L580.0 366.4 L584.5 366.9 L589.0 367.9 L593.5 367.9 L598.0 368.4 L602.7 367.3 L607.3 367.2 L612.0 367.4 L616.0 366.4 L620.0 365.6 L624.0 365.2 L628.0 364.9 L632.0 365.3 L636.0 366.3 L640.0 366.3 L644.0 365.9 L648.0 365.8 L652.0 365.6 L656.0 365.3 L660.0 365.6 L664.0 366.5 L668.0 366.7 L672.0 366.0 L676.0 366.7 L680.0 366.7 L684.0 366.7 L688.0 366.7 L692.0 366.9 L696.0 366.3 L700.0 366.9 L704.0 366.2 L708.0 366.5 L712.0 366.9 L716.0 366.7 L720.0 366.1 L725.0 367.1 L730.0 366.7 L735.0 366.5" stroke="#c8742c" stroke-width="1.5" fill="none" opacity="0.75"/><path d="M552 254.5h1M284 328.5h1M717 230.5h1M686 337.5h1M347 261.5h1M669 316.5h1M321 315.5h1M118 286.5h1M638 344.5h1M502 234.5h1M333 244.5h1M195 295.5h1M101 359.5h1M611 312.5h1M486 231.5h1M697 291.5h1M408 269.5h1M430 258.5h1M274 306.5h1M485 241.5h1M468 290.5h1M461 258.5h1M416 273.5h1M444 258.5h1M238 236.5h1M436 263.5h1M254 305.5h1M285 222.5h1M350 294.5h1M537 301.5h1M246 347.5h1M654 279.5h1M483 355.5h1M442 197.5h1M574 215.5h1M84 320.5h1M127 357.5h1M156 233.5h1M400 256.5h1M705 235.5h1M497 343.5h1M533 258.5h1M352 331.5h1M391 281.5h1M430 278.5h1M155 280.5h1M722 322.5h1M168 355.5h1M125 356.5h1M255 292.5h1M385 255.5h1M260 303.5h1M367 225.5h1M455 202.5h1M237 220.5h1M576 236.5h1M378 307.5h1M601 325.5h1M609 275.5h1M457 268.5h1M182 363.5h1M516 331.5h1M626 235.5h1M150 312.5h1M343 307.5h1M631 230.5h1M347 349.5h1M225 318.5h1M180 239.5h1M731 312.5h1M527 332.5h1M189 295.5h1M564 278.5h1M367 257.5h1M397 329.5h1M371 282.5h1M475 315.5h1M75 289.5h1M384 335.5h1M124 334.5h1M181 343.5h1M520 352.5h1M716 300.5h1M173 363.5h1M425 311.5h1M287 321.5h1M575 305.5h1M312 330.5h1M130 258.5h1M712 238.5h1M561 352.5h1M412 327.5h1M597 295.5h1M463 297.5h1M534 202.5h1M247 265.5h1M644 234.5h1M158 325.5h1M704 312.5h1M155 364.5h1M120 353.5h1M576 269.5h1M257 276.5h1M276 323.5h1M602 205.5h1M473 362.5h1M258 317.5h1M185 242.5h1M594 240.5h1M545 249.5h1M243 313.5h1M347 322.5h1M264 238.5h1M398 206.5h1M135 250.5h1M331 304.5h1M541 232.5h1M196 362.5h1M629 315.5h1M161 349.5h1M131 225.5h1M261 272.5h1M253 204.5h1M710 242.5h1M725 215.5h1M652 224.5h1M464 301.5h1M199 357.5h1M309 262.5h1M157 294.5h1M285 295.5h1M566 198.5h1M401 205.5h1M458 253.5h1M522 264.5h1M155 261.5h1M201 340.5h1M161 343.5h1M652 310.5h1M588 315.5h1M80 314.5h1M495 310.5h1M257 359.5h1M416 346.5h1M522 231.5h1M352 308.5h1M581 284.5h1M103 272.5h1M689 314.5h1M708 338.5h1M612 252.5h1M246 308.5h1M295 266.5h1M445 269.5h1M130 231.5h1M138 361.5h1M361 314.5h1M98 272.5h1M562 248.5h1M694 353.5h1M692 334.5h1M523 329.5h1M162 273.5h1M205 253.5h1M643 235.5h1M658 319.5h1M343 289.5h1M565 345.5h1M356 245.5h1M695 307.5h1M338 291.5h1M282 348.5h1M591 292.5h1M719 331.5h1M700 272.5h1M400 287.5h1M78 264.5h1M434 356.5h1M215 228.5h1M255 220.5h1M470 331.5h1M618 321.5h1M422 291.5h1M463 278.5h1M379 343.5h1M82 306.5h1M388 293.5h1M645 250.5h1M132 361.5h1M365 202.5h1M420 220.5h1M154 357.5h1M247 357.5h1M617 287.5h1M167 270.5h1M199 325.5h1M148 251.5h1M723 318.5h1M653 239.5h1M685 232.5h1M483 269.5h1M193 226.5h1M505 252.5h1M316 348.5h1M663 345.5h1M295 298.5h1M225 285.5h1M217 339.5h1M454 199.5h1M435 210.5h1M709 308.5h1M275 294.5h1M543 232.5h1M88 327.5h1M481 326.5h1M624 345.5h1M291 322.5h1M671 275.5h1M684 310.5h1M221 240.5h1M483 270.5h1M515 252.5h1M494 214.5h1M260 352.5h1M265 319.5h1M256 335.5h1M334 359.5h1M719 232.5h1M661 252.5h1M75 350.5h1M270 257.5h1M209 273.5h1M291 275.5h1M688 339.5h1M704 325.5h1M715 264.5h1M640 255.5h1M483 257.5h1M365 344.5h1M552 218.5h1M223 267.5h1M223 311.5h1M589 355.5h1M511 288.5h1M258 275.5h1M142 258.5h1M698 319.5h1M400 255.5h1M553 247.5h1M585 312.5h1M435 283.5h1M190 286.5h1M218 228.5h1M433 240.5h1M503 305.5h1M190 270.5h1M105 260.5h1M563 323.5h1M116 349.5h1M610 226.5h1M454 316.5h1M84 317.5h1M682 336.5h1M541 332.5h1M449 331.5h1M381 256.5h1M393 252.5h1M448 358.5h1M255 354.5h1M479 323.5h1M554 284.5h1M188 295.5h1M527 353.5h1M701 237.5h1M591 356.5h1M592 263.5h1M519 262.5h1M557 214.5h1M112 255.5h1M460 347.5h1M305 348.5h1M571 237.5h1M300 346.5h1M132 270.5h1M207 353.5h1M100 320.5h1M374 324.5h1M387 274.5h1M230 240.5h1M608 220.5h1M386 266.5h1M604 267.5h1M381 221.5h1M366 262.5h1M658 352.5h1M404 290.5h1M546 250.5h1M200 327.5h1M108 265.5h1M163 202.5h1M619 350.5h1M425 233.5h1M577 325.5h1M136 325.5h1M158 359.5h1M226 335.5h1M267 313.5h1M111 257.5h1M651 271.5h1M155 345.5h1M402 219.5h1M136 276.5h1M260 302.5h1M415 343.5h1M248 345.5h1M149 198.5h1M723 350.5h1M203 327.5h1M704 289.5h1M266 349.5h1M702 235.5h1M214 254.5h1M522 250.5h1M161 339.5h1M303 199.5h1M438 361.5h1M81 303.5h1M663 228.5h1M191 264.5h1M307 329.5h1M194 354.5h1M487 228.5h1M152 331.5h1M535 330.5h1M631 310.5h1M483 281.5h1M432 324.5h1M288 257.5h1M270 285.5h1M504 319.5h1M730 308.5h1M704 252.5h1M556 251.5h1M669 261.5h1M493 310.5h1M332 217.5h1M289 260.5h1M184 270.5h1M102 282.5h1M102 246.5h1M426 343.5h1M343 242.5h1M594 293.5h1M101 282.5h1M261 305.5h1M700 228.5h1M88 341.5h1M289 301.5h1M397 252.5h1M326 220.5h1M399 286.5h1M142 344.5h1M724 254.5h1M186 320.5h1M359 241.5h1M718 330.5h1M321 206.5h1M286 364.5h1M380 201.5h1M379 276.5h1M626 323.5h1M76 296.5h1M701 259.5h1M253 285.5h1M402 208.5h1M723 196.5h1M512 318.5h1M209 211.5h1M666 355.5h1M203 324.5h1M460 338.5h1M419 300.5h1M524 261.5h1M617 216.5h1M342 335.5h1M251 287.5h1M674 246.5h1M207 319.5h1M438 323.5h1M530 341.5h1M665 295.5h1M394 290.5h1M449 253.5h1M143 341.5h1M214 275.5h1M296 235.5h1M95 218.5h1M343 281.5h1M660 308.5h1M169 226.5h1M520 293.5h1M548 277.5h1M720 219.5h1M272 231.5h1M584 345.5h1M661 250.5h1M404 298.5h1M167 300.5h1M136 321.5h1M181 232.5h1M418 287.5h1M152 358.5h1M204 306.5h1M235 309.5h1M124 216.5h1M700 322.5h1M256 325.5h1M327 301.5h1M342 344.5h1M130 255.5h1M541 276.5h1M377 325.5h1M172 267.5h1M642 209.5h1M425 258.5h1M437 355.5h1" stroke="#e6e8c4" stroke-width="1" opacity="0.8"/><path d="M72.5 385 V191.5 H735" stroke="#0a0a3a" stroke-width="1" fill="none"/><path d="M72 384.5 H734.5 V191" stroke="#10206a" stroke-width="1" fill="none" opacity="0.7"/></svg>
<div class="a" style="left:2px;top:422px;width:784px;height:13px;background:linear-gradient(#e3e5e8,#eceef0 30%,#eceef0)"></div>
<svg class="a" style="left:6px;top:425px" width="5" height="7" viewBox="0 0 5 7"><path d="M4.2 0.4 L0.8 3.5 L4.2 6.6Z" fill="#333"/></svg>
<svg class="a" style="left:776.5px;top:425px" width="5" height="7" viewBox="0 0 5 7"><path d="M0.8 0.4 L4.2 3.5 L0.8 6.6Z" fill="#333"/></svg>
<div class="a" style="left:353px;top:422px;width:13.5px;height:12.6px;border:1px solid #8e9196;border-radius:2px;background:linear-gradient(#f4f4f4,#e2e3e5 50%,#d2d4d7 51%,#dcdee0)"></div>
<svg class="a" style="left:793px;top:141px" width="250" height="294" viewBox="793 141 250 294" font-family="Liberation Sans, sans-serif" font-size="10"><rect x="832.6" y="191.5" width="189.19999999999993" height="171.0" fill="#f5f5f5"/><path d="M856.25 191.5 V362.5 M879.90 191.5 V362.5 M903.55 191.5 V362.5 M927.20 191.5 V362.5 M950.85 191.5 V362.5 M974.50 191.5 V362.5 M998.15 191.5 V362.5 M832.6 331.50 H1021.8 M832.6 300.50 H1021.8 M832.6 269.50 H1021.8 M832.6 238.50 H1021.8 M832.6 207.50 H1021.8" stroke="#c3c3c3" stroke-width="1" fill="none"/><rect x="832.60" y="360.64" width="23.65" height="1.86" fill="#f2e27a" stroke="#222" stroke-width="1"/><rect x="856.25" y="255.24" width="23.65" height="107.26" fill="#ffcc00" stroke="#222" stroke-width="1"/><rect x="879.90" y="211.22" width="23.65" height="151.28" fill="#ffaa00" stroke="#222" stroke-width="1"/><rect x="903.55" y="325.61" width="23.65" height="36.89" fill="#ff8c00" stroke="#222" stroke-width="1"/><rect x="927.20" y="352.89" width="23.65" height="9.61" fill="#ff5a0a" stroke="#222" stroke-width="1"/><rect x="950.85" y="358.47" width="23.65" height="4.03" fill="#ee4412" stroke="#222" stroke-width="1"/><path d="M832.6 191.5 H1021.8 V362.5 H832.6 Z" stroke="#222" stroke-width="1.1" fill="none"/><path d="M832.60 185.8 V191.5 M837.33 187.8 V191.5 M842.06 187.8 V191.5 M846.79 187.8 V191.5 M851.52 187.8 V191.5 M856.25 185.8 V191.5 M860.98 187.8 V191.5 M865.71 187.8 V191.5 M870.44 187.8 V191.5 M875.17 187.8 V191.5 M879.90 185.8 V191.5 M884.63 187.8 V191.5 M889.36 187.8 V191.5 M894.09 187.8 V191.5 M898.82 187.8 V191.5 M903.55 185.8 V191.5 M908.28 187.8 V191.5 M913.01 187.8 V191.5 M917.74 187.8 V191.5 M922.47 187.8 V191.5 M927.20 185.8 V191.5 M931.93 187.8 V191.5 M936.66 187.8 V191.5 M941.39 187.8 V191.5 M946.12 187.8 V191.5 M950.85 185.8 V191.5 M955.58 187.8 V191.5 M960.31 187.8 V191.5 M965.04 187.8 V191.5 M969.77 187.8 V191.5 M974.50 185.8 V191.5 M979.23 187.8 V191.5 M983.96 187.8 V191.5 M988.69 187.8 V191.5 M993.42 187.8 V191.5 M998.15 185.8 V191.5 M1002.88 187.8 V191.5 M1007.61 187.8 V191.5 M1012.34 187.8 V191.5 M1017.07 187.8 V191.5 M1021.80 185.8 V191.5 M829 362.50 H832.6 M831 347.00 H832.6 M829 331.50 H832.6 M831 316.00 H832.6 M829 300.50 H832.6 M831 285.00 H832.6 M829 269.50 H832.6 M831 254.00 H832.6 M829 238.50 H832.6 M831 223.00 H832.6 M829 207.50 H832.6" stroke="#222" stroke-width="1" fill="none"/><text x="831.40" y="185.2" text-anchor="middle" fill="#222" letter-spacing="-0.4">-35</text><text x="855.05" y="185.2" text-anchor="middle" fill="#222" letter-spacing="-0.4">-30</text><text x="878.70" y="185.2" text-anchor="middle" fill="#222" letter-spacing="-0.4">-25</text><text x="902.35" y="185.2" text-anchor="middle" fill="#222" letter-spacing="-0.4">-20</text><text x="926.00" y="185.2" text-anchor="middle" fill="#222" letter-spacing="-0.4">-15</text><text x="949.65" y="185.2" text-anchor="middle" fill="#222" letter-spacing="-0.4">-10</text><text x="973.30" y="185.2" text-anchor="middle" fill="#222" letter-spacing="-0.4">-5</text><text x="998.15" y="185.2" text-anchor="middle" fill="#222" letter-spacing="-0.4">0</text><text x="1021.80" y="185.2" text-anchor="middle" fill="#222" letter-spacing="-0.4">5</text><text x="828" y="366.10" text-anchor="end" fill="#222" letter-spacing="-0.4">0</text><text x="828" y="335.10" text-anchor="end" fill="#222" letter-spacing="-0.4">10</text><text x="828" y="304.10" text-anchor="end" fill="#222" letter-spacing="-0.4">20</text><text x="828" y="273.10" text-anchor="end" fill="#222" letter-spacing="-0.4">30</text><text x="828" y="242.10" text-anchor="end" fill="#222" letter-spacing="-0.4">40</text><text x="828" y="211.10" text-anchor="end" fill="#222" letter-spacing="-0.4">50</text><text transform="translate(802.4 223.5) rotate(-90)" text-anchor="middle" fill="#dd2c48" letter-spacing="-0.3">SED Count (%)</text><text x="834.5" y="375.00" fill="#222" letter-spacing="-0.32" xml:space="preserve">Ping # 2031</text><text x="970.4" y="375.00" fill="#222" letter-spacing="-0.32" xml:space="preserve">Total: 162</text><text x="834.5" y="386.70" fill="#222" letter-spacing="-0.32" xml:space="preserve">Max bin: 48.8%</text><text x="909" y="386.70" fill="#222" letter-spacing="-0.32" xml:space="preserve">Count: 79</text><text x="834.5" y="398.40" fill="#222" letter-spacing="-0.32" xml:space="preserve">TS: --</text><text x="834.5" y="410.00" fill="#222" letter-spacing="-0.32" xml:space="preserve">Percent: --</text><text x="909" y="410.00" fill="#222" letter-spacing="-0.32" xml:space="preserve">Count: --</text><text x="834.5" y="421.70" fill="#222" letter-spacing="-0.32" xml:space="preserve">Histogram Interval:  300 pings, 60.3 secs</text></svg>
<div class="a" style="left:2px;top:435px;width:1041.5px;height:17.5px;background:#eff4f9;border-top:1.4px solid #5a5a5a"></div>
<div class="a" style="left:225.5px;top:437px;width:1px;height:15px;background:#d3d8de"></div>
<div class="a" style="left:226.5px;top:437px;width:1px;height:15px;background:#fff"></div>
<div class="a" style="left:352px;top:437px;width:1px;height:15px;background:#d3d8de"></div>
<div class="a" style="left:353px;top:437px;width:1px;height:15px;background:#fff"></div>
<div class="a" style="left:414.5px;top:437px;width:1px;height:15px;background:#d3d8de"></div>
<div class="a" style="left:415.5px;top:437px;width:1px;height:15px;background:#fff"></div>
<div class="a" style="left:580.5px;top:437px;width:1px;height:15px;background:#d3d8de"></div>
<div class="a" style="left:581.5px;top:437px;width:1px;height:15px;background:#fff"></div>
<div class="a" style="left:828px;top:437px;width:1px;height:15px;background:#d3d8de"></div>
<div class="a" style="left:829px;top:437px;width:1px;height:15px;background:#fff"></div>
<div class="t" style="top:439.70px;font-size:10px;letter-spacing:-0.42px;color:#222;left:4.80px;white-space:pre;">2012-08-09 12:43:11.844 GMT-07:00</div>
<div class="t" style="top:439.70px;font-size:10px;letter-spacing:-0.42px;color:#222;left:228.40px;white-space:pre;">Ping #: 2031/4480</div>
<div class="t" style="top:439.70px;font-size:10px;letter-spacing:-0.42px;color:#222;left:355.00px;white-space:pre;">4.97 pps</div>
<div class="t" style="top:439.70px;font-size:10px;letter-spacing:-0.42px;color:#222;left:417.20px;white-space:pre;">\ Range to Bottom: 80.5 m</div>
<div class="t" style="top:439.70px;font-size:10px;letter-spacing:-0.42px;color:#222;left:583.20px;white-space:pre;">Lat/Lon: / 49° 1.760'N, 123° 15.193'W</div>
<div class="t" style="top:439.70px;font-size:10px;letter-spacing:-0.42px;color:#222;left:830.60px;white-space:pre;">\ P:-0.2°, R:1.1°  |  C: 252.2°</div>
<div class="a" style="left:0;top:457.5px;width:1046px;height:2px;background:#5e5e5e"></div>
<div class="a" style="left:0;top:460px;width:1046px;height:340px;background:#b9d0ee"></div>
<div class="a" style="left:0;top:460px;width:1046px;height:24px;background:linear-gradient(#93b3d9,#a6c1e1 45%,#b9cfe8)"></div>
<div class="a" style="left:4px;top:467px;width:12.8px;height:12.8px;background:#fff;border:1px solid #1a1a1a"></div>
<div class="a" style="left:12.4px;top:467px;width:1px;height:12.5px;background:#1a1a1a"></div>
<div class="t" style="top:469.02px;font-size:12px;letter-spacing:0px;color:#1b1b1b;left:20.00px;transform:scaleX(0.775);transform-origin:left center;">1: fred Ch 9 T206P134 (X1), 0.4 ms</div>
<div class="a" style="left:963.5px;top:467px;width:25px;height:14px;border-radius:2.5px;background:linear-gradient(#c9d9ec,#b1c6e0 45%,#a3bbda 50%,#b4c9e3);border:1px solid #5e7696"></div>
<div class="a" style="left:991px;top:467px;width:25px;height:14px;border-radius:2.5px;background:linear-gradient(#c9d9ec,#b1c6e0 45%,#a3bbda 50%,#b4c9e3);border:1px solid #5e7696"></div>
<div class="a" style="left:1018.5px;top:467px;width:25px;height:14px;border-radius:2.5px;background:linear-gradient(#e0897a,#cf4a36 45%,#c23420 50%,#d4604a);border:1px solid #6e2a22"></div>
<div class="a" style="left:972px;top:474px;width:9px;height:4px;background:#fff;border:1px solid #4a5568;border-radius:1px"></div>
<div class="a" style="left:999px;top:469.5px;width:9px;height:8px;background:#fff;border:1px solid #4a5568;border-radius:1px"></div>
<div class="a" style="left:1001.5px;top:472.5px;width:4px;height:3px;background:#9fb4cf;border:1px solid #4a5568"></div>
<svg class="a" style="left:1025px;top:468.5px" width="12" height="11" viewBox="0 0 12 11"><path d="M2.6 2.2 L9.4 8.8 M9.4 2.2 L2.6 8.8" stroke="#6b2018" stroke-width="3.8"/><path d="M2.6 2.2 L9.4 8.8 M9.4 2.2 L2.6 8.8" stroke="#fff" stroke-width="2.2"/></svg>
<div class="a" style="left:2px;top:484px;width:1041.5px;height:294px;background:#edf2f7"></div>
<div class="a" style="left:786px;top:484px;width:7px;height:294px;background:#b9b9b9"></div>
<svg class="a" style="left:9.5px;top:490px" width="23" height="21" viewBox="0 0 23 21"><g fill="none" stroke="#c4c9ce"><path d="M8.9 1.3 L1.1 19 L11 19" stroke-width="2"/><path d="M8.2 10.4 A5.7 10.7 0 0 1 11.4 19.9" stroke-width="2.3"/><path d="M9.4 6.2 A10 14.7 0 0 1 15.7 19.9" stroke-width="2.3"/><path d="M10.8 2.4 A14.8 18.1 0 0 1 20.5 19.9" stroke-width="2.3"/></g></svg>
<svg class="a" style="left:800.5px;top:490px" width="23" height="21" viewBox="0 0 23 21"><g fill="none" stroke="#c4c9ce"><path d="M8.9 1.3 L1.1 19 L11 19" stroke-width="2"/><path d="M8.2 10.4 A5.7 10.7 0 0 1 11.4 19.9" stroke-width="2.3"/><path d="M9.4 6.2 A10 14.7 0 0 1 15.7 19.9" stroke-width="2.3"/><path d="M10.8 2.4 A14.8 18.1 0 0 1 20.5 19.9" stroke-width="2.3"/></g></svg>
<div class="t" style="top:485.70px;font-size:10px;letter-spacing:-0.4px;color:#dd2c48;left:73.00px;">Ping Number</div>
<div class="t" style="top:485.70px;font-size:10px;letter-spacing:-0.28px;color:#dd2c48;left:834.50px;">Target Strength (dB)</div>
<div class="t" style="top:506.70px;font-size:10px;letter-spacing:-0.33px;color:#222;left:331.70px;">EL Echogram (Detections Overlay)</div>
<div class="t" style="top:507.00px;font-size:10px;letter-spacing:-0.3px;color:#222;left:896.40px;">SED Histogram</div>
<svg class="a" style="left:0;top:484px" width="790" height="294" viewBox="0 141 790 294" font-family="Liberation Sans, sans-serif" font-size="10"><path d="M96.40 186.5 V191 M121.09 188.6 V191 M145.78 188.6 V191 M170.47 188.6 V191 M195.16 186.5 V191 M219.85 188.6 V191 M244.54 188.6 V191 M269.23 188.6 V191 M293.92 186.5 V191 M318.61 188.6 V191 M343.30 188.6 V191 M367.99 188.6 V191 M392.68 186.5 V191 M417.37 188.6 V191 M442.06 188.6 V191 M466.75 188.6 V191 M491.44 186.5 V191 M516.13 188.6 V191 M540.82 188.6 V191 M565.51 188.6 V191 M590.20 186.5 V191 M614.89 188.6 V191 M639.58 188.6 V191 M664.27 188.6 V191 M688.96 186.5 V191 M713.65 188.6 V191" stroke="#333" stroke-width="1" fill="none"/><text x="96.40" y="185" text-anchor="middle" fill="#222" letter-spacing="-0.45">1400</text><text x="195.16" y="185" text-anchor="middle" fill="#222" letter-spacing="-0.45">1600</text><text x="293.92" y="185" text-anchor="middle" fill="#222" letter-spacing="-0.45">1800</text><text x="392.68" y="185" text-anchor="middle" fill="#222" letter-spacing="-0.45">2000</text><text x="491.44" y="185" text-anchor="middle" fill="#222" letter-spacing="-0.45">2200</text><text x="590.20" y="185" text-anchor="middle" fill="#222" letter-spacing="-0.45">2400</text><text x="688.96" y="185" text-anchor="middle" fill="#222" letter-spacing="-0.45">2600</text><path d="M583.4 174 V191 M580.4 187.4 L583.4 191 L586.4 187.4" stroke="#e0203c" stroke-width="1.1" fill="none"/><rect x="49" y="191" width="17" height="194" fill="#111"/><rect x="50" y="192" width="15" height="4.6" fill="#808080"/><rect x="50" y="196.6" width="15" height="183" fill="url(#cbar)"/><rect x="50" y="380.4" width="15" height="3.8" fill="#fff"/><text x="42.7" y="200.60" text-anchor="end" fill="#222" letter-spacing="-0.4">0</text><text x="42.7" y="236.90" text-anchor="end" fill="#222" letter-spacing="-0.4">-10</text><text x="42.7" y="273.20" text-anchor="end" fill="#222" letter-spacing="-0.4">-20</text><text x="42.7" y="309.50" text-anchor="end" fill="#222" letter-spacing="-0.4">-30</text><text x="42.7" y="345.80" text-anchor="end" fill="#222" letter-spacing="-0.4">-40</text><text x="42.7" y="382.10" text-anchor="end" fill="#222" letter-spacing="-0.4">-50</text><path d="M45 197.00 H49 M45 233.30 H49 M45 269.60 H49 M45 305.90 H49 M45 342.20 H49 M45 378.50 H49 M47 204.26 H49 M47 211.52 H49 M47 218.78 H49 M47 226.04 H49 M47 240.56 H49 M47 247.82 H49 M47 255.08 H49 M47 262.34 H49 M47 276.86 H49 M47 284.12 H49 M47 291.38 H49 M47 298.64 H49 M47 313.16 H49 M47 320.42 H49 M47 327.68 H49 M47 334.94 H49 M47 349.46 H49 M47 356.72 H49 M47 363.98 H49 M47 371.24 H49" stroke="#333" stroke-width="1" fill="none"/><text transform="translate(11.6 223.5) rotate(-90)" text-anchor="middle" fill="#dd2c48" letter-spacing="-0.35">Amplitude (dB)</text><text x="740.8" y="219.90" fill="#222" letter-spacing="-0.4">20</text><text x="740.8" y="246.45" fill="#222" letter-spacing="-0.4">30</text><text x="740.8" y="273.00" fill="#222" letter-spacing="-0.4">40</text><text x="740.8" y="299.55" fill="#222" letter-spacing="-0.4">50</text><text x="740.8" y="326.10" fill="#222" letter-spacing="-0.4">60</text><text x="740.8" y="352.65" fill="#222" letter-spacing="-0.4">70</text><text x="740.8" y="379.20" fill="#222" letter-spacing="-0.4">80</text><path d="M735 216.30 H740.5 M735 242.85 H740.5 M735 269.40 H740.5 M735 295.95 H740.5 M735 322.50 H740.5 M735 349.05 H740.5 M735 375.60 H740.5 M735 195.06 H738.4 M735 200.37 H738.4 M735 205.68 H738.4 M735 210.99 H738.4 M735 216.30 H738.4 M735 221.61 H738.4 M735 226.92 H738.4 M735 232.23 H738.4 M735 237.54 H738.4 M735 242.85 H738.4 M735 248.16 H738.4 M735 253.47 H738.4 M735 258.78 H738.4 M735 264.09 H738.4 M735 269.40 H738.4 M735 274.71 H738.4 M735 280.02 H738.4 M735 285.33 H738.4 M735 290.64 H738.4 M735 295.95 H738.4 M735 301.26 H738.4 M735 306.57 H738.4 M735 311.88 H738.4 M735 317.19 H738.4 M735 322.50 H738.4 M735 327.81 H738.4 M735 333.12 H738.4 M735 338.43 H738.4 M735 343.74 H738.4 M735 349.05 H738.4 M735 354.36 H738.4 M735 359.67 H738.4 M735 364.98 H738.4 M735 370.29 H738.4 M735 375.60 H738.4 M735 380.91 H738.4" stroke="#222" stroke-width="1" fill="none"/><text transform="translate(777.4 213.2) rotate(90)" text-anchor="middle" fill="#dd2c48" letter-spacing="-0.35">Range (m)</text><text x="723.5" y="397.5" fill="#444" letter-spacing="0.2">-- , --</text></svg>
<svg class="a" style="left:72px;top:534px" width="663" height="194" viewBox="72 534 663 194"><rect x="72" y="534" width="663" height="194" fill="#fff"/><path d="M201.2 727.2h1M206.6 726.9h1M210.8 727.1h2M216.4 726.9h3M218.4 726.8h1M227.3 726.0h1M224.6 726.3h1M225.5 727.2h3M235.2 727.3h3M235.6 727.1h1M237.5 726.5h3M238.3 726.0h1M244.6 726.0h2M243.5 726.5h2M247.0 726.9h1M249.5 726.4h1M253.8 726.5h1M257.3 726.4h3M254.6 727.4h1M265.8 727.4h2M264.7 725.4h2M264.2 725.0h1M267.8 725.7h2M268.3 726.0h3M273.6 725.6h1M271.2 727.4h3M277.7 727.2h2M279.5 726.8h1M282.9 725.7h1M285.7 725.2h3M284.2 727.2h3M286.1 726.5h1M288.0 724.6h3M290.1 726.8h2M295.2 725.6h3M292.1 724.3h3M299.7 725.7h2M298.0 725.6h2M299.5 726.0h1M300.7 726.9h1M304.2 726.1h3M307.1 724.3h3M307.6 726.8h1M311.8 725.6h3M312.9 725.1h3M315.7 726.9h1M319.3 723.8h2M319.0 723.8h1M320.6 725.1h1M323.1 724.0h3M324.1 723.7h1M326.9 725.5h3M326.7 723.5h2M330.7 725.2h3M332.7 724.1h1M336.5 726.6h3M336.0 726.5h3M337.2 726.9h3M338.1 724.5h2M340.1 726.3h3M343.8 725.6h3M343.4 725.5h2M345.3 726.2h2M347.9 726.5h3M351.2 726.1h1M353.7 725.4h2M351.1 726.3h1M358.1 724.4h1M362.4 727.2h1M361.6 725.1h2M360.9 725.8h3M363.9 725.3h3M363.1 724.3h1M367.6 724.0h3M370.3 724.5h2M372.6 725.8h3M373.1 724.9h3M378.5 726.9h3M375.8 726.3h1M382.8 726.7h2M382.3 724.2h3M385.9 726.9h1M387.2 725.6h1M388.5 725.4h3M390.7 724.4h2M393.1 726.4h2M400.6 725.7h2M401.9 726.2h2M403.0 726.5h3M402.3 725.3h3M407.7 726.1h2M414.2 724.4h1M410.9 724.8h1M415.8 725.7h2M419.1 727.1h1M420.2 725.1h3M421.2 727.2h1M423.3 726.1h3M426.5 726.4h1M426.3 724.5h3M430.3 726.1h2M435.1 724.7h1M434.0 724.9h2M432.4 726.8h1M438.5 724.8h3M435.9 726.0h2M442.0 726.4h1M440.6 726.4h3M443.8 726.0h3M445.4 723.8h1M447.0 726.2h2M448.3 726.1h1M451.9 725.6h1M454.8 726.2h3M453.3 724.8h3M456.9 725.0h2M458.9 725.8h2M460.0 725.7h1M464.3 724.1h1M462.0 725.2h3M463.2 723.3h1M467.2 723.8h1M465.9 723.4h3M470.6 723.7h3M472.1 724.4h2M472.9 725.2h1M475.3 725.0h3M477.1 723.3h3M476.7 724.0h3M479.5 725.8h2M478.3 725.2h3M482.9 725.3h2M483.6 724.1h2M487.9 725.5h2M487.3 724.1h2M492.1 723.7h1M492.4 724.6h3M493.6 722.4h3M497.9 725.9h1M496.2 722.9h1M497.5 723.3h2M500.3 725.1h2M501.1 725.4h2M506.4 725.2h2M504.6 722.7h3M511.3 723.7h3M510.7 723.4h3M508.5 725.0h3M514.6 723.1h1M516.2 724.1h2M515.1 723.1h3M516.6 724.0h3M517.1 723.0h3M524.2 724.7h1M522.6 724.3h3M526.5 725.7h3M526.6 723.2h2M525.7 723.7h1M530.5 724.7h2M534.8 726.3h2M537.6 724.8h3M537.6 724.7h3M539.6 726.3h3M540.5 726.8h2M540.0 724.1h2M543.1 726.9h2M543.8 724.4h1M546.4 725.5h3M547.9 725.2h3M547.3 726.7h1M553.8 726.9h1M553.3 727.0h1M566.4 726.5h3M565.7 726.5h1M570.2 726.8h3M574.9 727.0h1M576.5 726.7h1M580.8 726.1h3M597.4 726.1h2M601.6 727.1h2M604.4 726.2h1M608.6 726.1h2M615.9 726.6h3M619.3 725.4h1M617.2 726.4h2M617.9 725.0h1M621.6 723.9h1M623.6 723.8h3M628.4 725.2h3M627.0 725.9h3M632.5 726.3h1M632.1 724.1h1M634.4 724.8h3M633.6 724.2h2M634.9 723.9h2M640.4 725.7h2M638.5 726.0h2M638.3 725.5h2M641.5 725.8h1M641.3 724.1h1M642.8 723.9h3M646.7 725.8h1M647.8 726.1h2M651.8 725.6h1M651.6 724.6h1M656.7 725.0h1M655.7 725.1h1M653.2 725.2h3M659.9 724.5h2M658.4 725.3h2M660.3 726.5h1M661.7 725.4h3M663.7 726.1h2M665.1 725.1h3M669.4 726.1h1M671.3 725.4h2M674.1 726.4h2M673.7 726.4h1M675.3 726.1h1M680.6 726.7h2M688.6 726.6h2M686.3 724.7h3M687.8 725.4h2M692.0 727.3h3M693.2 727.4h3M690.3 726.9h2M694.5 725.1h3M697.2 726.8h3M696.9 727.0h2M701.8 725.4h1M698.4 726.3h1M700.4 724.2h1M705.2 726.2h2M708.8 724.3h3M706.9 725.1h1M715.0 726.1h3M712.2 724.8h2M717.6 724.5h1M717.5 726.2h2M723.2 727.3h3M726.8 726.0h2M726.6 725.0h3M731.8 724.4h1M733.9 725.4h1M735.0 725.8h2M735.7 726.5h2" stroke="#24127a" stroke-width="1.1" fill="none"/><path d="M72.0 732.2 L76.5 731.8 L81.0 731.4 L85.5 731.6 L90.0 730.8 L94.3 730.5 L98.7 730.1 L103.0 728.9 L107.0 729.2 L111.0 729.1 L115.0 728.6 L119.0 728.8 L123.0 728.9 L127.0 728.7 L131.0 728.8 L135.0 728.3 L139.0 728.3 L143.0 728.1 L147.2 728.5 L151.5 728.8 L155.8 728.6 L160.0 728.8 L164.1 728.3 L168.2 728.3 L172.4 727.6 L176.5 727.5 L180.6 727.5 L184.8 727.3 L188.9 726.8 L193.0 726.3 L197.2 726.3 L201.3 726.1 L205.5 726.0 L209.6 726.2 L213.8 725.6 L217.9 725.9 L222.1 725.8 L226.2 725.1 L230.4 725.1 L234.5 725.1 L238.7 724.6 L242.8 724.7 L247.0 724.9 L251.3 724.2 L255.5 724.4 L259.8 724.0 L264.1 724.2 L268.4 724.3 L272.6 723.7 L276.9 723.4 L281.2 723.4 L285.5 723.6 L289.7 723.1 L294.0 723.0 L298.1 723.2 L302.2 723.4 L306.4 723.0 L310.5 722.9 L314.6 723.0 L318.8 722.5 L322.9 722.7 L327.0 722.4 L331.2 722.7 L335.4 723.0 L339.6 722.4 L343.8 722.8 L347.9 722.9 L352.1 722.6 L356.3 722.7 L360.5 723.3 L364.7 723.3 L368.9 722.8 L373.1 723.2 L377.2 723.4 L381.4 723.0 L385.6 723.3 L389.8 722.9 L394.0 723.2 L400.0 724.1 L404.2 724.0 L408.4 724.0 L412.6 723.4 L416.8 723.5 L420.9 723.7 L425.1 723.4 L429.3 723.2 L433.5 723.1 L437.7 723.4 L441.9 723.0 L446.1 722.5 L450.2 722.9 L454.4 722.5 L458.6 722.5 L462.8 722.2 L467.0 722.3 L471.3 722.1 L475.6 721.9 L479.9 722.2 L484.2 721.7 L488.5 722.1 L492.8 721.5 L497.1 722.0 L501.4 722.0 L505.7 721.7 L510.0 721.7 L514.3 721.6 L518.6 722.2 L522.9 722.2 L527.1 722.3 L531.4 723.0 L535.7 722.8 L540.0 723.0 L544.5 723.6 L549.0 723.5 L553.5 724.0 L558.0 723.9 L562.5 724.6 L567.0 724.4 L571.1 724.4 L575.2 725.2 L579.4 724.7 L583.5 725.4 L587.6 725.6 L591.8 725.4 L595.9 725.1 L600.0 725.3 L604.7 725.1 L609.3 724.9 L614.0 724.7 L618.3 724.2 L622.7 723.0 L627.0 722.0 L631.0 722.4 L635.0 722.2 L639.0 722.3 L643.0 722.7 L647.0 722.9 L651.0 722.6 L655.0 723.0 L659.0 723.2 L663.0 723.4 L667.0 723.2 L671.1 723.6 L675.2 723.1 L679.4 723.6 L683.5 723.6 L687.6 723.8 L691.8 723.5 L695.9 723.3 L700.0 723.3 L704.4 723.7 L708.8 723.5 L713.1 723.8 L717.5 723.5 L721.9 724.0 L726.2 723.7 L730.6 723.6 L735.0 724.0" stroke="#1a2cc8" stroke-width="1.5" fill="none"/><path d="M72.0 731.5 L76.5 731.1 L81.0 730.7 L85.5 730.9 L90.0 730.1 L94.3 729.8 L98.7 729.4 L103.0 728.2 L107.0 728.5 L111.0 728.4 L115.0 727.9 L119.0 728.1 L123.0 728.2 L127.0 728.0 L131.0 728.1 L135.0 727.6 L139.0 727.6 L143.0 727.4 L147.2 727.8 L151.5 728.1 L155.8 727.9 L160.0 728.1 L164.1 727.6 L168.2 727.6 L172.4 726.9 L176.5 726.8 L180.6 726.8 L184.8 726.6 L188.9 726.1 L193.0 725.6 L197.2 725.6 L201.3 725.4 L205.5 725.3 L209.6 725.5 L213.8 724.9 L217.9 725.2 L222.1 725.1 L226.2 724.4 L230.4 724.4 L234.5 724.4 L238.7 723.9 L242.8 724.0 L247.0 724.2 L251.3 723.5 L255.5 723.7 L259.8 723.3 L264.1 723.5 L268.4 723.6 L272.6 723.0 L276.9 722.7 L281.2 722.7 L285.5 722.9 L289.7 722.4 L294.0 722.3 L298.1 722.5 L302.2 722.7 L306.4 722.3 L310.5 722.2 L314.6 722.3 L318.8 721.8 L322.9 722.0 L327.0 721.7 L331.2 722.0 L335.4 722.3 L339.6 721.7 L343.8 722.1 L347.9 722.2 L352.1 721.9 L356.3 722.0 L360.5 722.6 L364.7 722.6 L368.9 722.1 L373.1 722.5 L377.2 722.7 L381.4 722.3 L385.6 722.6 L389.8 722.2 L394.0 722.5 L400.0 723.4 L404.2 723.3 L408.4 723.3 L412.6 722.7 L416.8 722.8 L420.9 723.0 L425.1 722.7 L429.3 722.5 L433.5 722.4 L437.7 722.7 L441.9 722.3 L446.1 721.8 L450.2 722.2 L454.4 721.8 L458.6 721.8 L462.8 721.5 L467.0 721.6 L471.3 721.4 L475.6 721.2 L479.9 721.5 L484.2 721.0 L488.5 721.4 L492.8 720.8 L497.1 721.3 L501.4 721.3 L505.7 721.0 L510.0 721.0 L514.3 720.9 L518.6 721.5 L522.9 721.5 L527.1 721.6 L531.4 722.3 L535.7 722.1 L540.0 722.3 L544.5 722.9 L549.0 722.8 L553.5 723.3 L558.0 723.2 L562.5 723.9 L567.0 723.7 L571.1 723.7 L575.2 724.5 L579.4 724.0 L583.5 724.7 L587.6 724.9 L591.8 724.7 L595.9 724.4 L600.0 724.6 L604.7 724.4 L609.3 724.2 L614.0 724.0 L618.3 723.5 L622.7 722.3 L627.0 721.3 L631.0 721.7 L635.0 721.5 L639.0 721.6 L643.0 722.0 L647.0 722.2 L651.0 721.9 L655.0 722.3 L659.0 722.5 L663.0 722.7 L667.0 722.5 L671.1 722.9 L675.2 722.4 L679.4 722.9 L683.5 722.9 L687.6 723.1 L691.8 722.8 L695.9 722.6 L700.0 722.6 L704.4 723.0 L708.8 722.8 L713.1 723.1 L717.5 722.8 L721.9 723.3 L726.2 723.0 L730.6 722.9 L735.0 723.3" stroke="#1b7cf0" stroke-width="1.3" fill="none"/><path d="M72.0 730.8 L76.5 730.4 L81.0 730.0 L85.5 730.2 L90.0 729.4 L94.3 729.1 L98.7 728.7 L103.0 727.5 L107.0 727.8 L111.0 727.7 L115.0 727.2 L119.0 727.4 L123.0 727.5 L127.0 727.3 L131.0 727.4 L135.0 726.9 L139.0 726.9 L143.0 726.7 L147.2 727.1 L151.5 727.4 L155.8 727.2 L160.0 727.4 L164.1 726.9 L168.2 726.9 L172.4 726.2 L176.5 726.1 L180.6 726.1 L184.8 725.9 L188.9 725.4 L193.0 724.9 L197.2 724.9 L201.3 724.7 L205.5 724.6 L209.6 724.8 L213.8 724.2 L217.9 724.5 L222.1 724.4 L226.2 723.7 L230.4 723.7 L234.5 723.7 L238.7 723.2 L242.8 723.3 L247.0 723.5 L251.3 722.8 L255.5 723.0 L259.8 722.6 L264.1 722.8 L268.4 722.9 L272.6 722.3 L276.9 722.0 L281.2 722.0 L285.5 722.2 L289.7 721.7 L294.0 721.6 L298.1 721.8 L302.2 722.0 L306.4 721.6 L310.5 721.5 L314.6 721.6 L318.8 721.1 L322.9 721.3 L327.0 721.0 L331.2 721.3 L335.4 721.6 L339.6 721.0 L343.8 721.4 L347.9 721.5 L352.1 721.2 L356.3 721.3 L360.5 721.9 L364.7 721.9 L368.9 721.4 L373.1 721.8 L377.2 722.0 L381.4 721.6 L385.6 721.9 L389.8 721.5 L394.0 721.8 L400.0 722.7 L404.2 722.6 L408.4 722.6 L412.6 722.0 L416.8 722.1 L420.9 722.3 L425.1 722.0 L429.3 721.8 L433.5 721.7 L437.7 722.0 L441.9 721.6 L446.1 721.1 L450.2 721.5 L454.4 721.1 L458.6 721.1 L462.8 720.8 L467.0 720.9 L471.3 720.7 L475.6 720.5 L479.9 720.8 L484.2 720.3 L488.5 720.7 L492.8 720.1 L497.1 720.6 L501.4 720.6 L505.7 720.3 L510.0 720.3 L514.3 720.2 L518.6 720.8 L522.9 720.8 L527.1 720.9 L531.4 721.6 L535.7 721.4 L540.0 721.6 L544.5 722.2 L549.0 722.1 L553.5 722.6 L558.0 722.5 L562.5 723.2 L567.0 723.0 L571.1 723.0 L575.2 723.8 L579.4 723.3 L583.5 724.0 L587.6 724.2 L591.8 724.0 L595.9 723.7 L600.0 723.9 L604.7 723.7 L609.3 723.5 L614.0 723.3 L618.3 722.8 L622.7 721.6 L627.0 720.6 L631.0 721.0 L635.0 720.8 L639.0 720.9 L643.0 721.3 L647.0 721.5 L651.0 721.2 L655.0 721.6 L659.0 721.8 L663.0 722.0 L667.0 721.8 L671.1 722.2 L675.2 721.7 L679.4 722.2 L683.5 722.2 L687.6 722.4 L691.8 722.1 L695.9 721.9 L700.0 721.9 L704.4 722.3 L708.8 722.1 L713.1 722.4 L717.5 722.1 L721.9 722.6 L726.2 722.3 L730.6 722.2 L735.0 722.6" stroke="#18d8e8" stroke-width="1.2" fill="none"/><path d="M72.0 730.2 L76.5 729.8 L81.0 729.4 L85.5 729.6 L90.0 728.8 L94.3 728.5 L98.7 728.1 L103.0 726.9 L107.0 727.2 L111.0 727.1 L115.0 726.6 L119.0 726.8 L123.0 726.9 L127.0 726.7 L131.0 726.8 L135.0 726.3 L139.0 726.3 L143.0 726.1 L147.2 726.5 L151.5 726.8 L155.8 726.6 L160.0 726.8 L164.1 726.3 L168.2 726.3 L172.4 725.6 L176.5 725.5 L180.6 725.5 L184.8 725.3 L188.9 724.8 L193.0 724.3 L197.2 724.3 L201.3 724.1 L205.5 724.0 L209.6 724.2 L213.8 723.6 L217.9 723.9 L222.1 723.8 L226.2 723.1 L230.4 723.1 L234.5 723.1 L238.7 722.6 L242.8 722.7 L247.0 722.9 L251.3 722.2 L255.5 722.4 L259.8 722.0 L264.1 722.2 L268.4 722.3 L272.6 721.7 L276.9 721.4 L281.2 721.4 L285.5 721.6 L289.7 721.1 L294.0 721.0 L298.1 721.2 L302.2 721.4 L306.4 721.0 L310.5 720.9 L314.6 721.0 L318.8 720.5 L322.9 720.7 L327.0 720.4 L331.2 720.7 L335.4 721.0 L339.6 720.4 L343.8 720.8 L347.9 720.9 L352.1 720.6 L356.3 720.7 L360.5 721.3 L364.7 721.3 L368.9 720.8 L373.1 721.2 L377.2 721.4 L381.4 721.0 L385.6 721.3 L389.8 720.9 L394.0 721.2 L400.0 722.1 L404.2 722.0 L408.4 722.0 L412.6 721.4 L416.8 721.5 L420.9 721.7 L425.1 721.4 L429.3 721.2 L433.5 721.1 L437.7 721.4 L441.9 721.0 L446.1 720.5 L450.2 720.9 L454.4 720.5 L458.6 720.5 L462.8 720.2 L467.0 720.3 L471.3 720.1 L475.6 719.9 L479.9 720.2 L484.2 719.7 L488.5 720.1 L492.8 719.5 L497.1 720.0 L501.4 720.0 L505.7 719.7 L510.0 719.7 L514.3 719.6 L518.6 720.2 L522.9 720.2 L527.1 720.3 L531.4 721.0 L535.7 720.8 L540.0 721.0 L544.5 721.6 L549.0 721.5 L553.5 722.0 L558.0 721.9 L562.5 722.6 L567.0 722.4 L571.1 722.4 L575.2 723.2 L579.4 722.7 L583.5 723.4 L587.6 723.6 L591.8 723.4 L595.9 723.1 L600.0 723.3 L604.7 723.1 L609.3 722.9 L614.0 722.7 L618.3 722.2 L622.7 721.0 L627.0 720.0 L631.0 720.4 L635.0 720.2 L639.0 720.3 L643.0 720.7 L647.0 720.9 L651.0 720.6 L655.0 721.0 L659.0 721.2 L663.0 721.4 L667.0 721.2 L671.1 721.6 L675.2 721.1 L679.4 721.6 L683.5 721.6 L687.6 721.8 L691.8 721.5 L695.9 721.3 L700.0 721.3 L704.4 721.7 L708.8 721.5 L713.1 721.8 L717.5 721.5 L721.9 722.0 L726.2 721.7 L730.6 721.6 L735.0 722.0" stroke="#30e060" stroke-width="1.0" fill="none"/><path d="M72.0 729.6 L76.5 729.2 L81.0 728.8 L85.5 729.0 L90.0 728.2 L94.3 727.9 L98.7 727.5 L103.0 726.3 L107.0 726.6 L111.0 726.5 L115.0 726.0 L119.0 726.2 L123.0 726.3 L127.0 726.1 L131.0 726.2 L135.0 725.7 L139.0 725.7 L143.0 725.5 L147.2 725.9 L151.5 726.2 L155.8 726.0 L160.0 726.2 L164.1 725.7 L168.2 725.7 L172.4 725.0 L176.5 724.9 L180.6 724.9 L184.8 724.7 L188.9 724.2 L193.0 723.7 L197.2 723.7 L201.3 723.5 L205.5 723.4 L209.6 723.6 L213.8 723.0 L217.9 723.3 L222.1 723.2 L226.2 722.5 L230.4 722.5 L234.5 722.5 L238.7 722.0 L242.8 722.1 L247.0 722.3 L251.3 721.6 L255.5 721.8 L259.8 721.4 L264.1 721.6 L268.4 721.7 L272.6 721.1 L276.9 720.8 L281.2 720.8 L285.5 721.0 L289.7 720.5 L294.0 720.4 L298.1 720.6 L302.2 720.8 L306.4 720.4 L310.5 720.3 L314.6 720.4 L318.8 719.9 L322.9 720.1 L327.0 719.8 L331.2 720.1 L335.4 720.4 L339.6 719.8 L343.8 720.2 L347.9 720.3 L352.1 720.0 L356.3 720.1 L360.5 720.7 L364.7 720.7 L368.9 720.2 L373.1 720.6 L377.2 720.8 L381.4 720.4 L385.6 720.7 L389.8 720.3 L394.0 720.6 L400.0 721.5 L404.2 721.4 L408.4 721.4 L412.6 720.8 L416.8 720.9 L420.9 721.1 L425.1 720.8 L429.3 720.6 L433.5 720.5 L437.7 720.8 L441.9 720.4 L446.1 719.9 L450.2 720.3 L454.4 719.9 L458.6 719.9 L462.8 719.6 L467.0 719.7 L471.3 719.5 L475.6 719.3 L479.9 719.6 L484.2 719.1 L488.5 719.5 L492.8 718.9 L497.1 719.4 L501.4 719.4 L505.7 719.1 L510.0 719.1 L514.3 719.0 L518.6 719.6 L522.9 719.6 L527.1 719.7 L531.4 720.4 L535.7 720.2 L540.0 720.4 L544.5 721.0 L549.0 720.9 L553.5 721.4 L558.0 721.3 L562.5 722.0 L567.0 721.8 L571.1 721.8 L575.2 722.6 L579.4 722.1 L583.5 722.8 L587.6 723.0 L591.8 722.8 L595.9 722.5 L600.0 722.7 L604.7 722.5 L609.3 722.3 L614.0 722.1 L618.3 721.6 L622.7 720.4 L627.0 719.4 L631.0 719.8 L635.0 719.6 L639.0 719.7 L643.0 720.1 L647.0 720.3 L651.0 720.0 L655.0 720.4 L659.0 720.6 L663.0 720.8 L667.0 720.6 L671.1 721.0 L675.2 720.5 L679.4 721.0 L683.5 721.0 L687.6 721.2 L691.8 720.9 L695.9 720.7 L700.0 720.7 L704.4 721.1 L708.8 720.9 L713.1 721.2 L717.5 720.9 L721.9 721.4 L726.2 721.1 L730.6 721.0 L735.0 721.4" stroke="#e0e020" stroke-width="1.0" fill="none"/><path d="M72.0 727.9 L76.5 727.6 L81.0 727.1 L85.5 727.4 L90.0 726.5 L94.3 726.2 L98.7 725.9 L103.0 724.7 L107.0 724.9 L111.0 724.9 L115.0 724.4 L119.0 724.5 L123.0 724.7 L127.0 724.4 L131.0 724.5 L135.0 724.1 L139.0 724.0 L143.0 723.9 L147.2 724.2 L151.5 724.5 L155.8 724.4 L160.0 724.5 L164.1 724.0 L168.2 724.0 L172.4 723.3 L176.5 723.2 L180.6 723.2 L184.8 723.0 L188.9 722.5 L193.0 722.1 L197.2 722.0 L201.3 721.8 L205.5 721.7 L209.6 722.0 L213.8 721.4 L217.9 721.7 L222.1 721.5 L226.2 720.8 L230.4 720.9 L234.5 720.8 L238.7 720.3 L242.8 720.5 L247.0 720.6 L251.3 720.0 L255.5 720.2 L259.8 719.7 L264.1 719.9 L268.4 720.0 L272.6 719.4 L276.9 719.2 L281.2 719.1 L285.5 719.3 L289.7 718.8 L294.0 718.8 L298.1 719.0 L302.2 719.2 L306.4 718.7 L310.5 718.6 L314.6 718.7 L318.8 718.2 L322.9 718.5 L327.0 718.1 L331.2 718.5 L335.4 718.8 L339.6 718.2 L343.8 718.6 L347.9 718.6 L352.1 718.4 L356.3 718.5 L360.5 719.0 L364.7 719.1 L368.9 718.5 L373.1 719.0 L377.2 719.2 L381.4 718.7 L385.6 719.0 L389.8 718.7 L394.0 719.0 L400.0 719.9 L404.2 719.7 L408.4 719.7 L412.6 719.1 L416.8 719.2 L420.9 719.5 L425.1 719.2 L429.3 719.0 L433.5 718.8 L437.7 719.1 L441.9 718.7 L446.1 718.2 L450.2 718.7 L454.4 718.2 L458.6 718.2 L462.8 718.0 L467.0 718.0 L471.3 717.9 L475.6 717.6 L479.9 717.9 L484.2 717.5 L488.5 717.9 L492.8 717.3 L497.1 717.8 L501.4 717.7 L505.7 717.4 L510.0 717.5 L514.3 717.4 L518.6 717.9 L522.9 717.9 L527.1 718.0 L531.4 718.7 L535.7 718.6 L540.0 718.8 L544.5 719.4 L549.0 719.3 L553.5 719.7 L558.0 719.6 L562.5 720.3 L567.0 720.2 L571.1 720.2 L575.2 720.9 L579.4 720.5 L583.5 721.2 L587.6 721.3 L591.8 721.2 L595.9 720.9 L600.0 721.0 L604.7 720.8 L609.3 720.6 L614.0 720.4 L618.3 719.9 L622.7 718.7 L627.0 717.8 L631.0 718.2 L635.0 718.0 L639.0 718.1 L643.0 718.5 L647.0 718.7 L651.0 718.3 L655.0 718.7 L659.0 719.0 L663.0 719.1 L667.0 719.0 L671.1 719.4 L675.2 718.9 L679.4 719.3 L683.5 719.4 L687.6 719.5 L691.8 719.3 L695.9 719.0 L700.0 719.0 L704.4 719.4 L708.8 719.2 L713.1 719.6 L717.5 719.3 L721.9 719.8 L726.2 719.5 L730.6 719.4 L735.0 719.8" stroke="#d0921e" stroke-width="3.5" fill="none"/><path d="M72.0 726.8 L76.5 726.4 L81.0 726.0 L85.5 726.2 L90.0 725.4 L94.3 725.1 L98.7 724.7 L103.0 723.5 L107.0 723.8 L111.0 723.7 L115.0 723.2 L119.0 723.4 L123.0 723.5 L127.0 723.3 L131.0 723.4 L135.0 722.9 L139.0 722.9 L143.0 722.7 L147.2 723.1 L151.5 723.4 L155.8 723.2 L160.0 723.4 L164.1 722.9 L168.2 722.9 L172.4 722.2 L176.5 722.1 L180.6 722.1 L184.8 721.9 L188.9 721.4 L193.0 720.9 L197.2 720.9 L201.3 720.7 L205.5 720.6 L209.6 720.8 L213.8 720.2 L217.9 720.5 L222.1 720.4 L226.2 719.7 L230.4 719.7 L234.5 719.7 L238.7 719.2 L242.8 719.3 L247.0 719.5 L251.3 718.8 L255.5 719.0 L259.8 718.6 L264.1 718.8 L268.4 718.9 L272.6 718.3 L276.9 718.0 L281.2 718.0 L285.5 718.2 L289.7 717.7 L294.0 717.6 L298.1 717.8 L302.2 718.0 L306.4 717.6 L310.5 717.5 L314.6 717.6 L318.8 717.1 L322.9 717.3 L327.0 717.0 L331.2 717.3 L335.4 717.6 L339.6 717.0 L343.8 717.4 L347.9 717.5 L352.1 717.2 L356.3 717.3 L360.5 717.9 L364.7 717.9 L368.9 717.4 L373.1 717.8 L377.2 718.0 L381.4 717.6 L385.6 717.9 L389.8 717.5 L394.0 717.8 L400.0 718.7 L404.2 718.6 L408.4 718.6 L412.6 718.0 L416.8 718.1 L420.9 718.3 L425.1 718.0 L429.3 717.8 L433.5 717.7 L437.7 718.0 L441.9 717.6 L446.1 717.1 L450.2 717.5 L454.4 717.1 L458.6 717.1 L462.8 716.8 L467.0 716.9 L471.3 716.7 L475.6 716.5 L479.9 716.8 L484.2 716.3 L488.5 716.7 L492.8 716.1 L497.1 716.6 L501.4 716.6 L505.7 716.3 L510.0 716.3 L514.3 716.2 L518.6 716.8 L522.9 716.8 L527.1 716.9 L531.4 717.6 L535.7 717.4 L540.0 717.6 L544.5 718.2 L549.0 718.1 L553.5 718.6 L558.0 718.5 L562.5 719.2 L567.0 719.0 L571.1 719.0 L575.2 719.8 L579.4 719.3 L583.5 720.0 L587.6 720.2 L591.8 720.0 L595.9 719.7 L600.0 719.9 L604.7 719.7 L609.3 719.5 L614.0 719.3 L618.3 718.8 L622.7 717.6 L627.0 716.6 L631.0 717.0 L635.0 716.8 L639.0 716.9 L643.0 717.3 L647.0 717.5 L651.0 717.2 L655.0 717.6 L659.0 717.8 L663.0 718.0 L667.0 717.8 L671.1 718.2 L675.2 717.7 L679.4 718.2 L683.5 718.2 L687.6 718.4 L691.8 718.1 L695.9 717.9 L700.0 717.9 L704.4 718.3 L708.8 718.1 L713.1 718.4 L717.5 718.1 L721.9 718.6 L726.2 718.3 L730.6 718.2 L735.0 718.6" stroke="#b98a3a" stroke-width="0.9" fill="none" opacity="0.8"/><path d="M148.6 706.4h2.5M145.5 707.2h1.5M142.9 708.0h1.5M147.4 709.7h1.5M151.6 708.5h2.5M154.8 709.0h2M152.7 709.5h1.5M152.0 710.5h2M146.9 708.7h1.5M150.4 710.2h2M150.0 708.2h2M148.4 709.0h2M146.8 707.9h2.5M146.7 711.7h1.5M147.1 711.4h1.5M151.5 711.5h2M150.9 711.7h2M146.2 709.9h2.5M149.0 708.0h2.5M150.0 710.1h2.5M153.8 711.2h2M154.1 711.1h1.5M147.9 708.5h2.5M148.3 709.1h2M144.3 708.2h2.5M148.3 706.2h2M377.2 706.8h2M400.5 707.1h2M386.1 705.9h1.5M399.6 708.2h2.5M385.6 704.6h2M390.6 699.8h2.5M403.4 706.3h2.5M373.1 704.9h2.5M390.1 709.0h2M400.1 706.3h1M374.1 708.6h1M402.0 704.4h2M373.2 712.2h1.5M388.4 697.3h1.5M400.3 701.1h2M406.2 703.0h1M372.4 708.3h2M378.3 704.2h1M386.4 702.5h2.5M397.6 707.5h2.5M384.3 705.9h1M387.0 709.1h1.5M390.3 699.1h2.5M403.8 707.7h1.5M373.0 709.4h1M385.2 702.0h2M411.7 706.9h1M393.8 703.6h1M396.8 703.1h1.5M403.6 702.3h1.5M389.8 714.0h1.5M387.6 704.6h2.5M389.0 703.2h2.5M404.1 703.8h2.5M369.2 708.9h1.5M395.9 703.5h2M376.6 708.0h2.5M376.7 699.5h2M381.8 707.8h1M395.6 699.3h1M377.3 700.5h2M395.1 710.1h1M372.1 707.0h1M389.7 713.8h1.5M402.9 712.3h1M389.4 703.1h2.5M402.9 702.7h1.5M411.1 709.9h2.5M405.0 700.9h2.5M381.7 713.7h1.5M398.8 706.7h1.5M372.0 708.8h2M398.6 701.9h1M395.6 710.1h1.5M388.8 709.8h1.5M381.8 707.5h1.5M395.1 697.9h2.5M374.4 704.9h2.5M408.2 705.9h1.5M371.9 702.9h1.5M393.5 699.4h1.5M393.6 708.0h1.5M386.1 704.0h1M394.3 700.4h1M408.4 710.2h2M384.1 701.4h2.5M389.3 709.3h2.5M388.0 710.6h1.5M396.0 707.2h1M375.4 712.9h1M374.8 709.5h2.5M383.4 703.4h2.5M402.8 710.4h1.5M385.3 699.3h2.5M381.1 704.6h1M383.4 699.7h2M383.2 708.6h2.5M397.8 702.9h1M414.2 709.0h1M404.8 708.4h2M407.8 709.9h2.5M387.1 705.2h1M382.2 699.8h1.5M387.2 704.6h1.5M382.8 710.7h2M392.0 697.1h2M396.9 704.6h2.5M411.7 707.4h2.5M390.2 711.7h2M391.3 699.4h1M410.3 706.6h1M390.7 703.6h2.5M390.5 700.3h2M394.6 704.2h2M399.2 712.9h2.5M390.5 702.2h1M390.6 700.0h2.5M397.1 710.2h1.5M376.4 700.5h2.5M395.1 705.6h1.5M402.4 703.6h2M396.4 702.6h2.5M394.2 699.7h1.5M401.8 702.3h1M399.4 703.8h2.5M373.3 711.4h1M404.8 710.8h1.5M370.0 708.5h2M384.0 707.8h1.5M389.0 714.8h1M375.6 706.1h1M389.9 697.4h2.5M392.1 711.8h2M406.1 709.4h1.5M395.8 706.3h1.5M396.6 708.9h2M389.6 701.1h2.5M395.1 713.3h2.5M379.7 706.5h2.5M406.0 704.1h1.5M402.0 704.6h2.5M369.4 708.7h2.5M375.3 704.7h2M384.4 705.8h1M385.4 699.7h2.5M402.0 704.5h1.5M370.9 706.1h2.5M395.2 699.4h2.5M397.2 699.2h2.5M384.6 698.5h1.5M394.8 699.8h1.5M387.6 714.0h1.5M379.5 711.7h1M392.5 710.8h2.5M413.1 704.7h2M396.5 700.2h1.5M378.8 705.1h1.5M386.6 712.3h2M389.6 702.3h1.5M393.4 705.5h1.5M406.2 702.8h1M376.3 705.2h1M390.1 706.5h2.5M379.8 706.5h1M396.7 713.5h1M386.1 702.4h2M390.4 697.9h1M405.7 708.0h2.5M398.2 712.9h1M382.3 712.8h2M378.2 712.7h2M388.5 704.8h2.5M392.4 697.0h2M398.9 705.5h1.5M393.1 705.7h1M399.4 706.2h1M393.2 704.2h2.5M399.7 699.1h1M394.8 698.2h2M387.9 715.2h1M409.3 709.1h2.5M396.1 699.8h2M411.3 709.8h2.5M390.0 704.8h1M383.0 698.1h2M379.3 710.1h2M378.0 702.2h1.5M373.4 707.1h2M378.1 698.2h2M384.6 714.5h2M381.5 700.9h2M376.5 703.1h1M380.9 697.9h2.5M378.3 703.0h2.5M388.9 704.3h2M382.7 702.9h2M383.7 708.6h1.5M396.1 699.5h1M394.6 708.5h2M383.4 702.1h2.5M415.0 708.9h1.5M406.3 706.0h1M377.0 703.1h1M408.0 703.0h2.5M383.2 701.7h1M410.2 704.3h2.5M393.9 714.1h1M380.8 698.7h1.5M379.6 705.3h2.5M393.2 700.8h1.5M394.6 704.8h1.5M394.7 712.2h1M400.8 704.3h1.5M393.1 711.4h1M409.2 710.0h1M402.0 706.8h2M402.2 701.3h1M390.2 703.5h1.5M406.8 705.9h2M389.1 713.0h1M391.4 698.5h1M374.3 709.2h2.5M390.4 707.1h2M386.3 713.8h1.5M386.0 712.1h1.5M369.6 708.0h1M400.5 714.6h1M373.3 710.5h1.5M403.3 713.1h1.5M377.0 704.0h1.5M411.3 707.3h1M382.2 697.0h1.5M403.8 697.3h1.5M415.3 704.4h1.5M386.4 705.5h1M393.9 700.7h1.5M380.0 701.0h1.5M406.5 702.8h1M377.6 715.9h1.5M390.9 697.6h1M385.6 710.2h1M405.6 704.7h1.5M385.2 717.5h1.5M385.9 701.7h1M418.2 705.1h1.5M399.4 707.3h1.5M373.7 703.9h1.5M368.9 712.7h1M416.9 710.7h1M378.4 699.0h1M390.6 695.6h1M395.1 715.9h1M393.1 704.0h1.5M416.5 708.5h1M380.8 709.3h1M397.1 704.9h1.5M393.9 704.6h1M389.2 704.1h1M367.5 704.6h1.5M392.1 709.2h1M386.6 695.5h1M391.7 708.3h1.5M367.6 700.6h1.5M386.4 700.4h1M398.9 710.8h1.5M369.5 711.8h1.5M383.1 703.2h1M410.4 703.4h1.5M410.6 706.8h1M416.7 704.1h1.5M400.8 705.4h1.5M385.7 697.4h1.5M374.3 712.5h1M410.9 710.4h1M390.4 717.4h1.5M402.4 710.5h1M378.6 699.8h1M381.4 709.7h1.5M394.2 712.5h1M372.2 699.2h1M369.3 706.1h1.5M433.4 702.0h1.5M419.4 709.0h1M433.7 713.5h1.5M442.6 704.8h2.5M430.8 702.1h1.5M438.8 700.2h1.5M453.4 712.7h1.5M428.2 711.5h1M432.6 699.8h2.5M442.8 713.3h2.5M453.3 707.9h2.5M440.1 695.1h2.5M445.4 711.5h1.5M443.3 696.5h2M442.2 699.3h1.5M430.7 708.1h2.5M436.5 708.0h1.5M436.3 711.4h1.5M456.0 705.6h1.5M447.4 706.2h1.5M429.1 711.8h1M439.7 700.7h2M436.1 705.6h2M454.9 704.0h1M448.5 705.7h2.5M449.0 713.5h2.5M451.4 712.7h2M436.7 706.6h1.5M444.5 714.1h1.5M454.6 711.0h1M438.6 710.9h2.5M439.3 697.8h1.5M423.6 705.5h2.5M440.2 700.2h1M458.9 707.5h2M440.6 710.0h2M420.4 703.7h2M435.9 704.7h1.5M430.6 697.4h1.5M421.4 711.0h1.5M445.5 706.9h2M448.4 704.0h1.5M427.3 713.6h1.5M442.7 695.1h1M419.9 711.2h1M419.5 706.6h2.5M430.8 704.8h2.5M449.8 702.3h2.5M440.7 703.3h2.5M446.4 699.4h1.5M453.1 712.3h2.5M444.4 700.7h2M421.4 710.8h1M450.5 697.4h1M453.0 702.2h2.5M450.2 711.6h2.5M443.6 712.2h2.5M428.7 701.7h1.5M436.2 703.3h2M443.3 713.3h1.5M424.7 703.4h1.5M459.7 708.1h1.5M445.3 712.3h2.5M424.9 707.4h2.5M432.7 709.3h2M428.6 697.5h1M444.0 697.9h1M419.1 709.7h2.5M456.0 706.2h1.5M429.8 708.6h2.5M416.8 705.8h2.5M439.6 706.0h1.5M444.0 706.4h2.5M444.5 711.3h2M443.7 705.2h2M441.8 696.8h2M421.1 705.2h1.5M446.1 706.2h1M444.2 711.5h1.5M431.5 711.6h1.5M438.8 699.6h1M446.3 695.2h2M433.5 711.3h1.5M432.2 700.5h2M452.3 711.9h1.5M439.2 713.3h2M454.8 711.2h2M431.4 695.4h2.5M438.7 714.1h2.5M422.4 708.9h1M418.7 711.0h1.5M453.3 700.5h2.5M440.4 701.8h2.5M433.6 707.7h2M449.6 704.9h1M438.2 706.5h2M457.8 707.4h1M436.7 709.8h2.5M426.5 701.9h2M438.0 706.6h2M451.9 700.6h2.5M449.5 712.2h2M458.0 710.1h1M446.5 708.6h2M439.6 701.9h1M425.6 703.6h1.5M429.0 709.7h2.5M442.0 702.4h2M421.2 710.4h1M417.7 706.5h2M427.7 713.4h2M449.5 696.3h1M436.6 706.4h1.5M435.6 701.4h1M438.4 698.4h1.5M440.4 699.6h1.5M433.9 698.0h1M421.5 704.3h1M416.6 707.3h2M456.6 707.3h2.5M432.4 710.7h2.5M452.5 707.5h2.5M423.2 703.1h1.5M418.5 703.8h1M426.9 707.9h2.5M449.2 698.4h2M449.6 701.3h1.5M436.2 706.2h2M452.0 705.3h2.5M416.4 706.7h2M442.8 711.6h2M447.5 710.1h2.5M448.3 701.0h2M447.3 695.9h2M448.3 700.6h1.5M439.1 706.0h1.5M421.3 703.8h1.5M453.8 702.9h2M445.3 694.9h2.5M450.8 699.6h2.5M435.6 710.2h1.5M440.0 703.1h1M429.7 706.0h2M450.9 707.0h1M451.0 702.2h2M418.9 708.7h2M442.0 712.3h2M426.1 710.4h2M436.9 698.4h1M426.8 698.5h1M436.1 703.3h1M426.1 700.2h1.5M426.9 713.5h1M449.2 699.9h1M439.3 700.8h2.5M438.7 703.3h1M444.4 696.2h1.5M427.2 713.2h1M417.2 707.6h1M439.0 707.6h1.5M455.2 704.6h1.5M448.7 698.1h1M449.1 702.9h1M442.3 704.1h2.5M424.9 707.0h1.5M431.2 701.1h1.5M427.0 706.1h1.5M450.5 703.4h2M422.7 709.8h1M449.2 698.0h2M450.7 712.7h2.5M436.6 708.2h2.5M418.0 705.8h2.5M416.0 708.5h2M440.2 707.0h2M426.2 706.2h2M425.2 707.2h2.5M427.9 713.3h1M450.7 704.8h2.5M435.2 697.2h1M450.5 696.8h1.5M441.6 697.6h2M419.7 707.6h1M431.9 704.0h1.5M442.6 702.3h2.5M451.8 704.9h1.5M430.8 700.8h1M436.8 703.4h1M437.2 696.4h1M441.1 699.6h1.5M435.9 704.2h2M440.1 699.7h1.5M442.5 694.5h2M448.7 705.7h1.5M430.5 707.6h1M453.1 710.2h1M427.6 707.7h2M450.1 696.4h2M437.6 699.3h2.5M442.5 711.5h2.5M434.6 707.1h2M442.6 703.4h2.5M448.0 710.3h2.5M437.7 708.2h2.5M446.7 709.7h2.5M451.0 705.8h2M432.3 707.7h1.5M441.9 701.0h2M459.1 710.9h1M429.2 711.6h1M437.5 701.5h1M435.0 695.6h2M437.9 696.2h2.5M438.3 713.3h2.5M450.0 709.3h2.5M439.2 694.8h1M440.5 713.0h2.5M451.5 705.6h2.5M442.6 713.8h1.5M437.0 704.4h2M443.9 702.4h2.5M432.8 710.4h2.5M436.7 707.0h1.5M420.6 704.1h2.5M425.6 704.4h2.5M442.5 708.4h1.5M425.2 704.5h1M434.8 713.7h2M442.9 694.7h2M431.5 712.8h2.5M424.0 703.5h2M431.2 693.1h1.5M423.2 701.4h1.5M448.0 710.0h1.5M437.9 706.2h1M449.9 705.8h1M430.6 697.2h1M437.0 702.7h1.5M444.9 696.9h1.5M437.5 692.4h1.5M432.3 707.9h1.5M457.0 705.4h1M416.9 708.8h1M411.7 709.9h1.5M427.3 707.3h1.5M442.8 710.2h1M422.3 699.2h1M437.6 706.5h1.5M448.7 709.1h1.5M441.3 712.3h1M423.8 705.8h1.5M422.8 713.3h1M418.2 708.8h1M433.8 704.7h1.5M432.0 705.6h1M426.2 713.2h1M459.2 701.5h1.5M438.0 705.5h1M431.3 696.3h1M429.1 695.0h1M451.9 708.9h1M423.4 700.6h1M464.2 709.8h1M448.3 703.9h1M441.2 701.4h1.5M424.1 707.4h1M453.6 709.0h1M443.8 707.1h1.5M458.5 702.1h1M444.9 715.6h1.5M427.6 701.7h1M453.1 694.1h1M453.5 715.0h1M451.4 712.3h1M422.5 699.6h1.5M425.5 703.4h1.5M438.0 694.9h1.5M444.4 716.0h1M446.7 692.6h1M461.3 711.0h1.5M425.8 698.8h1.5M429.6 702.4h1.5M421.2 707.4h1M450.3 709.5h1.5M443.7 704.8h1M441.2 716.1h1.5M425.0 715.3h1M454.8 701.2h1M441.2 701.9h1M596.8 692.2h1M577.5 706.4h2.5M591.4 705.7h1.5M600.1 708.5h1.5M602.9 708.9h2M590.1 692.0h1M572.3 705.1h2.5M600.9 704.0h2M595.2 695.3h2.5M599.8 710.5h2.5M605.4 704.8h2.5M584.7 697.6h2.5M567.1 706.4h1.5M585.3 696.9h1.5M621.8 708.4h1M611.0 701.4h1M582.7 697.0h1M595.7 706.6h2M629.0 706.3h2M588.3 694.7h1M583.6 707.2h2M586.4 706.0h2.5M589.2 698.6h1M587.2 693.3h1.5M589.6 703.8h2.5M604.6 703.9h2.5M592.9 696.3h1.5M599.5 694.0h1.5M589.2 700.7h2M629.9 703.5h1.5M581.2 699.8h2.5M589.9 695.7h1.5M604.1 703.2h2M596.1 705.7h2M605.4 709.0h1.5M579.9 704.3h2M590.7 705.0h2.5M580.1 694.8h1.5M593.1 710.8h1M596.0 712.4h1M562.8 704.1h2.5M600.5 703.2h1.5M612.3 705.6h2M590.7 696.5h2M567.4 702.2h1.5M569.0 706.9h1M604.1 704.5h1.5M583.6 702.7h2.5M622.5 706.9h1.5M606.6 696.1h2.5M583.3 692.5h1M627.9 705.6h1M606.9 703.2h1.5M586.9 705.4h1M564.8 706.4h2M606.6 706.9h1.5M596.6 696.9h2.5M588.0 708.0h1M611.9 705.9h1.5M575.7 699.3h1.5M598.3 706.6h1.5M598.3 698.4h2.5M617.8 701.2h2.5M626.1 703.2h2M585.9 709.1h1M601.3 702.3h2M583.8 694.2h2M617.5 709.1h2M616.2 705.4h2.5M612.8 702.2h2.5M583.1 706.6h1M598.9 697.4h1.5M603.6 693.3h1.5M626.4 706.7h2M591.6 711.9h1.5M598.5 709.7h1M575.6 700.2h1.5M624.2 702.2h1M602.3 703.0h2.5M572.2 704.6h2M590.9 692.7h2.5M614.2 710.5h1M626.1 703.5h1M578.4 696.6h1M583.1 693.5h2.5M597.5 710.9h1M600.5 698.5h2.5M611.9 699.9h2.5M601.4 696.6h1M584.6 696.4h1.5M603.2 712.7h1M573.7 707.0h2M596.7 701.4h1.5M603.2 706.4h1.5M623.0 705.0h1M558.6 704.8h2M595.7 705.9h2M599.7 696.1h1.5M618.7 699.9h2M617.7 709.9h2.5M605.1 697.0h2M591.2 709.7h1.5M616.8 707.6h1M603.5 696.8h2.5M586.2 705.5h1M576.8 703.3h1M595.7 710.9h2.5M575.5 703.3h2.5M596.2 694.4h2.5M571.6 702.9h1M582.9 692.7h2M573.0 704.8h1M615.0 705.4h1M577.4 704.4h1M586.8 692.7h2M579.2 706.5h2M602.2 714.0h2M591.5 710.8h1M627.2 705.0h1M583.3 707.6h1.5M624.2 701.6h1.5M597.8 713.3h2.5M618.7 699.2h2M593.4 703.4h2M602.4 711.9h1M578.7 698.6h2.5M598.3 711.7h2.5M606.6 704.8h2M594.1 711.1h1M628.0 704.7h2M607.4 703.9h2M611.5 710.1h1M618.2 704.9h2M565.4 703.4h1.5M586.7 699.6h2.5M618.1 701.0h2M583.0 700.5h2M577.9 706.1h2M610.1 709.2h2.5M578.7 697.9h1.5M601.9 692.6h2M602.1 706.5h1M584.7 710.0h1M595.5 710.6h2.5M578.5 706.4h1M612.5 699.5h2.5M593.0 710.4h1M588.0 708.9h1M600.9 699.4h2M617.6 701.1h2M606.1 703.7h1.5M571.1 702.9h1.5M594.4 708.7h1M592.3 703.9h1M583.4 700.3h1M574.3 706.2h2M611.4 699.6h2.5M615.3 710.0h1M584.8 699.8h2M598.6 709.7h2.5M602.6 710.4h2M599.4 696.4h1M609.9 708.5h1M613.8 696.9h2M575.7 700.5h2.5M625.7 707.2h2M596.0 711.9h2.5M583.0 706.4h1.5M589.7 711.1h1.5M608.7 713.5h2.5M598.1 710.6h1.5M627.1 705.5h1M588.7 705.2h1M582.6 699.6h2.5M590.7 705.4h2M595.6 695.9h2.5M604.7 696.4h2.5M591.4 699.7h2.5M606.6 710.5h1.5M596.9 704.6h2M582.1 708.4h2M604.3 704.6h1M603.0 699.8h2M628.1 702.1h1M595.3 706.5h2M597.0 696.0h1M611.7 712.7h1.5M611.0 701.3h2.5M608.7 708.7h2M585.4 697.0h2M582.1 704.2h2.5M588.4 694.9h2M588.8 692.5h2M600.1 703.2h2.5M606.1 702.7h2.5M577.0 702.5h2.5M597.7 707.8h2M577.7 700.8h1.5M609.3 697.4h2M575.9 698.6h1M565.2 704.4h2M591.4 692.8h2M624.7 705.3h2.5M601.3 706.8h1.5M563.7 704.5h1M606.2 707.9h2.5M586.1 700.8h2M599.3 709.1h2.5M608.6 696.0h2.5M564.4 703.1h1M597.9 693.3h2M592.6 707.1h1.5M617.5 703.3h1.5M603.9 704.8h2M597.3 693.5h1.5M579.4 699.2h1M604.0 712.7h1.5M623.6 705.0h2.5M590.2 693.9h1.5M585.8 692.0h1M573.8 706.7h1.5M609.7 707.4h1.5M627.9 705.6h1M575.8 701.6h2M581.0 693.2h1M607.6 701.7h2.5M585.4 695.8h1.5M596.3 701.5h2M582.5 699.1h2M606.0 702.8h2M586.8 692.7h2.5M602.6 701.4h2M614.4 696.7h1.5M602.7 708.3h2.5M599.3 706.6h2M606.1 708.2h1.5M605.7 700.8h2M611.1 703.2h2.5M601.6 700.4h1M579.0 707.2h2M588.2 699.9h1M570.9 704.8h1M609.7 697.6h1M626.2 706.5h1M625.9 705.4h2.5M614.1 711.8h1.5M564.1 705.7h1M594.3 710.3h2.5M595.7 702.8h2.5M606.4 695.2h2M623.8 704.3h2.5M565.4 702.8h2M625.5 705.8h1.5M586.3 692.3h2M582.0 708.8h2M617.6 699.1h2.5M600.8 694.8h1M582.2 693.3h1.5M596.1 711.7h1.5M604.4 698.7h1M608.6 695.0h1.5M591.8 707.0h2M579.0 700.9h1.5M570.5 704.2h1.5M594.3 697.4h2.5M610.8 698.7h1.5M589.7 692.9h2M612.8 702.1h2M607.9 708.3h2.5M623.3 705.1h2M574.8 701.3h2M588.5 703.5h2M611.4 700.4h1.5M605.1 704.5h1M622.5 706.3h1M607.5 698.0h2.5M584.7 698.7h1.5M606.2 693.5h1.5M589.0 709.0h1M593.5 711.5h2.5M608.7 694.4h1M595.5 694.3h1.5M571.7 702.9h2M580.2 697.7h2M596.9 698.9h2.5M606.7 707.6h2.5M578.0 701.1h1M596.0 698.5h2M583.7 704.9h1M605.4 713.0h1M608.3 702.7h1.5M593.3 692.2h2.5M567.1 704.6h2.5M571.5 705.9h2M572.1 703.0h2M615.5 697.6h2.5M595.2 695.2h2M575.9 705.2h1.5M615.5 707.3h1.5M601.5 705.0h1M579.7 703.4h2M599.5 702.0h1.5M604.4 701.7h1.5M600.5 713.4h2M610.1 696.2h1M582.4 701.8h2M580.3 694.3h1.5M583.5 705.2h2.5M627.6 704.1h1.5M602.2 697.1h2.5M604.5 697.1h1M588.1 699.3h1M577.1 702.4h2M608.5 695.7h1M603.1 702.2h1M560.8 707.1h1M592.9 704.3h1M586.8 701.5h1M627.5 705.0h1.5M606.0 704.0h1.5M631.9 703.3h1M607.7 701.0h1.5M618.1 701.1h1.5M615.2 701.1h1M568.2 706.3h1.5M595.0 704.1h1M579.9 695.7h1.5M599.7 709.1h1.5M594.8 697.2h1.5M599.3 707.1h1M618.5 707.4h1M593.9 710.2h1M578.0 706.0h1.5M607.6 715.1h1M590.5 698.0h1M569.6 702.5h1.5M598.1 689.4h1.5M588.1 697.4h1.5M624.2 704.9h1M616.1 709.4h1M596.7 696.2h1.5M584.1 698.4h1.5M572.8 707.3h1M592.0 695.8h1.5M605.7 715.9h1M622.3 699.4h1M611.1 714.6h1.5M631.3 703.9h1.5M601.9 716.2h1.5M601.7 700.4h1M596.4 705.4h1M574.1 698.7h1.5M618.7 708.4h1.5M574.2 702.0h1M610.8 715.6h1.5M628.3 701.5h1M596.7 703.2h1M610.8 714.8h1.5M585.8 709.7h1M599.2 713.5h1.5M612.7 695.9h1.5M584.5 695.8h1M618.2 701.9h1M586.1 697.3h1M621.1 702.6h1M625.3 702.7h1M568.0 702.7h1.5M596.0 694.3h1.5M589.6 711.6h1M586.6 710.0h1M619.2 704.7h1M596.0 697.2h1M601.3 703.9h1M587.6 706.8h1M590.5 714.7h1M597.6 712.0h1M591.7 695.0h1.5M624.4 699.1h1M614.0 699.9h1M614.5 702.6h1.5M567.4 707.3h1.5M588.4 692.9h1.5M582.4 708.5h1.5M568.2 703.9h1.5M570.7 707.3h1.5M592.6 691.3h1" stroke="#5a1fa0" stroke-width="1.5" fill="none"/><path d="M373.1 706.1h1M409.0 702.5h2M395.1 702.3h2.5M387.5 702.8h2M383.8 706.2h1M392.4 713.3h2.5M390.3 714.6h2.5M377.4 711.0h2.5M373.8 704.4h2M399.5 700.5h1M396.0 704.8h2M379.5 704.0h1M401.5 711.0h2M399.6 709.1h2M384.9 710.7h1M405.8 703.7h1.5M413.8 709.3h2M402.4 700.7h2M405.4 701.7h1.5M386.0 701.5h2M393.2 697.6h1M372.4 708.7h1.5M389.4 712.4h1.5M406.9 707.9h2M382.7 705.2h2M374.6 701.3h1.5M376.2 699.3h1.5M379.4 705.7h2M405.6 702.4h1.5M385.1 702.6h2.5M383.2 699.4h2.5M375.1 707.0h1M391.0 704.7h2.5M389.4 708.7h2.5M371.4 708.9h2M397.7 700.2h1M388.6 713.3h2.5M387.9 705.0h2.5M373.4 707.4h2.5M410.0 704.4h1.5M389.3 698.8h2.5M397.2 713.6h1M388.6 712.4h1.5M413.8 708.6h1M393.8 698.0h1M391.3 712.7h1.5M388.6 709.5h2.5M408.4 704.7h2M369.5 707.8h2M392.2 703.2h2.5M404.3 705.1h1M401.2 707.6h2.5M390.0 697.2h2M401.6 710.4h1.5M376.9 703.3h1.5M390.6 704.0h2M377.2 709.4h1.5M409.5 703.1h1M372.4 708.2h2M376.6 707.4h2M386.8 708.7h1.5M406.8 707.4h2.5M383.8 705.9h1.5M383.7 702.7h2.5M410.9 704.7h1M412.5 707.6h1M400.4 703.2h2M407.3 703.6h1M383.8 702.2h1M404.2 711.8h1M387.3 710.5h1M378.3 709.9h1.5M399.2 699.1h2M403.5 702.6h1.5M414.8 708.2h2M384.2 701.7h2M376.7 702.9h1.5M408.8 708.2h1.5M377.3 698.0h1.5M381.4 710.3h2M405.2 701.5h1M393.2 712.0h2M408.3 707.7h2.5M401.9 708.8h1M385.0 706.0h1M382.0 699.4h1M381.9 710.3h2.5M376.0 706.9h1.5M378.0 702.0h2M376.4 701.6h1.5M386.8 699.2h2.5M409.1 705.0h1M392.9 706.0h2M401.6 710.8h1M386.6 702.8h2M393.0 709.5h1M409.8 706.1h2M371.0 702.9h1.5M391.1 707.0h2.5M415.2 706.6h1M396.0 710.0h1M398.3 706.9h1M404.9 709.9h1.5M398.5 711.4h2.5M388.0 711.1h1.5M394.0 698.9h1M374.2 702.4h2.5M391.9 706.6h2.5M407.5 704.9h1M373.1 710.5h1M397.8 698.3h2.5M386.4 698.6h2.5M379.2 702.5h2.5M374.1 710.8h2.5M411.9 705.3h2M373.3 701.9h2M402.9 706.0h2M397.6 699.3h1M373.6 704.3h1M414.0 706.4h1.5M385.7 701.3h2.5M414.5 708.1h1M371.1 710.2h2M398.0 703.9h2.5M392.4 710.6h1.5M378.6 706.9h2.5M388.2 705.0h1M405.7 709.2h2M382.4 710.5h1.5M388.2 698.2h1M400.3 711.9h2M409.7 707.2h2.5M404.3 708.9h1.5M383.3 704.2h1.5M400.2 711.5h2.5M377.8 712.3h2M371.3 703.3h2.5M410.0 704.1h1M387.2 705.5h1M379.0 698.8h2.5M407.3 707.7h2.5M415.4 706.9h2M372.3 707.8h1.5M401.1 708.0h1M404.8 710.6h2.5M387.9 710.8h2M406.3 701.7h1.5M381.4 704.2h2.5M399.8 704.8h1.5M374.6 707.1h1M407.9 708.4h1.5M391.5 697.2h1.5M400.6 700.7h2.5M391.3 706.5h1.5M377.1 713.3h1.5M386.7 714.1h2.5M412.1 703.7h1.5M391.1 712.1h2M406.5 702.2h2M401.7 700.0h2.5M399.7 711.5h2.5M369.8 706.2h2M403.0 700.6h1M402.5 700.7h2M376.5 705.6h1.5M379.9 705.9h2.5M407.0 704.8h2.5M378.3 710.9h1.5M398.8 706.8h1M378.4 711.7h1.5M384.9 697.8h2.5M378.7 700.6h1.5M404.4 704.8h2M399.6 712.4h1M408.2 710.7h1M397.8 700.5h2M378.4 711.9h1.5M397.3 703.0h2.5M407.2 710.5h1.5M380.5 710.2h2.5M373.9 700.0h2.5M404.2 706.1h2.5M386.1 702.5h2.5M407.6 702.5h1M377.9 711.3h2.5M396.0 705.5h1M410.6 705.8h1.5M410.9 707.2h1M400.9 703.8h2.5M372.7 704.4h1M398.4 700.3h1.5M383.3 704.4h2.5M382.6 713.5h2M382.1 711.2h1M391.2 702.3h2.5M408.0 707.6h1.5M379.8 707.7h1M376.3 706.0h1M409.2 704.2h2M392.6 700.4h1M395.4 696.8h1M397.9 700.5h2.5M378.6 713.2h1M374.7 701.4h1.5M386.7 714.5h1.5M371.9 705.1h2.5M370.2 706.6h1.5M372.1 705.3h1M405.6 706.3h2.5M392.5 705.2h2.5M408.1 703.8h1.5M395.8 700.4h1.5M372.5 707.5h2M387.5 705.7h2M395.7 709.2h1.5M398.9 710.7h1.5M386.1 702.5h1M397.8 710.8h1M385.5 706.3h1M389.5 709.3h1M379.2 709.7h2M403.8 706.7h1M392.6 707.4h1.5M410.7 706.2h1.5M400.4 708.2h2.5M398.5 699.5h2.5M388.7 697.4h1.5M378.7 710.5h1M397.0 709.1h2.5M407.6 707.6h2M400.3 711.9h2M408.9 704.2h2M394.6 701.1h2M399.8 700.1h1M389.2 714.1h2.5M379.7 711.4h1.5M397.4 697.6h1.5M395.9 713.4h1.5M387.2 706.3h1.5M407.1 704.9h1.5M393.3 707.1h2.5M395.2 710.4h1.5M395.9 708.2h1.5M372.5 703.1h1.5M374.9 701.7h1M401.9 704.7h2M394.1 698.0h2M384.4 704.7h2.5M371.0 703.0h1M379.4 708.9h1.5M399.0 702.0h2M374.1 706.8h2M415.5 706.2h1M379.2 708.5h2M406.5 703.8h2M396.8 708.0h1.5M390.0 699.3h1.5M373.7 709.6h1.5M389.4 708.3h1.5M393.6 704.7h1.5M371.9 706.4h1.5M397.3 699.2h2M375.2 706.4h1.5M400.8 700.0h1M383.9 704.6h1M387.6 698.5h1M373.1 697.4h1.5M389.4 700.7h1.5M378.9 708.2h1M390.5 705.1h1.5M395.5 712.0h1.5M397.6 697.4h1M384.1 700.9h1M372.8 707.1h1M401.8 714.6h1M386.4 703.0h1.5M393.1 700.6h1M372.8 700.5h1.5M378.4 715.3h1M374.7 711.7h1.5M411.3 706.4h1.5M385.7 700.9h1M374.7 698.8h1.5M409.8 707.0h1.5M369.6 702.0h1M415.9 709.1h1M374.9 698.5h1M383.5 713.4h1.5M396.8 702.9h1.5M410.8 711.1h1.5M373.1 709.3h1M402.6 704.2h1.5M373.0 703.8h1.5M384.0 701.0h1.5M406.5 711.6h1.5M382.8 703.3h1.5M387.2 702.0h1M382.3 695.7h1.5M407.1 709.0h1.5M400.2 702.0h1M401.7 712.5h1.5M402.9 703.6h1M432.8 695.0h1M434.7 695.4h1M430.0 710.1h2M432.9 701.3h2.5M452.9 700.1h2M438.7 704.6h2.5M453.0 711.9h2.5M460.0 708.7h2M427.9 704.7h1.5M436.7 706.4h1M441.9 696.2h2M433.3 702.0h2.5M433.4 710.6h1.5M446.7 695.3h1.5M428.1 704.8h2.5M432.1 712.9h2.5M433.6 701.1h1M442.8 706.9h1M450.5 702.9h1.5M434.5 699.1h1.5M418.3 710.1h2M428.0 712.1h2M442.9 707.5h2.5M438.8 712.2h1M438.6 695.7h1.5M440.2 707.5h2M443.7 698.2h1M448.2 710.8h2.5M424.3 708.2h2M440.6 705.8h2M434.9 696.4h1M452.5 708.9h2.5M447.1 713.5h2M415.8 707.8h2M419.2 705.6h1.5M436.6 712.9h2.5M431.8 695.0h1.5M449.2 708.0h1.5M429.2 698.4h2M424.7 704.2h1M440.4 712.7h1M441.2 703.7h1M430.7 704.7h1.5M426.7 707.2h1.5M443.1 706.9h1.5M453.5 701.1h2M436.1 705.9h1.5M446.8 699.1h1.5M431.1 700.9h1M443.4 707.3h2M448.3 706.5h2M423.8 705.2h2.5M437.5 706.5h2M451.0 703.9h1.5M432.7 713.1h1M422.1 705.8h1M427.3 710.1h1M441.7 710.9h2M448.7 711.0h2M439.3 693.9h1.5M448.2 702.8h2M437.7 694.2h1.5M448.8 702.8h2.5M435.3 710.7h1M445.2 695.6h2M423.3 703.7h2M437.8 713.9h1.5M430.5 703.5h2.5M456.6 703.4h1.5M433.9 711.1h1M434.4 695.3h2.5M442.7 694.2h2M439.1 705.3h1.5M430.6 695.3h2M427.1 710.7h1.5M446.7 702.0h1.5M424.0 702.1h2.5M445.8 713.3h1.5M453.8 710.4h1.5M441.9 696.7h2M453.0 705.7h2M451.0 708.2h2.5M416.8 709.7h2.5M430.6 709.6h1.5M441.0 707.6h1.5M438.4 699.0h1.5M443.0 711.6h2M439.4 706.8h2M421.1 702.7h2M456.8 709.9h2M432.9 705.6h2.5M434.1 710.4h1M422.6 707.1h2M444.2 693.9h1M424.3 711.5h1.5M428.4 703.9h1M428.3 703.3h2M449.9 701.6h2.5M452.0 697.4h2M432.6 714.1h2.5M428.0 697.5h2M432.7 710.4h1M438.0 707.1h2M439.6 713.6h2M442.2 700.5h1M438.0 697.4h1M449.2 708.6h1M448.6 699.6h1M423.2 702.4h1.5M440.5 706.9h1.5M448.9 707.2h1M445.0 697.3h2M449.7 706.8h1M431.2 707.7h1.5M424.7 702.2h1M448.9 696.6h1M447.8 695.3h2M444.5 699.7h1M444.0 701.7h1M443.5 700.9h2M450.3 705.9h1M448.5 696.1h2M436.2 700.5h2M447.9 709.5h2M435.2 713.4h1M424.9 711.6h2M447.0 703.0h1M426.6 710.6h1M458.6 708.0h2.5M428.5 697.5h1.5M445.1 697.4h2M445.9 699.4h2.5M444.4 714.0h1.5M435.4 695.8h2.5M447.4 705.0h2.5M439.3 713.9h2.5M436.8 707.6h2.5M436.5 706.1h1.5M418.1 711.0h2.5M424.0 709.4h1M452.6 705.6h1.5M447.9 709.7h1.5M438.0 701.1h2M446.5 705.7h1M454.7 707.5h2M449.1 703.9h2.5M436.2 698.9h2.5M446.6 702.1h2M448.5 700.6h1M433.3 711.3h1M424.4 705.0h1M458.0 705.7h2.5M430.8 712.3h1.5M439.8 705.7h1.5M417.2 706.1h1M433.6 703.3h1.5M446.7 705.4h2M442.4 713.0h1.5M430.4 712.8h2M418.8 709.3h2.5M459.9 707.4h1M424.5 703.6h2.5M453.7 711.7h2.5M420.7 706.4h2.5M454.8 711.1h1.5M439.9 713.5h2.5M450.1 707.0h2M428.2 708.1h2M438.0 707.0h2M444.0 703.0h1M444.3 713.9h2.5M448.5 714.1h1M433.1 695.8h1M446.6 713.9h2M443.3 711.8h1.5M444.1 709.9h1.5M428.1 701.3h2.5M447.5 708.6h1M426.6 706.3h1M434.1 708.8h1M428.1 705.2h2M417.7 706.7h1M437.7 711.1h1.5M444.9 704.8h1M452.6 703.4h2.5M434.8 705.1h2M453.9 710.5h1.5M421.3 710.8h1.5M423.4 711.2h2M450.7 713.5h1.5M435.5 695.4h1M433.7 702.6h1M431.6 696.3h1M437.9 699.9h2.5M453.9 699.9h2M422.4 706.5h2M439.3 713.3h2M437.7 699.7h2.5M456.6 711.7h2.5M440.7 708.6h1M452.7 707.8h2M418.2 708.7h2M440.1 698.8h2.5M418.0 710.9h1.5M421.7 704.9h2M453.0 703.5h1M444.0 711.0h1.5M434.6 708.4h1.5M437.8 714.1h1M451.5 707.6h1M421.7 703.9h2M440.3 714.2h2.5M435.5 710.5h2M438.6 712.9h1.5M435.8 703.6h2.5M450.6 705.7h2M440.6 695.6h1.5M427.6 710.7h1.5M453.6 702.1h1M454.5 703.6h1M452.7 706.8h2M437.3 708.7h1.5M443.7 704.6h2M450.5 696.4h2M442.4 709.6h1.5M448.0 708.1h2.5M439.9 696.8h2M437.0 697.0h2M448.0 699.5h2M435.6 699.3h2.5M447.3 699.1h2.5M431.5 695.9h1.5M425.4 710.6h1M428.6 703.7h2.5M457.8 708.6h2M443.3 697.4h1.5M435.4 709.1h1M434.6 699.2h1M454.5 705.7h1M430.4 695.5h2M428.1 712.4h1.5M430.1 706.0h2M454.8 704.7h2M455.1 701.9h2.5M439.3 705.4h1.5M434.3 705.4h2.5M434.1 703.0h2M428.3 700.4h1M451.9 711.1h1M422.5 704.2h1M444.2 700.5h1M434.4 698.3h1M441.2 694.3h1M444.8 708.7h2M445.6 699.3h1.5M417.4 708.4h2.5M429.7 710.7h2.5M454.0 710.2h2.5M455.6 704.0h1M445.5 708.0h2M446.7 705.3h2.5M445.6 695.3h2.5M440.5 712.5h1.5M441.3 702.4h1.5M448.6 713.9h2M425.0 700.5h1.5M443.9 707.1h2M447.1 712.0h2.5M429.2 709.1h2.5M450.1 699.7h1.5M438.5 701.6h2.5M434.8 703.8h1.5M445.9 703.9h2.5M423.6 711.8h2.5M445.1 710.8h1M417.8 706.5h1M438.1 695.3h1.5M420.0 700.6h1M432.1 709.0h1.5M419.2 712.9h1.5M437.5 710.3h1M456.5 704.7h1M456.4 709.7h1.5M443.1 690.3h1M445.6 692.4h1.5M432.3 700.0h1.5M451.2 701.0h1M462.0 710.1h1.5M442.5 710.5h1M459.2 713.1h1M455.3 712.5h1M431.9 712.6h1M438.0 693.4h1.5M459.7 709.1h1M445.2 710.5h1.5M437.8 710.0h1M442.2 694.1h1.5M420.8 709.9h1M438.8 693.0h1M433.1 707.8h1.5M428.4 692.3h1.5M436.4 713.7h1.5M434.9 702.9h1.5M425.6 703.2h1M426.2 696.0h1.5M427.1 707.9h1.5M450.5 705.5h1.5M423.2 712.3h1.5M446.5 700.4h1.5M439.5 701.7h1M422.5 700.5h1M451.0 704.4h1M443.9 693.2h1M439.4 703.5h1M459.3 700.7h1M459.5 703.6h1.5M431.3 706.5h1M419.9 713.9h1M441.9 706.5h1M445.2 715.3h1M443.6 693.2h1.5M463.2 709.8h1M595.9 701.6h2M609.8 704.3h1.5M605.7 704.0h1M607.1 697.2h2.5M577.2 699.6h2.5M572.1 707.1h1.5M593.0 706.4h1.5M583.5 698.0h2M573.2 705.6h2M562.2 704.6h1M603.8 710.2h1M606.4 705.2h1.5M613.4 696.2h2M616.2 700.1h1M594.4 711.9h2M617.0 698.7h2.5M584.8 708.1h2.5M630.7 704.5h1.5M610.0 710.1h2M570.7 704.7h2.5M618.5 700.2h2.5M566.4 705.1h1.5M577.9 702.9h2M593.0 702.2h1M602.9 701.3h1M581.6 697.4h1.5M586.3 707.6h1.5M614.8 701.0h1M606.5 711.7h1M583.7 707.9h2M576.0 698.7h1M600.0 697.5h2M565.8 702.6h1M589.6 705.8h2M592.4 710.7h2M603.7 702.0h2M601.5 698.3h2M581.6 697.8h2.5M611.5 709.7h1.5M592.9 703.2h2.5M587.3 705.8h2M594.4 707.5h2M598.9 712.6h2.5M617.4 703.4h2M570.7 706.8h1M606.8 700.4h2M603.1 697.9h1M579.8 695.2h1M621.5 707.7h1.5M593.7 706.6h2.5M606.8 697.4h2M581.9 695.5h1.5M586.8 692.4h1.5M591.5 695.2h2M594.4 702.9h2.5M600.8 703.9h2M591.5 699.3h1.5M630.5 705.8h1M584.0 708.7h2M622.3 707.1h2.5M567.0 705.3h1.5M607.1 709.2h2M584.5 694.6h1.5M619.5 705.7h2.5M586.6 709.8h2.5M580.5 705.5h2.5M598.1 694.6h2.5M591.0 712.2h2M596.6 711.3h1.5M598.8 696.9h2.5M589.4 710.2h1.5M603.9 710.9h2M605.8 705.5h2M622.1 706.9h1M562.3 704.6h1.5M593.1 701.2h2M617.3 707.7h2M601.6 700.5h1M605.7 705.5h1M576.3 703.9h1.5M582.2 694.2h1.5M594.1 710.4h1M592.2 694.9h1.5M607.2 700.8h1M601.0 699.6h1.5M608.0 712.7h2M573.4 707.2h1.5M590.4 707.1h1.5M613.6 705.0h1.5M588.2 706.3h1.5M596.8 696.3h1.5M579.1 701.6h2M613.1 696.4h2.5M575.7 697.8h2.5M590.2 707.7h1M600.4 713.9h2M565.3 703.2h1.5M604.9 699.4h2M584.6 697.4h2.5M597.8 697.8h1M574.5 706.9h2M586.0 699.6h1M576.0 699.6h1.5M573.5 705.5h2.5M574.7 706.4h2.5M600.3 701.4h1.5M616.1 701.9h2.5M614.5 708.6h1.5M623.8 707.2h2M620.4 699.0h2M614.0 711.6h1M575.6 706.3h1M574.2 704.2h1M613.9 704.2h2M586.7 699.3h2M593.6 703.2h1M591.8 700.8h1.5M605.2 695.9h2M588.1 711.5h2.5M586.2 710.5h1.5M602.5 697.7h1M579.3 703.9h2.5M560.9 704.2h2.5M589.6 706.5h1.5M596.0 698.6h1M597.8 712.3h2M601.6 713.8h2.5M622.4 701.2h2.5M620.1 707.3h1M601.7 696.7h2M611.6 705.2h2.5M577.5 698.8h2.5M591.3 702.4h2.5M577.5 697.0h1M596.3 709.7h2.5M608.1 710.1h1M601.5 710.0h1M611.3 709.9h2.5M603.7 706.9h2M595.1 700.2h2.5M588.9 701.5h2M615.4 705.7h1.5M587.9 694.7h2M599.4 704.6h2.5M598.4 692.9h1M583.9 702.7h2.5M603.9 699.8h1M575.1 705.2h2.5M614.2 710.2h1M605.9 699.9h1.5M608.8 700.0h2M614.9 707.2h2M622.7 706.9h2.5M593.5 703.4h2.5M609.0 698.2h2.5M573.7 703.5h1M591.1 700.5h2.5M600.6 704.3h1M590.1 693.5h1.5M609.8 707.1h2M591.3 707.4h2M589.9 710.1h2.5M596.7 708.7h1M584.3 701.9h2M600.6 700.1h1M561.6 704.2h2.5M594.4 711.0h2.5M604.1 694.1h1.5M611.9 711.8h1M620.1 705.2h2.5M615.2 701.7h2M607.5 700.6h1M575.4 702.3h1M629.1 704.1h1.5M600.1 708.8h1M576.9 704.8h1M598.8 695.1h2.5M578.3 706.1h1.5M615.4 697.3h1M575.5 703.0h1M584.8 707.3h1.5M563.0 703.6h2M598.8 708.4h2M585.9 702.2h2.5M593.2 707.1h1.5M575.9 704.5h1.5M616.7 710.5h1.5M576.6 703.9h1M575.2 704.2h2M617.2 707.1h2.5M586.3 692.1h1M589.0 693.3h2.5M577.1 697.5h1.5M617.4 697.8h2M590.1 706.9h1M629.3 706.0h1M606.0 713.6h2.5M582.3 705.4h1.5M568.6 702.4h2M589.5 694.2h2M591.1 709.5h2.5M607.5 706.6h1M579.7 696.2h1.5M598.0 702.0h1.5M618.2 707.2h1M604.0 699.4h1.5M612.2 700.1h1M610.3 708.7h1M596.2 709.7h1M598.0 702.9h1M609.6 697.5h1.5M601.2 707.6h1.5M610.9 701.8h2.5M576.6 701.5h1M585.4 697.8h1.5M586.4 710.4h2M592.1 708.8h1.5M598.3 708.2h2.5M584.8 706.9h1.5M604.5 697.0h2.5M620.5 704.4h2M615.2 702.9h2.5M585.1 702.2h2.5M596.4 709.0h1.5M604.7 705.6h1M581.8 694.5h1M587.5 704.8h2.5M580.5 706.8h1.5M599.5 705.2h1.5M627.8 703.2h2M601.1 700.3h1M607.3 705.7h1M604.4 709.7h1M587.6 699.3h2.5M580.6 699.4h2M624.1 706.2h2.5M605.0 699.6h1M581.3 704.0h1.5M606.5 695.8h2.5M579.6 694.7h1M590.6 701.9h2.5M588.4 693.6h1M584.5 705.4h2M593.9 694.9h1M603.9 705.5h1.5M594.8 699.7h2.5M582.9 692.8h2M608.6 706.7h2.5M577.6 707.1h2.5M595.8 695.0h2.5M610.7 705.9h1.5M573.5 705.1h2M587.3 707.5h2M603.4 704.9h1.5M579.7 705.5h2M572.2 704.8h1M596.6 710.8h2M617.8 698.4h1M584.0 705.7h1.5M578.1 706.0h2.5M587.7 710.1h1.5M584.7 692.4h1M617.9 707.0h1M579.9 695.9h2.5M614.4 706.0h2.5M588.8 699.1h2M616.8 701.9h2.5M590.7 702.3h2M611.5 697.8h1.5M602.9 705.9h1.5M576.2 700.2h2.5M599.3 710.6h2.5M607.9 713.2h1M602.7 706.4h2.5M580.7 705.0h1.5M566.3 702.2h2.5M601.8 699.5h2M617.9 709.8h1.5M594.6 704.8h2.5M605.7 703.5h2M612.0 706.4h2.5M609.2 701.5h2M614.2 700.5h1M603.0 706.0h2M611.7 696.5h1M575.7 705.5h1.5M589.8 706.3h1.5M602.4 692.5h2M588.4 710.1h2.5M576.1 707.0h1.5M581.9 708.1h2.5M585.2 707.9h2.5M613.9 701.5h1.5M605.4 707.9h1M587.6 703.7h2.5M594.3 699.5h1.5M599.2 703.2h2.5M579.1 697.9h2M589.8 694.6h2.5M600.9 700.4h1.5M615.0 708.3h1M584.3 704.4h2.5M594.7 703.2h2M597.2 709.6h1.5M581.4 701.5h1.5M593.9 710.3h2M609.2 696.7h1M620.8 708.7h1.5M621.6 707.4h1M614.2 703.5h2M591.3 705.6h1M596.7 708.7h2.5M585.5 696.2h1.5M625.2 706.0h2.5M605.3 706.9h1.5M626.6 705.3h2.5M570.0 706.4h1.5M567.5 704.2h2.5M584.4 697.5h1.5M591.5 702.4h2.5M585.8 694.2h1M581.0 695.3h2.5M620.8 706.4h1M567.1 705.8h2M619.4 704.5h2M616.7 700.9h1M609.3 702.0h1M580.3 702.7h1M571.8 705.6h1M599.2 694.1h2.5M597.9 694.3h1M623.9 707.2h2.5M592.5 701.2h1.5M610.8 700.8h2M599.0 708.3h1.5M601.5 702.2h2.5M591.4 695.5h2.5M599.8 693.5h1M616.1 702.4h2M626.5 703.6h2.5M588.2 701.5h1.5M600.0 696.6h2M600.0 693.6h2.5M595.5 703.1h1.5M596.5 710.0h1.5M619.1 702.3h2.5M584.6 707.8h1M587.3 710.3h1.5M595.9 706.4h1M615.6 699.7h1M596.2 698.1h2M573.6 707.0h1.5M586.7 706.5h2.5M627.0 706.7h2M625.6 706.8h2M608.4 709.4h1.5M581.7 694.2h1.5M619.3 706.6h1M586.4 692.3h1.5M605.8 696.1h1M593.5 711.7h2.5M612.2 706.0h1M627.0 702.0h1M613.3 696.0h1.5M613.7 703.3h1.5M605.2 707.8h1M566.8 702.7h2.5M589.8 707.7h2M619.6 706.3h2M588.8 696.9h1.5M580.5 700.7h1.5M605.2 708.5h2M574.2 702.4h1M603.0 701.8h1M598.7 700.8h1M598.2 697.1h1M602.9 712.9h1.5M584.6 705.5h1M614.7 700.9h2M594.5 712.0h2M597.0 696.6h2M593.5 701.3h2.5M581.0 700.2h2.5M604.6 703.8h2M571.0 704.3h2.5M613.9 704.1h1M577.1 701.3h1M615.4 705.9h1M603.8 706.0h1.5M580.5 696.3h2.5M588.4 693.3h2M587.6 703.6h2M598.6 712.1h1M603.8 701.4h2M590.5 697.2h1M590.4 712.3h2.5M593.9 702.2h1M612.5 706.2h2.5M611.1 698.5h1.5M584.3 708.7h1M588.6 695.8h1M581.4 700.9h1M597.8 701.1h1M589.8 693.1h1.5M592.8 704.8h2.5M568.3 704.2h1.5M615.4 700.4h1M562.8 706.7h1.5M605.9 712.7h2.5M602.5 703.7h1M576.1 707.4h1M580.6 698.1h1M587.0 707.2h1.5M617.2 704.8h1M585.0 689.1h1.5M613.0 701.3h1.5M586.0 702.0h1M601.8 706.4h1.5M563.3 703.4h1M597.7 714.8h1.5M615.9 699.3h1.5M606.4 694.3h1.5M594.2 696.6h1.5M629.8 705.0h1.5M594.1 698.2h1.5M593.9 710.3h1.5M566.1 706.4h1M565.6 704.7h1M623.7 708.0h1M623.4 710.5h1.5M600.6 705.8h1M583.7 700.6h1.5M564.7 706.0h1M611.9 711.4h1M597.4 704.4h1M615.0 700.1h1M569.8 706.6h1M600.9 698.3h1M584.8 697.4h1.5M601.7 715.2h1.5M626.4 704.8h1M614.8 700.9h1M606.4 698.0h1M587.9 707.4h1M620.7 696.3h1M605.3 693.8h1.5M563.7 704.6h1.5M623.8 708.0h1.5M628.9 705.4h1M626.0 705.1h1M600.8 712.5h1.5M617.2 698.8h1.5M601.1 691.7h1M577.9 701.4h1.5M581.4 705.6h1M596.7 708.7h1M606.4 712.6h1M568.6 707.3h1M577.5 704.6h1.5M608.7 705.0h1.5M565.3 704.5h1.5M586.2 713.0h1M604.7 704.3h1M567.7 707.5h1.5M574.3 699.5h1M597.9 705.2h1.5M586.3 701.5h1.5M615.2 712.8h1.5M620.2 710.0h1M605.3 700.7h1M595.7 704.9h1.5M592.3 709.5h1M625.5 698.5h1M631.7 701.3h1.5M607.8 700.7h1.5" stroke="#2c22c8" stroke-width="1.5" fill="none"/><path d="M153.2 710.5h1.5M152.7 708.4h1.5M145.4 708.9h1.5M150.0 708.1h1.5M154.0 709.6h1.5M386.0 711.0h2M383.7 706.3h3M397.3 706.2h2M392.9 708.4h2.5M407.5 708.1h2M403.2 707.5h2.5M389.7 710.0h3M392.9 706.9h1.5M391.6 701.9h2.5M390.3 709.4h2M381.2 705.3h3M380.0 709.6h3M394.6 703.4h2M385.3 704.7h3M381.5 704.7h1.5M397.0 707.3h2M383.6 707.9h2M384.4 705.8h2.5M382.1 702.8h2.5M397.9 707.8h3M376.0 709.1h3M381.4 701.2h1.5M380.2 707.6h3M389.2 704.2h1.5M376.4 708.3h3M404.7 707.2h2.5M396.8 702.0h2M396.1 709.9h1.5M399.6 704.9h2M396.4 703.1h3M385.5 708.3h2.5M385.5 704.9h2.5M377.1 708.8h3M392.9 706.3h3M383.1 705.8h3M380.7 702.5h2.5M390.9 706.8h2M388.7 705.5h2M405.3 704.3h3M387.8 705.1h2M390.8 703.4h3M390.3 706.3h1.5M387.0 703.6h2M396.5 706.1h2M381.5 703.3h3M393.4 706.0h2M387.6 703.2h2.5M406.1 706.6h2M402.7 704.1h3M395.5 704.1h2.5M399.0 706.9h2.5M384.9 709.3h2.5M379.0 706.9h3M379.5 702.9h2.5M395.2 702.2h3M398.9 709.8h1.5M392.6 710.5h2M391.9 705.2h2.5M392.7 704.8h3M382.4 703.3h2M386.2 706.0h1.5M392.1 709.0h3M391.6 706.4h2.5M387.5 704.8h1.5M392.5 704.8h1.5M380.6 706.4h2M381.1 704.6h2.5M403.1 709.0h1.5M407.3 706.6h2M405.8 708.9h2.5M408.6 704.9h3M389.5 710.2h3M385.6 701.6h2.5M385.3 703.1h2M377.6 709.9h1.5M387.9 706.6h2M386.6 704.7h1.5M401.7 705.9h2M375.1 707.6h3M378.4 706.0h1.5M387.1 704.8h1.5M395.1 708.0h2.5M386.9 709.2h3M389.7 710.3h2M391.9 701.6h3M390.9 703.8h1.5M394.6 708.9h3M377.9 703.7h2.5M386.6 710.3h2.5M405.2 705.5h3M405.4 708.7h3M391.3 702.6h2.5M385.2 705.2h1.5M401.2 707.5h2.5M396.3 705.0h2.5M379.3 704.3h2.5M389.8 702.9h1.5M395.7 707.2h1.5M376.6 709.5h2M397.0 708.4h2.5M398.4 702.6h1.5M388.5 704.3h2.5M402.7 705.5h3M406.6 708.7h2M395.5 702.4h2M389.4 706.8h2M379.9 706.2h3M384.3 701.3h2.5M397.3 709.0h3M397.6 707.1h2M398.3 708.5h3M382.9 701.6h3M393.5 705.7h2.5M398.8 703.8h3M387.3 704.1h1.5M378.0 708.6h2M385.5 707.6h3M387.3 702.3h2.5M381.2 703.1h1.5M400.4 707.2h1.5M383.9 707.2h3M397.2 707.7h3M395.0 702.1h3M406.4 705.6h1.5M401.7 705.5h1.5M388.3 701.6h2.5M403.3 706.3h1.5M387.1 702.1h2M389.2 707.7h1.5M380.4 709.1h1.5M394.3 706.4h2.5M390.7 704.8h3M378.3 702.0h2.5M403.2 708.3h2M380.9 708.1h3M387.0 708.6h2.5M389.5 703.2h2.5M409.1 706.6h2M393.9 710.3h1.5M378.4 708.8h2M400.4 705.4h2M407.7 706.7h1.5M388.7 702.2h2.5M385.4 704.0h2M402.3 705.9h2.5M395.6 710.4h1.5M386.6 702.3h1.5M406.2 706.0h3M399.0 703.5h2.5M392.2 709.2h2.5M390.0 707.1h1.5M385.5 708.1h1.5M394.2 703.9h2.5M382.2 701.3h2M379.2 706.2h2M406.9 706.5h3M409.7 708.3h1.5M381.5 710.1h2.5M387.7 701.4h1.5M408.1 705.4h2.5M387.3 704.8h3M386.3 708.0h2M398.4 705.1h3M376.3 706.1h2.5M387.7 709.2h3M388.0 704.5h2.5M385.5 702.1h3M405.9 708.9h3M392.5 701.5h2M398.8 702.9h2M382.9 703.3h1.5M392.6 704.3h2.5M385.9 708.0h1.5M378.4 702.6h2.5M390.9 707.7h2M395.4 710.3h2M445.7 701.4h3M427.9 705.2h2.5M443.2 699.4h2.5M426.6 710.1h2M451.2 707.7h3M427.1 706.2h2M436.1 702.7h2M423.3 709.9h2M432.9 708.1h2.5M442.9 709.3h2.5M443.4 702.4h2.5M433.4 699.7h1.5M422.3 706.7h3M451.2 707.4h3M442.1 701.7h2.5M444.6 701.0h3M433.6 700.2h3M434.5 700.7h1.5M441.4 699.3h2M438.8 703.4h1.5M448.4 709.6h1.5M428.3 703.9h2.5M442.2 697.8h2M445.6 706.6h2.5M421.8 708.2h2M443.6 702.6h1.5M426.5 707.4h2M449.8 705.8h2M444.8 707.9h2M442.2 698.8h1.5M422.2 708.1h1.5M428.4 705.6h1.5M433.4 706.0h2.5M447.7 702.4h1.5M450.1 705.8h2M446.3 703.2h1.5M449.6 704.1h2M431.9 703.7h1.5M422.8 705.8h3M443.9 700.7h1.5M439.2 704.4h3M430.9 707.7h3M439.4 703.6h2M438.8 701.7h2M450.6 709.4h3M438.3 707.1h2M450.7 705.4h1.5M445.7 707.8h3M432.0 704.8h2.5M445.4 710.1h2M423.1 705.7h2M444.4 708.2h2.5M424.3 705.4h2.5M431.8 705.4h2.5M443.3 708.3h1.5M441.6 698.8h2M433.9 703.7h3M437.6 699.7h2.5M446.5 708.8h1.5M435.2 700.8h2.5M427.1 710.0h3M428.8 709.4h2M441.7 705.0h3M436.9 700.5h2M446.8 700.9h1.5M430.4 708.3h3M435.1 700.8h1.5M444.4 698.9h1.5M452.3 706.7h1.5M433.6 699.8h2M447.7 709.0h2M437.0 710.7h2M450.0 706.9h3M445.2 700.5h2.5M444.4 703.9h3M443.4 707.3h2.5M452.8 705.3h2.5M428.2 703.4h2M434.8 706.6h2M446.5 702.2h1.5M443.8 710.1h3M435.6 703.9h3M424.7 708.9h2M432.7 708.5h1.5M430.6 707.4h3M444.0 706.6h2M429.0 706.7h2.5M441.5 702.1h2M424.0 705.6h2.5M450.7 707.9h3M425.5 708.4h1.5M452.2 709.6h3M433.2 704.0h2.5M439.8 701.7h3M436.9 702.3h1.5M440.5 698.7h3M437.8 699.0h3M431.6 701.2h1.5M441.7 706.8h2M439.1 703.1h3M432.7 710.5h1.5M432.1 709.8h1.5M441.6 700.4h2M430.6 706.9h1.5M442.0 710.3h1.5M437.4 709.0h3M441.4 709.8h3M428.8 710.4h3M429.6 704.7h3M443.4 710.6h2.5M440.4 708.8h2.5M435.6 701.6h2M449.3 709.8h3M421.6 706.9h3M437.9 699.1h2M439.6 708.0h1.5M449.7 703.4h1.5M440.9 699.0h3M449.2 705.9h1.5M420.6 707.3h3M424.1 709.0h2.5M440.4 698.0h2M449.8 703.8h2.5M437.4 704.9h1.5M445.2 705.1h2.5M422.8 708.7h3M437.3 707.6h2.5M449.6 707.6h2M436.8 709.5h3M442.6 701.8h1.5M427.7 707.8h2.5M444.5 702.5h2.5M446.6 709.6h2M435.2 709.3h3M427.2 708.7h2.5M425.1 706.8h3M428.6 704.0h3M429.5 709.0h2.5M446.5 706.7h2M442.1 699.7h2M448.5 703.5h1.5M434.4 704.0h1.5M448.5 709.7h1.5M443.1 709.3h2M439.4 701.8h2.5M446.9 707.3h1.5M431.5 702.4h1.5M442.9 700.6h2.5M433.2 709.6h2M445.1 699.5h1.5M437.8 710.8h2M446.3 707.2h1.5M439.9 709.8h2M422.0 705.9h2M439.8 708.9h1.5M421.8 707.2h2.5M448.7 708.6h2.5M437.0 700.5h2.5M442.0 704.7h1.5M433.4 699.2h2M446.6 709.5h2M441.5 697.8h2.5M427.5 706.1h2.5M424.1 704.5h2M445.7 703.8h3M447.3 706.7h2.5M438.7 700.8h2.5M440.4 702.8h2M450.5 705.3h1.5M433.1 706.7h2.5M430.3 705.6h1.5M441.1 706.0h1.5M445.6 703.9h1.5M427.2 707.4h2.5M454.6 707.2h2.5M452.9 709.9h3M451.0 705.1h2.5M438.6 709.6h3M422.7 705.4h3M444.3 703.8h3M432.9 699.4h3M423.7 706.4h3M436.1 709.9h3M436.0 703.2h2.5M441.3 698.1h1.5M450.4 706.6h1.5M449.2 702.7h3M443.0 700.6h1.5M445.3 708.3h2M445.3 708.8h3M450.0 704.1h1.5M428.1 707.2h2M436.7 698.8h1.5M624.6 705.8h2M585.9 704.0h3M595.7 703.5h2.5M591.9 706.9h1.5M607.0 703.7h1.5M591.6 706.3h2M605.9 707.0h2.5M584.4 697.8h2M584.5 701.5h3M614.3 705.2h3M566.0 706.0h1.5M576.5 705.1h2.5M592.7 697.6h2M602.1 703.8h1.5M595.0 707.6h2M590.3 704.7h2.5M602.1 705.4h2M620.8 705.8h2.5M607.4 704.3h1.5M587.0 702.1h2M588.8 705.6h3M612.8 706.1h1.5M610.9 709.0h2M582.4 698.2h2.5M610.3 703.1h2.5M589.6 706.4h2M566.6 705.9h2.5M591.4 699.9h1.5M620.6 706.7h2M572.9 704.0h2M565.8 704.4h2M608.1 704.6h3M575.2 704.0h2.5M596.9 702.1h2M588.3 705.9h2M592.3 704.7h3M576.8 704.7h2M587.6 704.5h3M612.3 705.6h2M592.8 700.0h2M604.9 706.9h2M616.6 702.5h3M608.2 699.4h2.5M608.9 709.1h2M588.4 703.1h3M603.4 701.3h1.5M584.8 703.2h3M613.1 701.1h1.5M578.5 703.1h2M610.0 698.3h1.5M613.8 707.3h2M604.8 699.9h2.5M590.4 703.2h3M593.6 701.6h3M583.2 699.6h3M602.9 703.3h2M598.8 709.3h1.5M617.5 707.4h3M587.2 701.0h2M593.5 705.0h1.5M621.0 703.7h1.5M593.7 696.5h2.5M605.0 702.5h2M619.1 701.5h2.5M580.8 703.6h3M605.1 709.2h2M598.8 706.5h2M606.7 707.9h2.5M585.2 697.9h2.5M606.4 703.8h2M619.8 706.9h2M601.4 702.6h3M589.2 704.6h2M586.9 705.0h1.5M609.1 698.1h2M598.5 698.2h1.5M613.8 705.0h2.5M614.5 701.0h3M587.0 699.5h1.5M596.4 704.5h2M605.3 706.0h2.5M583.9 704.0h2.5M600.2 709.1h3M610.4 701.9h3M584.7 705.5h2.5M585.3 704.9h2.5M603.4 697.3h2.5M617.3 706.0h2.5M595.2 700.4h2M585.1 705.3h3M612.1 699.5h2.5M582.8 701.4h1.5M609.9 708.1h1.5M617.8 702.1h2.5M597.4 706.7h3M605.4 708.7h2M582.1 698.8h1.5M603.3 702.5h2.5M606.1 701.5h2M614.5 704.6h2.5M570.8 705.4h2M617.8 703.8h3M609.5 699.4h2M615.1 701.6h3M590.1 704.8h2.5M623.3 705.9h3M614.2 705.9h1.5M585.4 705.1h2M593.0 695.8h2.5M599.6 698.1h2M597.7 696.8h2.5M590.2 705.2h1.5M600.1 700.5h3M590.0 697.9h3M603.2 698.4h2.5M613.7 703.6h2.5M599.5 710.6h2.5M611.6 703.4h2.5M595.1 703.6h3M586.7 703.3h2M609.6 700.8h3M615.2 701.2h2.5M604.4 703.7h1.5M608.3 707.1h2.5M601.7 706.8h3M605.3 709.5h2M575.0 704.6h2M610.3 703.5h2M606.8 703.2h2M601.4 706.9h3M599.5 707.3h3M608.2 703.9h3M587.5 704.9h2M622.1 702.6h2M581.8 703.2h3M596.4 703.2h3M608.8 703.8h2.5M614.3 701.3h2.5M590.2 703.0h3M605.3 702.9h3M613.9 707.0h3M610.3 701.3h1.5M572.1 703.0h3M593.0 707.6h2.5M595.1 699.8h3M608.3 702.5h3M587.9 703.1h3M595.9 709.5h2M610.6 703.2h3M611.1 701.4h1.5M608.5 709.0h2M588.1 705.2h1.5M586.3 704.6h1.5M589.9 705.2h2M610.8 707.6h2.5M597.7 701.4h2M588.7 698.5h2.5M612.1 700.3h3M599.3 702.8h1.5M611.6 706.6h3M589.5 703.8h3M602.1 700.5h2M597.7 698.2h1.5M599.2 697.8h2.5M579.4 703.3h1.5M617.1 703.4h1.5M605.5 699.0h2M591.3 697.7h2.5M601.6 710.3h2.5M604.4 702.6h1.5M590.2 696.0h2.5M591.9 707.8h1.5M599.4 707.3h3M615.9 700.5h2M593.8 706.5h1.5M599.9 703.0h2M583.8 698.0h2M595.4 696.6h2.5M618.0 704.5h2.5M565.4 705.2h2.5M595.7 697.6h2M602.7 709.3h3M597.7 700.2h2M608.3 708.6h2.5M607.1 698.3h2M588.5 697.1h2.5M612.2 698.9h1.5M600.8 708.9h2M568.1 704.9h3M602.0 707.4h3M595.5 697.8h1.5M588.7 701.7h2M578.1 704.1h1.5M619.6 702.7h2M601.7 697.5h3M588.6 705.5h3M604.5 707.5h1.5M576.4 706.0h2M606.8 706.7h3M596.0 696.3h1.5M594.8 707.2h1.5M607.6 705.8h2.5M594.3 708.7h1.5M619.9 707.0h3M577.4 705.3h3M594.7 705.5h1.5M583.0 705.8h3M608.9 701.6h2.5M608.4 701.9h2.5M565.4 706.1h2.5M607.2 703.0h3M608.3 701.1h1.5M605.9 699.4h2M584.2 703.6h2M612.4 708.4h3M620.5 703.7h1.5M595.5 706.1h2.5M600.0 697.7h3M587.9 703.0h2.5M618.7 705.4h2M592.4 695.8h2M587.6 704.1h1.5M587.0 700.6h1.5M618.6 701.8h3M600.5 710.4h2M600.0 696.2h2.5M612.2 706.0h3M599.0 701.0h2.5M585.7 704.4h1.5M609.7 704.6h2M615.1 702.2h2M582.8 700.6h3M584.4 704.1h1.5M617.0 705.4h1.5M598.8 702.3h2M581.9 705.0h3M597.6 704.5h2M613.3 706.8h3M597.0 696.3h1.5M612.9 699.2h2M588.1 697.0h2.5M606.3 704.0h3M584.7 702.0h1.5M582.8 706.0h1.5M623.7 703.2h2M583.7 702.1h2.5M604.0 706.7h2M611.0 704.0h1.5M608.9 699.4h3M595.7 707.7h3M587.9 704.6h3M611.8 702.9h1.5M591.3 705.6h2.5M597.7 708.4h2M624.2 703.1h2M616.2 700.1h2M606.2 704.3h2M585.2 705.5h3M585.0 697.8h1.5M593.2 699.4h1.5M598.8 701.1h2M568.5 703.6h2M601.6 696.6h2.5M573.2 705.8h1.5M579.7 703.4h1.5M574.7 703.4h1.5M567.7 704.2h1.5M613.0 704.2h2.5M603.4 709.0h1.5M576.7 705.7h2M577.3 704.1h3M621.4 706.5h1.5M599.5 701.7h3M568.0 704.8h3M582.8 700.0h2.5M574.3 702.8h3M596.8 700.1h2M594.5 702.2h1.5M585.4 696.3h2M576.0 705.2h2M591.7 704.7h1.5M604.3 705.1h3M587.3 705.3h2.5M590.8 703.0h2.5M616.6 700.4h2M616.6 703.2h2M599.8 708.2h1.5M602.6 703.0h3M596.3 707.1h3M601.9 708.4h2.5M601.6 702.6h2M607.6 697.6h1.5M580.5 702.6h1.5M619.7 704.1h1.5M604.3 705.5h2M573.7 705.3h1.5M598.4 707.6h3M590.8 696.9h2M614.4 708.2h3M601.3 702.1h1.5M600.9 706.4h2M603.9 697.6h2M592.0 705.5h2M595.8 699.2h3M613.4 702.8h2.5M607.6 707.1h2M592.4 705.7h2M585.5 703.9h3M582.8 703.9h3M598.4 708.0h2.5M586.9 702.5h2.5M583.5 705.6h3M596.4 705.0h2.5M564.9 704.4h1.5M605.8 709.8h2M576.5 705.5h2M610.6 703.4h2M599.9 708.4h3M602.4 697.2h3M599.9 697.3h2M595.1 706.9h1.5M595.3 702.1h2.5M579.0 703.3h2M570.9 705.4h2M589.8 702.0h3M619.9 705.8h1.5M602.1 709.4h2M577.0 702.8h1.5M587.6 696.8h2" stroke="#f20a2c" stroke-width="1.9" fill="none"/><path d="M396.8 708.3h1.2M395.8 709.0h1.2M408.3 706.3h1.2M405.6 704.7h1.2M389.2 701.9h1.2M397.8 703.3h1.2M381.0 702.3h1.2M398.3 708.2h1.2M392.0 708.6h1.2M439.3 699.5h1.2M445.7 704.2h1.2M447.0 704.1h1.2M439.8 703.0h1.2M442.3 708.0h1.2M439.8 707.9h1.2M434.5 701.5h1.2M438.4 700.8h1.2M442.1 699.3h1.2M445.8 708.2h1.2M583.9 702.7h1.2M599.8 699.7h1.2M601.8 699.5h1.2M579.2 704.0h1.2M617.8 702.1h1.2M601.4 709.8h1.2M608.2 705.7h1.2M591.1 703.3h1.2M604.0 700.8h1.2M592.7 699.7h1.2M604.8 705.0h1.2M613.2 702.4h1.2M596.8 707.5h1.2M600.4 707.1h1.2M582.2 703.7h1.2M623.3 703.3h1.2M611.2 703.7h1.2" stroke="#30b8e0" stroke-width="1.2" fill="none"/><path d="M344.6 707.7h1.5M347.9 712.3h1M342.1 712.0h2M349.2 710.9h1.5M342.4 711.2h1.5M344.8 708.4h1.5M344.2 707.2h1M345.3 710.0h1M343.6 711.6h1M344.8 714.0h2M260.2 650.1h2.5M262.7 651.3h2M259.2 676.0h1M266.6 675.6h2.5M265.1 676.3h2.5M267.9 676.3h1M466.4 692.6h2M469.7 691.2h1M471.1 693.3h2.5M477.1 703.5h2.5M473.2 701.9h1.5M472.2 700.0h1M484.3 705.5h1M487.8 703.2h1M486.4 701.5h1.5M533.0 697.1h1M534.0 703.5h1M522.4 702.8h2M524.6 701.5h2.5M523.6 699.8h1.5M529.6 702.5h1M533.8 699.0h2.5M522.4 703.0h1.5M522.9 699.4h1.5M531.1 697.9h1.5M522.9 703.9h1.5M510.3 703.3h1.5M504.8 702.4h1M505.0 707.4h1M503.2 706.2h2M509.3 702.2h1M510.1 704.8h1M634.9 692.2h1.5M635.4 692.9h1.5M635.8 693.3h1M637.3 693.3h2M677.7 690.7h2M678.3 693.6h1M688.4 701.3h2M679.7 703.3h2M680.6 701.8h1.5M683.5 704.7h2M713.3 697.1h1M712.9 698.1h2M715.0 701.2h2.5M713.2 697.9h2.5M715.2 705.0h2.5M714.4 703.3h2M712.2 707.7h2.5M711.1 705.0h2.5M710.9 702.6h2.5M714.7 701.1h2M711.8 706.2h2.5M698.8 714.1h2M697.3 714.4h1.5M697.5 713.8h2M701.5 714.2h1M671.3 669.9h2M671.4 669.7h1M668.8 664.2h2M700.1 671.1h2M695.3 670.7h1.5M696.0 671.3h1M697.0 670.4h2M705.2 672.2h1.5M708.1 671.1h2M342.5 689.4h1M357.5 687.4h1M361.6 687.5h2M360.2 686.1h1.5M382.3 690.7h2M326.5 697.6h1M317.2 696.6h2M295.9 702.0h1.5M116.2 703.0h2.5M120.8 702.5h2.5M160.6 642.8h1M158.5 646.9h1.5M165.4 645.2h1.5M175.9 656.6h1M203.1 590.7h1M202.1 601.4h1.5M487.5 628.6h2M456.9 667.4h2M456.1 666.7h2M538.4 663.5h2.5M533.2 663.8h2.5M533.6 663.3h2M557.3 663.9h2.5M559.2 664.2h1M576.8 649.3h1M577.7 649.7h1M577.6 649.3h1.5M619.3 626.3h1M620.9 626.6h2M624.0 632.5h1M657.0 612.5h2M656.4 612.0h2.5M724.0 649.5h1.5M721.3 648.8h1M731.2 611.6h1.5M286.1 545.5h2M95.8 615.2h1M260.8 613.9h1M230.8 624.4h1M231.7 624.2h1.5M319.3 634.4h1.5M360.4 644.2h2M416.5 692.3h2.5M416.6 693.1h2.5M252.2 705.2h1M314.7 702.0h2.5M315.4 699.6h2.5M461.3 709.6h1.5M461.4 710.0h1M437.7 616.0h2M531.3 667.2h1M155.6 687.2h1M154.1 685.3h1.5M535.2 690.1h1.5M132.9 638.6h1.5M419.3 598.6h1.5M204.6 686.9h1.5M549.4 712.4h1.5M685.4 669.5h1M580.6 680.5h1M267.4 710.5h1M632.6 700.4h1M421.7 672.0h1M407.3 710.9h1M719.7 705.1h1M442.5 642.7h1M544.6 701.2h1.5M695.5 717.6h1.5M216.3 680.8h1.5M346.0 692.9h1.5M399.8 707.8h1.5M315.5 688.6h1.5M526.5 715.6h1.5M668.6 700.7h1.5M392.1 666.4h1M605.1 690.9h1" stroke="#2a1a5a" stroke-width="1.1" fill="none"/><path d="M345.0 706.3h2M346.5 708.7h1M344.1 713.8h1.5M344.9 709.7h2.5M257.8 651.0h1M261.9 651.2h2.5M260.5 651.0h1M266.8 675.4h2.5M264.2 674.9h2.5M471.3 693.2h1M466.6 693.3h1.5M482.6 702.5h1M487.9 702.0h2.5M484.8 704.9h1.5M484.7 703.5h2M487.6 704.0h1.5M472.0 705.9h2M483.8 701.8h1M485.3 705.3h2.5M472.7 705.8h2M484.7 701.3h2.5M521.8 703.2h1M533.1 697.5h1.5M530.8 696.4h2M530.2 696.1h1M532.6 696.6h1M536.7 703.7h2.5M524.8 704.0h2M524.6 702.3h2.5M524.4 702.7h1.5M536.5 699.9h2.5M530.7 700.4h2.5M507.0 703.9h2M634.3 692.8h2M676.7 689.9h2.5M672.4 690.6h1.5M678.5 690.7h1M670.5 693.1h2.5M675.1 692.4h2M679.8 703.9h2.5M688.1 702.1h1.5M679.9 704.0h2.5M687.4 701.5h2.5M713.9 700.8h1.5M717.1 697.7h1M712.6 706.8h1.5M712.8 701.6h2M714.4 698.8h1M701.8 713.6h1M668.1 667.5h1M668.4 664.6h1.5M668.0 666.7h1M699.0 668.6h1M707.5 671.0h1M706.2 671.6h1M338.0 689.8h2M342.8 689.5h1.5M336.6 690.2h1M365.4 687.5h2.5M359.2 687.4h1M381.7 691.1h1M380.0 690.8h2.5M327.3 696.1h1.5M328.0 696.0h2.5M309.6 701.3h2.5M302.3 700.5h1.5M309.5 700.6h2.5M120.2 703.0h1.5M165.6 643.1h1M174.5 656.6h2.5M205.7 590.2h1.5M204.5 601.5h2.5M422.9 617.8h2M421.8 618.3h1.5M485.8 628.5h1.5M557.5 664.4h1M622.5 633.3h1.5M653.3 618.1h1M654.0 617.4h1.5M649.3 633.9h2.5M648.4 634.4h2M728.8 611.8h1.5M658.7 555.4h2.5M94.3 615.6h2.5M162.5 614.2h2.5M162.0 613.5h1.5M264.4 614.9h2.5M358.8 645.4h1.5M409.4 692.8h1.5M254.7 705.7h1.5M120.6 702.6h1M292.2 696.3h1.5M292.2 697.6h1M314.5 700.8h2M328.2 701.1h1.5M326.4 702.1h1.5" stroke="#6a2a9a" stroke-width="1.1" fill="none"/><path d="M546 696.2h10 M230 702.6h6" stroke="#9a8a9a" stroke-width="1" fill="none"/><path d="M72.5 728 V534.5 H735" stroke="#111" stroke-width="1" fill="none"/><path d="M72 727.5 H734.5 V534" stroke="#222" stroke-width="1" fill="none"/></svg>
<div class="a" style="left:2px;top:765px;width:784px;height:13px;background:linear-gradient(#e3e5e8,#eceef0 30%,#eceef0)"></div>
<svg class="a" style="left:6px;top:768px" width="5" height="7" viewBox="0 0 5 7"><path d="M4.2 0.4 L0.8 3.5 L4.2 6.6Z" fill="#333"/></svg>
<svg class="a" style="left:776.5px;top:768px" width="5" height="7" viewBox="0 0 5 7"><path d="M0.8 0.4 L4.2 3.5 L0.8 6.6Z" fill="#333"/></svg>
<div class="a" style="left:412px;top:765px;width:13.5px;height:12.6px;border:1px solid #8e9196;border-radius:2px;background:linear-gradient(#f4f4f4,#e2e3e5 50%,#d2d4d7 51%,#dcdee0)"></div>
<svg class="a" style="left:793px;top:484px" width="250" height="294" viewBox="793 141 250 294" font-family="Liberation Sans, sans-serif" font-size="10"><rect x="832.6" y="191.5" width="189.19999999999993" height="171.0" fill="#f5f5f5"/><path d="M856.25 191.5 V362.5 M879.90 191.5 V362.5 M903.55 191.5 V362.5 M927.20 191.5 V362.5 M950.85 191.5 V362.5 M974.50 191.5 V362.5 M998.15 191.5 V362.5 M832.6 331.50 H1021.8 M832.6 300.50 H1021.8 M832.6 269.50 H1021.8 M832.6 238.50 H1021.8 M832.6 207.50 H1021.8" stroke="#c3c3c3" stroke-width="1" fill="none"/><rect x="832.60" y="360.95" width="23.65" height="1.55" fill="#2233aa" stroke="#222" stroke-width="1"/><rect x="856.25" y="283.14" width="23.65" height="79.36" fill="#0a84f4" stroke="#222" stroke-width="1"/><rect x="879.90" y="215.56" width="23.65" height="146.94" fill="#00f2f2" stroke="#222" stroke-width="1"/><rect x="903.55" y="307.94" width="23.65" height="54.56" fill="#0fe80f" stroke="#222" stroke-width="1"/><rect x="927.20" y="340.18" width="23.65" height="22.32" fill="#ffee00" stroke="#222" stroke-width="1"/><rect x="950.85" y="358.16" width="23.65" height="4.34" fill="#ff9000" stroke="#222" stroke-width="1"/><path d="M832.6 191.5 H1021.8 V362.5 H832.6 Z" stroke="#222" stroke-width="1.1" fill="none"/><path d="M832.60 185.8 V191.5 M837.33 187.8 V191.5 M842.06 187.8 V191.5 M846.79 187.8 V191.5 M851.52 187.8 V191.5 M856.25 185.8 V191.5 M860.98 187.8 V191.5 M865.71 187.8 V191.5 M870.44 187.8 V191.5 M875.17 187.8 V191.5 M879.90 185.8 V191.5 M884.63 187.8 V191.5 M889.36 187.8 V191.5 M894.09 187.8 V191.5 M898.82 187.8 V191.5 M903.55 185.8 V191.5 M908.28 187.8 V191.5 M913.01 187.8 V191.5 M917.74 187.8 V191.5 M922.47 187.8 V191.5 M927.20 185.8 V191.5 M931.93 187.8 V191.5 M936.66 187.8 V191.5 M941.39 187.8 V191.5 M946.12 187.8 V191.5 M950.85 185.8 V191.5 M955.58 187.8 V191.5 M960.31 187.8 V191.5 M965.04 187.8 V191.5 M969.77 187.8 V191.5 M974.50 185.8 V191.5 M979.23 187.8 V191.5 M983.96 187.8 V191.5 M988.69 187.8 V191.5 M993.42 187.8 V191.5 M998.15 185.8 V191.5 M1002.88 187.8 V191.5 M1007.61 187.8 V191.5 M1012.34 187.8 V191.5 M1017.07 187.8 V191.5 M1021.80 185.8 V191.5 M829 362.50 H832.6 M831 347.00 H832.6 M829 331.50 H832.6 M831 316.00 H832.6 M829 300.50 H832.6 M831 285.00 H832.6 M829 269.50 H832.6 M831 254.00 H832.6 M829 238.50 H832.6 M831 223.00 H832.6 M829 207.50 H832.6" stroke="#222" stroke-width="1" fill="none"/><text x="831.40" y="185.2" text-anchor="middle" fill="#222" letter-spacing="-0.4">-35</text><text x="855.05" y="185.2" text-anchor="middle" fill="#222" letter-spacing="-0.4">-30</text><text x="878.70" y="185.2" text-anchor="middle" fill="#222" letter-spacing="-0.4">-25</text><text x="902.35" y="185.2" text-anchor="middle" fill="#222" letter-spacing="-0.4">-20</text><text x="926.00" y="185.2" text-anchor="middle" fill="#222" letter-spacing="-0.4">-15</text><text x="949.65" y="185.2" text-anchor="middle" fill="#222" letter-spacing="-0.4">-10</text><text x="973.30" y="185.2" text-anchor="middle" fill="#222" letter-spacing="-0.4">-5</text><text x="998.15" y="185.2" text-anchor="middle" fill="#222" letter-spacing="-0.4">0</text><text x="1021.80" y="185.2" text-anchor="middle" fill="#222" letter-spacing="-0.4">5</text><text x="828" y="366.10" text-anchor="end" fill="#222" letter-spacing="-0.4">0</text><text x="828" y="335.10" text-anchor="end" fill="#222" letter-spacing="-0.4">10</text><text x="828" y="304.10" text-anchor="end" fill="#222" letter-spacing="-0.4">20</text><text x="828" y="273.10" text-anchor="end" fill="#222" letter-spacing="-0.4">30</text><text x="828" y="242.10" text-anchor="end" fill="#222" letter-spacing="-0.4">40</text><text x="828" y="211.10" text-anchor="end" fill="#222" letter-spacing="-0.4">50</text><text transform="translate(802.4 223.5) rotate(-90)" text-anchor="middle" fill="#dd2c48" letter-spacing="-0.3">SED Count (%)</text><text x="834.5" y="375.00" fill="#222" letter-spacing="-0.32" xml:space="preserve">Ping # 2385</text><text x="970.4" y="375.00" fill="#222" letter-spacing="-0.32" xml:space="preserve">Total: 209</text><text x="834.5" y="386.70" fill="#222" letter-spacing="-0.32" xml:space="preserve">Max bin: 47.4%</text><text x="909" y="386.70" fill="#222" letter-spacing="-0.32" xml:space="preserve">Count: 99</text><text x="834.5" y="398.40" fill="#222" letter-spacing="-0.32" xml:space="preserve">TS: --</text><text x="834.5" y="410.00" fill="#222" letter-spacing="-0.32" xml:space="preserve">Percent: --</text><text x="909" y="410.00" fill="#222" letter-spacing="-0.32" xml:space="preserve">Count: --</text><text x="834.5" y="421.70" fill="#222" letter-spacing="-0.32" xml:space="preserve">Histogram Interval:  300 pings, 60.3 secs</text></svg>
<div class="a" style="left:2px;top:778px;width:1041.5px;height:17.5px;background:#eff4f9;border-top:1.4px solid #5a5a5a"></div>
<div class="a" style="left:225.5px;top:780px;width:1px;height:15px;background:#d3d8de"></div>
<div class="a" style="left:226.5px;top:780px;width:1px;height:15px;background:#fff"></div>
<div class="a" style="left:352px;top:780px;width:1px;height:15px;background:#d3d8de"></div>
<div class="a" style="left:353px;top:780px;width:1px;height:15px;background:#fff"></div>
<div class="a" style="left:414.5px;top:780px;width:1px;height:15px;background:#d3d8de"></div>
<div class="a" style="left:415.5px;top:780px;width:1px;height:15px;background:#fff"></div>
<div class="a" style="left:580.5px;top:780px;width:1px;height:15px;background:#d3d8de"></div>
<div class="a" style="left:581.5px;top:780px;width:1px;height:15px;background:#fff"></div>
<div class="a" style="left:828px;top:780px;width:1px;height:15px;background:#d3d8de"></div>
<div class="a" style="left:829px;top:780px;width:1px;height:15px;background:#fff"></div>
<div class="t" style="top:782.70px;font-size:10px;letter-spacing:-0.42px;color:#222;left:4.80px;white-space:pre;">2012-08-09 12:44:22.999 GMT-07:00</div>
<div class="t" style="top:782.70px;font-size:10px;letter-spacing:-0.42px;color:#222;left:228.40px;white-space:pre;">Ping #: 2385/4480</div>
<div class="t" style="top:782.70px;font-size:10px;letter-spacing:-0.42px;color:#222;left:355.00px;white-space:pre;">4.98 pps</div>
<div class="t" style="top:782.70px;font-size:10px;letter-spacing:-0.42px;color:#222;left:417.20px;white-space:pre;">\ Range to Bottom: 80.0 m</div>
<div class="t" style="top:782.70px;font-size:10px;letter-spacing:-0.42px;color:#222;left:583.20px;white-space:pre;">Lat/Lon: \ 49° 1.724'N, 123° 15.068'W</div>
<div class="t" style="top:782.70px;font-size:10px;letter-spacing:-0.42px;color:#222;left:830.60px;white-space:pre;">\ P:-0.5°, R:0.7°  |  C: 255.9°</div>
<div class="a" style="left:0;top:795px;width:1046px;height:5px;background:#b4cff0"></div>
<div class="a" style="left:0;top:800px;width:1046px;height:1.4px;background:#2f7f86"></div>
<div class="a" style="left:0;top:801.4px;width:1048px;height:3px;background:#fbfbfb"></div>
<div class="a" style="left:0;top:804px;width:1048px;height:1px;background:#a0a0a0"></div>
<div class="a" style="left:0;top:805px;width:1048px;height:17px;background:#f0eded"></div>
<div class="a" style="left:0;top:822px;width:1048px;height:2px;background:#7c7c7c"></div>
<div class="a" style="left:5px;top:818px;width:21px;height:21px;border:1.2px solid #6f7f93;border-radius:50%;background:#e6ebf2"></div>
<div class="a" style="left:0;top:822px;width:1048px;height:2px;background:#7c7c7c"></div>
<div class="t" style="top:807.72px;font-size:12px;letter-spacing:0px;color:#111;right:9.50px;transform:scaleX(0.772);transform-origin:right center;white-space:pre;">File:  hemmera20120809_123623.dt4</div>
<div class="a" style="left:1045px;top:0px;width:3px;height:824px;background:#fbfbfb"></div>
<div class="a" style="left:1046.6px;top:0px;width:1.4px;height:824px;background:#6e6e6e"></div>
</div></body></html>
